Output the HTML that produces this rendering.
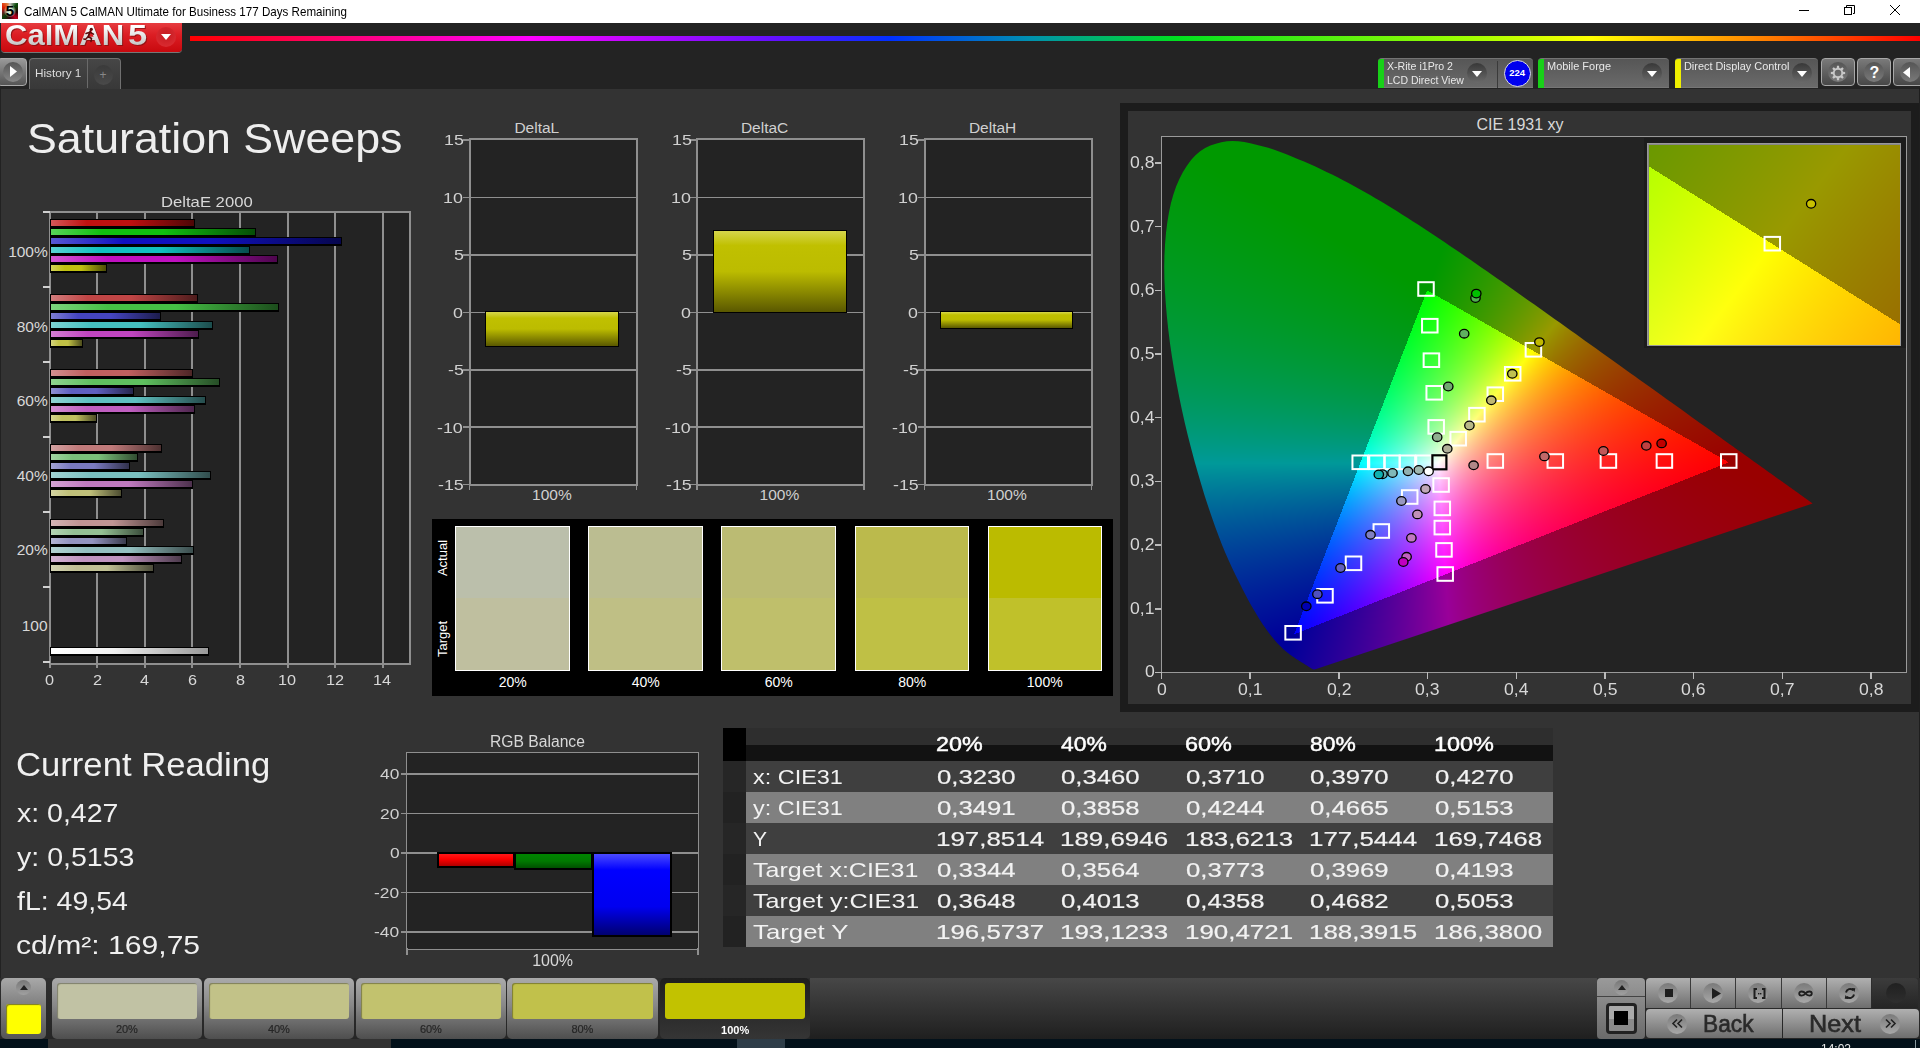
<!DOCTYPE html>
<html><head><meta charset="utf-8">
<style>
html,body{margin:0;padding:0;}
body{width:1920px;height:1048px;overflow:hidden;position:relative;background:#333333;font-family:"Liberation Sans", sans-serif;}
.a{position:absolute;}
.t{position:absolute;white-space:nowrap;line-height:1;}
svg{position:absolute;overflow:visible;}
</style></head><body>

<div class="a" style="left:0;top:0;width:1920px;height:23px;background:#fff;"></div>
<div class="a" style="left:2px;top:3px;width:16px;height:16px;background:conic-gradient(from 0deg,#c8c0c0,#0a4a0a 45deg,#200 100deg,#c00020 140deg,#400010 180deg,#0a400a 225deg,#702020 260deg,#e02000 300deg,#e08040 340deg,#c8c0c0);"></div>
<div class="a" style="left:4px;top:5px;width:12px;height:12px;background:radial-gradient(#d8f0d0 30%,rgba(220,240,210,0) 75%);"></div>
<div class="t" style="left:5.50px;top:3.33px;font-size:15.5px;font-weight:bold;color:#000;">5</div>
<div class="t" style="left:24.00px;top:6.09px;font-size:12.6px;color:#000;transform:scaleX(0.9212);transform-origin:0 0;">CalMAN 5 CalMAN Ultimate for Business 177 Days Remaining</div>
<div class="a" style="left:1799px;top:10px;width:10px;height:1px;background:#000;"></div>
<div class="a" style="left:1844px;top:7px;width:6px;height:6px;border:1px solid #000;"></div>
<svg style="left:1846px;top:5px;" width="9" height="9"><path d="M0.5 2V0.5H8.5V8.5H7" fill="none" stroke="#000" stroke-width="1"/></svg>
<svg style="left:1890px;top:5px;" width="10" height="10"><path d="M0 0L10 10M10 0L0 10" stroke="#000" stroke-width="1"/></svg>

<div class="a" style="left:0;top:23px;width:1920px;height:65.5px;background:#232323;"></div>
<div class="a" style="left:190px;top:35.5px;width:1730px;height:5.2px;background:linear-gradient(to right,#ff0000 0%,#ff00ff 19.6%,#6010ff 34%,#0030ff 40.5%,#0090b0 48.5%,#00e020 57%,#a0ff00 74%,#ffff00 81%,#ff8000 91%,#ff0000 100%);"></div>

<div class="a" style="left:1px;top:23px;width:181px;height:29px;background:linear-gradient(#e63c40,#dc1e24 40%,#c8090e);border-radius:0 0 4px 4px;box-shadow:0 1px 0 #777;"></div>
<div class="a" style="left:0;top:25px;width:182px;height:26px;overflow:hidden;"><div class="a" style="left:0;top:-25px;">
<div class="t" style="left:5.93px;top:21.85px;font-size:29px;font-weight:bold;color:#7a1010;transform:scaleX(1.0718);transform-origin:0 0;opacity:.7;">CalMAN</div>
<div class="t" style="left:129.00px;top:21.85px;font-size:29px;font-weight:bold;color:#7a1010;transform:scaleX(1.1875);transform-origin:0 0;opacity:.7;">5</div>
<div class="t" style="left:4.93px;top:20.85px;font-size:29px;font-weight:bold;color:#e6e6e6;transform:scaleX(1.0718);transform-origin:0 0;background:linear-gradient(#ffffff 20%,#c4c4c4 85%);-webkit-background-clip:text;background-clip:text;-webkit-text-fill-color:transparent;">CalMAN</div>
<div class="t" style="left:128.00px;top:20.85px;font-size:29px;font-weight:bold;color:#e6e6e6;transform:scaleX(1.1875);transform-origin:0 0;background:linear-gradient(#ffffff 20%,#c4c4c4 85%);-webkit-background-clip:text;background-clip:text;-webkit-text-fill-color:transparent;">5</div>
</div></div>
<svg style="left:83px;top:27px;" width="14" height="16"><circle cx="8.3" cy="2.3" r="1.6" fill="#5a0a0a"/><path d="M7.3 4.5L5.2 9.5M6.8 5.2L3 6.5M6.8 5.2L10.5 7.2M5.2 9.5L8.5 11.5L8 14.5M5.2 9.5L2.5 12.5L0.8 12" fill="none" stroke="#5a0a0a" stroke-width="1.5" stroke-linecap="round"/></svg>
<div class="a" style="left:156px;top:27px;width:20px;height:20px;border-radius:50%;background:radial-gradient(circle at 50% 40%,#c51a20,#e03036);"></div>
<svg style="left:161px;top:34px;" width="10" height="6"><path d="M0 0H10L5 6Z" fill="#fff"/></svg>

<div class="a" style="left:-3px;top:58px;width:28px;height:26px;border:1px solid #aaa;border-radius:4px;background:linear-gradient(#999,#555);"></div>
<div class="a" style="left:3px;top:62px;width:20px;height:20px;border-radius:50%;background:linear-gradient(#555,#888);"></div>
<svg style="left:10px;top:66px;" width="7" height="11"><path d="M0 0L7 5.5L0 11Z" fill="#fff"/></svg>
<div class="a" style="left:29px;top:58px;width:90px;height:29.5px;border:1px solid #707070;border-bottom:none;border-radius:4px 4px 0 0;background:linear-gradient(#464646,#383838);"></div>
<div class="a" style="left:87px;top:59px;width:1px;height:29px;background:#6a6a6a;"></div>
<div class="a" style="left:94px;top:65px;width:19px;height:20px;border-radius:50%;background:linear-gradient(#3a3a3a,#4a4a4a);"></div>
<div class="t" style="left:35.00px;top:68.22px;font-size:11.5px;color:#ddd;transform:scaleX(1.0228);transform-origin:0 0;">History 1</div>
<div class="t" style="left:99.50px;top:68.80px;font-size:12px;color:#888;">+</div>
<div class="a" style="left:1378px;top:58px;width:155px;height:28px;border-top:1px solid #747474;border-bottom:1px solid #767676;border-radius:4px 4px 0 0;background:linear-gradient(#565656,#6a6a6a);"></div><div class="a" style="left:1378px;top:59px;width:6px;height:29px;background:#18d018;border-radius:3px 0 0 0;"></div>
<div class="t" style="left:1387.00px;top:60.82px;font-size:10.8px;color:#e8e8e8;transform:scaleX(0.9821);transform-origin:0 0;">X-Rite i1Pro 2</div>
<div class="t" style="left:1387.00px;top:74.82px;font-size:10.8px;color:#e8e8e8;transform:scaleX(0.9722);transform-origin:0 0;">LCD Direct View</div>
<div class="a" style="left:1467px;top:63px;width:20px;height:20px;border-radius:50%;background:linear-gradient(#383838,#6a6a6a);"></div><svg style="left:1472px;top:71px;" width="10" height="6"><path d="M0 0H10L5 6Z" fill="#fff"/></svg>
<div class="a" style="left:1497px;top:61px;width:1px;height:27px;background:#3a3a3a;"></div>
<div class="a" style="left:1504px;top:60px;width:25px;height:25px;border-radius:50%;background:#0000ee;border:1px solid #ddd;"></div>
<div class="t" style="left:1509.22px;top:68.42px;font-size:9.5px;font-weight:bold;color:#fff;">224</div>
<div class="a" style="left:1538px;top:58px;width:131px;height:28px;border-top:1px solid #747474;border-bottom:1px solid #767676;border-radius:4px 4px 0 0;background:linear-gradient(#565656,#6a6a6a);"></div><div class="a" style="left:1538px;top:59px;width:6px;height:29px;background:#18d018;border-radius:3px 0 0 0;"></div>
<div class="t" style="left:1547.00px;top:60.82px;font-size:10.8px;color:#e8e8e8;transform:scaleX(1.0158);transform-origin:0 0;">Mobile Forge</div>
<div class="a" style="left:1642px;top:63px;width:20px;height:20px;border-radius:50%;background:linear-gradient(#383838,#6a6a6a);"></div><svg style="left:1647px;top:71px;" width="10" height="6"><path d="M0 0H10L5 6Z" fill="#fff"/></svg>
<div class="a" style="left:1675px;top:58px;width:143px;height:28px;border-top:1px solid #747474;border-bottom:1px solid #767676;border-radius:4px 4px 0 0;background:linear-gradient(#565656,#6a6a6a);"></div><div class="a" style="left:1675px;top:59px;width:6px;height:29px;background:#f0f000;border-radius:3px 0 0 0;"></div>
<div class="t" style="left:1684.00px;top:60.82px;font-size:10.8px;color:#e8e8e8;transform:scaleX(1.0096);transform-origin:0 0;">Direct Display Control</div>
<div class="a" style="left:1792px;top:63px;width:20px;height:20px;border-radius:50%;background:linear-gradient(#383838,#6a6a6a);"></div><svg style="left:1797px;top:71px;" width="10" height="6"><path d="M0 0H10L5 6Z" fill="#fff"/></svg>
<div class="a" style="left:1821px;top:58px;width:32px;height:26px;border:1px solid #a8a8a8;border-radius:4px;background:linear-gradient(#7a7a7a,#474747);"></div><div class="a" style="left:1828px;top:62px;width:20px;height:20px;border-radius:50%;background:linear-gradient(#555,#7a7a7a);"></div>
<svg style="left:1829px;top:63.5px;" width="18" height="18"><path d="M16.13 7.99L16.13 10.01L14.04 10.29L13.48 11.65L14.76 13.32L13.32 14.76L11.65 13.48L10.29 14.04L10.01 16.13L7.99 16.13L7.71 14.04L6.35 13.48L4.68 14.76L3.24 13.32L4.52 11.65L3.96 10.29L1.87 10.01L1.87 7.99L3.96 7.71L4.52 6.35L3.24 4.68L4.68 3.24L6.35 4.52L7.71 3.96L7.99 1.87L10.01 1.87L10.29 3.96L11.65 4.52L13.32 3.24L14.76 4.68L13.48 6.35L14.04 7.71ZM12.3 9A3.3 3.3 0 1 0 5.7 9A3.3 3.3 0 1 0 12.3 9Z" fill="#c8c8c8" fill-rule="evenodd"/></svg>
<div class="a" style="left:1857px;top:58px;width:32px;height:26px;border:1px solid #a8a8a8;border-radius:4px;background:linear-gradient(#7a7a7a,#474747);"></div><div class="a" style="left:1864px;top:62px;width:20px;height:20px;border-radius:50%;background:linear-gradient(#555,#7a7a7a);"></div>
<div class="t" style="left:1869.50px;top:65.40px;font-size:16px;font-weight:bold;color:#fff;">?</div>
<div class="a" style="left:1893px;top:58px;width:32px;height:26px;border:1px solid #a8a8a8;border-radius:4px;background:linear-gradient(#7a7a7a,#474747);"></div><div class="a" style="left:1900px;top:62px;width:20px;height:20px;border-radius:50%;background:linear-gradient(#555,#7a7a7a);"></div>
<svg style="left:1903px;top:67px;" width="7" height="11"><path d="M7 0L0 5.5L7 11Z" fill="#fff"/></svg>
<div class="a" style="left:0;top:88px;width:1px;height:890px;background:#222;"></div>
<div class="a" style="left:1919px;top:88px;width:1px;height:890px;background:#1e1e1e;"></div>
<div class="t" style="left:27.45px;top:116.79px;font-size:42.6px;color:#eeeeee;transform:scaleX(1.0500);transform-origin:0 0;">Saturation Sweeps</div>
<div class="a" style="left:49px;top:211px;width:358px;height:450px;background:#232323;border:2px solid #8f8f8f;border-right-width:2px;"></div>
<div class="a" style="left:96.2px;top:213px;width:2px;height:449px;background:#8f8f8f;"></div>
<div class="a" style="left:96.2px;top:661px;width:2px;height:7px;background:#8f8f8f;"></div>
<div class="a" style="left:143.8px;top:213px;width:2px;height:449px;background:#8f8f8f;"></div>
<div class="a" style="left:143.8px;top:661px;width:2px;height:7px;background:#8f8f8f;"></div>
<div class="a" style="left:191.4px;top:213px;width:2px;height:449px;background:#8f8f8f;"></div>
<div class="a" style="left:191.4px;top:661px;width:2px;height:7px;background:#8f8f8f;"></div>
<div class="a" style="left:239.0px;top:213px;width:2px;height:449px;background:#8f8f8f;"></div>
<div class="a" style="left:239.0px;top:661px;width:2px;height:7px;background:#8f8f8f;"></div>
<div class="a" style="left:286.6px;top:213px;width:2px;height:449px;background:#8f8f8f;"></div>
<div class="a" style="left:286.6px;top:661px;width:2px;height:7px;background:#8f8f8f;"></div>
<div class="a" style="left:334.2px;top:213px;width:2px;height:449px;background:#8f8f8f;"></div>
<div class="a" style="left:334.2px;top:661px;width:2px;height:7px;background:#8f8f8f;"></div>
<div class="a" style="left:381.8px;top:213px;width:2px;height:449px;background:#8f8f8f;"></div>
<div class="a" style="left:381.8px;top:661px;width:2px;height:7px;background:#8f8f8f;"></div>
<div class="a" style="left:49px;top:661px;width:2px;height:7px;background:#8f8f8f;"></div>
<div class="a" style="left:43px;top:211px;width:7px;height:2px;background:#d0d0d0;"></div>
<div class="a" style="left:43px;top:286px;width:7px;height:2px;background:#d0d0d0;"></div>
<div class="a" style="left:43px;top:361px;width:7px;height:2px;background:#d0d0d0;"></div>
<div class="a" style="left:43px;top:436px;width:7px;height:2px;background:#d0d0d0;"></div>
<div class="a" style="left:43px;top:511px;width:7px;height:2px;background:#d0d0d0;"></div>
<div class="a" style="left:43px;top:586px;width:7px;height:2px;background:#d0d0d0;"></div>
<div class="a" style="left:43px;top:661px;width:7px;height:2px;background:#d0d0d0;"></div>
<div class="t" style="left:45.12px;top:673.17px;font-size:14.5px;color:#d8d8d8;transform:scaleX(1.1200);transform-origin:0 0;">0</div>
<div class="t" style="left:92.72px;top:673.17px;font-size:14.5px;color:#d8d8d8;transform:scaleX(1.1200);transform-origin:0 0;">2</div>
<div class="t" style="left:140.32px;top:673.17px;font-size:14.5px;color:#d8d8d8;transform:scaleX(1.1200);transform-origin:0 0;">4</div>
<div class="t" style="left:187.92px;top:673.17px;font-size:14.5px;color:#d8d8d8;transform:scaleX(1.1200);transform-origin:0 0;">6</div>
<div class="t" style="left:235.52px;top:673.17px;font-size:14.5px;color:#d8d8d8;transform:scaleX(1.1200);transform-origin:0 0;">8</div>
<div class="t" style="left:278.04px;top:673.17px;font-size:14.5px;color:#d8d8d8;transform:scaleX(1.1200);transform-origin:0 0;">10</div>
<div class="t" style="left:325.64px;top:673.17px;font-size:14.5px;color:#d8d8d8;transform:scaleX(1.1200);transform-origin:0 0;">12</div>
<div class="t" style="left:373.24px;top:673.17px;font-size:14.5px;color:#d8d8d8;transform:scaleX(1.1200);transform-origin:0 0;">14</div>
<div class="t" style="left:161.43px;top:193.82px;font-size:15.5px;color:#d8d8d8;transform:scaleX(1.0745);transform-origin:0 0;">DeltaE 2000</div>
<div class="t" style="left:8.14px;top:244.32px;font-size:15.5px;color:#d8d8d8;">100%</div>
<div class="t" style="left:16.76px;top:318.82px;font-size:15.5px;color:#d8d8d8;">80%</div>
<div class="t" style="left:16.76px;top:393.32px;font-size:15.5px;color:#d8d8d8;">60%</div>
<div class="t" style="left:16.76px;top:467.82px;font-size:15.5px;color:#d8d8d8;">40%</div>
<div class="t" style="left:16.76px;top:542.33px;font-size:15.5px;color:#d8d8d8;">20%</div>
<div class="t" style="left:21.76px;top:617.83px;font-size:15.5px;color:#d8d8d8;">100</div>
<div class="a" style="left:50px;top:219px;width:144.5px;height:9px;background:#000;"></div><div class="a" style="left:51px;top:220px;width:142.5px;height:6px;background:linear-gradient(to right,#d35858,#c01010 25%,#c01010 55%,#4d0606);"></div>
<div class="a" style="left:50px;top:228px;width:205.7px;height:9px;background:#000;"></div><div class="a" style="left:51px;top:229px;width:203.7px;height:6px;background:linear-gradient(to right,#58d358,#10c010 25%,#10c010 55%,#064d06);"></div>
<div class="a" style="left:50px;top:237px;width:291.7px;height:9px;background:#000;"></div><div class="a" style="left:51px;top:238px;width:289.7px;height:6px;background:linear-gradient(to right,#5858d3,#1010c0 25%,#1010c0 55%,#06064d);"></div>
<div class="a" style="left:50px;top:246px;width:199.5px;height:9px;background:#000;"></div><div class="a" style="left:51px;top:247px;width:197.5px;height:6px;background:linear-gradient(to right,#58d3d3,#10c0c0 25%,#10c0c0 55%,#064d4d);"></div>
<div class="a" style="left:50px;top:255px;width:228.0px;height:9px;background:#000;"></div><div class="a" style="left:51px;top:256px;width:226.0px;height:6px;background:linear-gradient(to right,#d358d3,#c010c0 25%,#c010c0 55%,#4d064d);"></div>
<div class="a" style="left:50px;top:264px;width:56.6px;height:9px;background:#000;"></div><div class="a" style="left:51px;top:265px;width:54.6px;height:6px;background:linear-gradient(to right,#d3d358,#c0c010 25%,#c0c010 55%,#4d4d06);"></div>
<div class="a" style="left:50px;top:294px;width:147.6px;height:9px;background:#000;"></div><div class="a" style="left:51px;top:295px;width:145.6px;height:6px;background:linear-gradient(to right,#d37d7d,#c04545 25%,#c04545 55%,#4d1c1c);"></div>
<div class="a" style="left:50px;top:303px;width:228.6px;height:9px;background:#000;"></div><div class="a" style="left:51px;top:304px;width:226.6px;height:6px;background:linear-gradient(to right,#7dd37d,#45c045 25%,#45c045 55%,#1c4d1c);"></div>
<div class="a" style="left:50px;top:312px;width:111.3px;height:9px;background:#000;"></div><div class="a" style="left:51px;top:313px;width:109.3px;height:6px;background:linear-gradient(to right,#7d7dd3,#4545c0 25%,#4545c0 55%,#1c1c4d);"></div>
<div class="a" style="left:50px;top:321px;width:163.3px;height:9px;background:#000;"></div><div class="a" style="left:51px;top:322px;width:161.3px;height:6px;background:linear-gradient(to right,#7dd3d3,#45c0c0 25%,#45c0c0 55%,#1c4d4d);"></div>
<div class="a" style="left:50px;top:330px;width:149.0px;height:9px;background:#000;"></div><div class="a" style="left:51px;top:331px;width:147.0px;height:6px;background:linear-gradient(to right,#d37dd3,#c045c0 25%,#c045c0 55%,#4d1c4d);"></div>
<div class="a" style="left:50px;top:339px;width:33.0px;height:9px;background:#000;"></div><div class="a" style="left:51px;top:340px;width:31.0px;height:6px;background:linear-gradient(to right,#d3d37d,#c0c045 25%,#c0c045 55%,#4d4d1c);"></div>
<div class="a" style="left:50px;top:369px;width:142.6px;height:9px;background:#000;"></div><div class="a" style="left:51px;top:370px;width:140.6px;height:6px;background:linear-gradient(to right,#d38f8f,#c05f5f 25%,#c05f5f 55%,#4d2626);"></div>
<div class="a" style="left:50px;top:378px;width:170.4px;height:9px;background:#000;"></div><div class="a" style="left:51px;top:379px;width:168.4px;height:6px;background:linear-gradient(to right,#8fd38f,#5fc05f 25%,#5fc05f 55%,#264d26);"></div>
<div class="a" style="left:50px;top:387px;width:84.0px;height:9px;background:#000;"></div><div class="a" style="left:51px;top:388px;width:82.0px;height:6px;background:linear-gradient(to right,#8f8fd3,#5f5fc0 25%,#5f5fc0 55%,#26264d);"></div>
<div class="a" style="left:50px;top:396px;width:156.0px;height:9px;background:#000;"></div><div class="a" style="left:51px;top:397px;width:154.0px;height:6px;background:linear-gradient(to right,#8fd3d3,#5fc0c0 25%,#5fc0c0 55%,#264d4d);"></div>
<div class="a" style="left:50px;top:405px;width:145.4px;height:9px;background:#000;"></div><div class="a" style="left:51px;top:406px;width:143.4px;height:6px;background:linear-gradient(to right,#d38fd3,#c05fc0 25%,#c05fc0 55%,#4d264d);"></div>
<div class="a" style="left:50px;top:414px;width:47.4px;height:9px;background:#000;"></div><div class="a" style="left:51px;top:415px;width:45.4px;height:6px;background:linear-gradient(to right,#d3d38f,#c0c05f 25%,#c0c05f 55%,#4d4d26);"></div>
<div class="a" style="left:50px;top:444px;width:111.5px;height:9px;background:#000;"></div><div class="a" style="left:51px;top:445px;width:109.5px;height:6px;background:linear-gradient(to right,#d3a2a2,#c07a7a 25%,#c07a7a 55%,#4d3131);"></div>
<div class="a" style="left:50px;top:453px;width:88.3px;height:9px;background:#000;"></div><div class="a" style="left:51px;top:454px;width:86.3px;height:6px;background:linear-gradient(to right,#a2d3a2,#7ac07a 25%,#7ac07a 55%,#314d31);"></div>
<div class="a" style="left:50px;top:462px;width:80.2px;height:9px;background:#000;"></div><div class="a" style="left:51px;top:463px;width:78.2px;height:6px;background:linear-gradient(to right,#a2a2d3,#7a7ac0 25%,#7a7ac0 55%,#31314d);"></div>
<div class="a" style="left:50px;top:471px;width:160.5px;height:9px;background:#000;"></div><div class="a" style="left:51px;top:472px;width:158.5px;height:6px;background:linear-gradient(to right,#a2d3d3,#7ac0c0 25%,#7ac0c0 55%,#314d4d);"></div>
<div class="a" style="left:50px;top:480px;width:142.6px;height:9px;background:#000;"></div><div class="a" style="left:51px;top:481px;width:140.6px;height:6px;background:linear-gradient(to right,#d3a2d3,#c07ac0 25%,#c07ac0 55%,#4d314d);"></div>
<div class="a" style="left:50px;top:489px;width:72.0px;height:9px;background:#000;"></div><div class="a" style="left:51px;top:490px;width:70.0px;height:6px;background:linear-gradient(to right,#d3d3a2,#c0c07a 25%,#c0c07a 55%,#4d4d31);"></div>
<div class="a" style="left:50px;top:519px;width:113.5px;height:9px;background:#000;"></div><div class="a" style="left:51px;top:520px;width:111.5px;height:6px;background:linear-gradient(to right,#d3b4b4,#c09494 25%,#c09494 55%,#4d3b3b);"></div>
<div class="a" style="left:50px;top:528px;width:94.0px;height:9px;background:#000;"></div><div class="a" style="left:51px;top:529px;width:92.0px;height:6px;background:linear-gradient(to right,#b4d3b4,#94c094 25%,#94c094 55%,#3b4d3b);"></div>
<div class="a" style="left:50px;top:537px;width:77.0px;height:9px;background:#000;"></div><div class="a" style="left:51px;top:538px;width:75.0px;height:6px;background:linear-gradient(to right,#b4b4d3,#9494c0 25%,#9494c0 55%,#3b3b4d);"></div>
<div class="a" style="left:50px;top:546px;width:144.3px;height:9px;background:#000;"></div><div class="a" style="left:51px;top:547px;width:142.3px;height:6px;background:linear-gradient(to right,#b4d3d3,#94c0c0 25%,#94c0c0 55%,#3b4d4d);"></div>
<div class="a" style="left:50px;top:555px;width:131.6px;height:9px;background:#000;"></div><div class="a" style="left:51px;top:556px;width:129.6px;height:6px;background:linear-gradient(to right,#d3b4d3,#c094c0 25%,#c094c0 55%,#4d3b4d);"></div>
<div class="a" style="left:50px;top:564px;width:103.8px;height:9px;background:#000;"></div><div class="a" style="left:51px;top:565px;width:101.8px;height:6px;background:linear-gradient(to right,#d3d3b4,#c0c094 25%,#c0c094 55%,#4d4d3b);"></div>
<div class="a" style="left:50px;top:647px;width:158.5px;height:9px;background:#000;"></div><div class="a" style="left:51px;top:648px;width:156.5px;height:6px;background:linear-gradient(to right,#fff,#f0f0f0 40%,#999);"></div>
<div class="a" style="left:468.5px;top:137.5px;width:165.0px;height:344px;background:#232323;border:2px solid #8f8f8f;"></div>
<div class="a" style="left:469.5px;top:196.65px;width:166.0px;height:1.5px;background:#8f8f8f;"></div>
<div class="a" style="left:469.5px;top:254.10px;width:166.0px;height:1.5px;background:#8f8f8f;"></div>
<div class="a" style="left:469.5px;top:311.55px;width:166.0px;height:1.5px;background:#8f8f8f;"></div>
<div class="a" style="left:469.5px;top:369.00px;width:166.0px;height:1.5px;background:#8f8f8f;"></div>
<div class="a" style="left:469.5px;top:426.45px;width:166.0px;height:1.5px;background:#8f8f8f;"></div>
<div class="a" style="left:462.5px;top:139.20px;width:7px;height:1.5px;background:#8f8f8f;"></div>
<div class="t" style="left:444.39px;top:132.28px;font-size:15.5px;color:#d0d0d0;transform:scaleX(1.1500);transform-origin:0 0;">15</div>
<div class="a" style="left:462.5px;top:196.65px;width:7px;height:1.5px;background:#8f8f8f;"></div>
<div class="t" style="left:443.24px;top:189.72px;font-size:15.5px;color:#d0d0d0;transform:scaleX(1.1500);transform-origin:0 0;">10</div>
<div class="a" style="left:462.5px;top:254.10px;width:7px;height:1.5px;background:#8f8f8f;"></div>
<div class="t" style="left:454.30px;top:247.18px;font-size:15.5px;color:#d0d0d0;transform:scaleX(1.1500);transform-origin:0 0;">5</div>
<div class="a" style="left:462.5px;top:311.55px;width:7px;height:1.5px;background:#8f8f8f;"></div>
<div class="t" style="left:453.15px;top:304.62px;font-size:15.5px;color:#d0d0d0;transform:scaleX(1.1500);transform-origin:0 0;">0</div>
<div class="a" style="left:462.5px;top:369.00px;width:7px;height:1.5px;background:#8f8f8f;"></div>
<div class="t" style="left:448.36px;top:362.07px;font-size:15.5px;color:#d0d0d0;transform:scaleX(1.1500);transform-origin:0 0;">-5</div>
<div class="a" style="left:462.5px;top:426.45px;width:7px;height:1.5px;background:#8f8f8f;"></div>
<div class="t" style="left:437.30px;top:419.53px;font-size:15.5px;color:#d0d0d0;transform:scaleX(1.1500);transform-origin:0 0;">-10</div>
<div class="a" style="left:462.5px;top:483.90px;width:7px;height:1.5px;background:#8f8f8f;"></div>
<div class="t" style="left:438.45px;top:476.97px;font-size:15.5px;color:#d0d0d0;transform:scaleX(1.1500);transform-origin:0 0;">-15</div>
<div class="a" style="left:468.5px;top:483px;width:1.5px;height:7px;background:#8f8f8f;"></div>
<div class="a" style="left:635.5px;top:483px;width:1.5px;height:7px;background:#8f8f8f;"></div>
<div class="t" style="left:514.41px;top:119.83px;font-size:15.5px;color:#d0d0d0;">DeltaL</div>
<div class="t" style="left:532.07px;top:487.32px;font-size:15.5px;color:#d0d0d0;">100%</div>
<div class="a" style="left:485px;top:311.3px;width:134px;height:35.3px;background:#000;"></div><div class="a" style="left:486px;top:312.3px;width:132px;height:33.3px;background:linear-gradient(#d6d64c,#c0c000 18%,#bcbc00 50%,#5a5800);"></div>
<div class="a" style="left:696px;top:137.5px;width:165px;height:344px;background:#232323;border:2px solid #8f8f8f;"></div>
<div class="a" style="left:697px;top:196.65px;width:166px;height:1.5px;background:#8f8f8f;"></div>
<div class="a" style="left:697px;top:254.10px;width:166px;height:1.5px;background:#8f8f8f;"></div>
<div class="a" style="left:697px;top:311.55px;width:166px;height:1.5px;background:#8f8f8f;"></div>
<div class="a" style="left:697px;top:369.00px;width:166px;height:1.5px;background:#8f8f8f;"></div>
<div class="a" style="left:697px;top:426.45px;width:166px;height:1.5px;background:#8f8f8f;"></div>
<div class="a" style="left:690px;top:139.20px;width:7px;height:1.5px;background:#8f8f8f;"></div>
<div class="t" style="left:671.89px;top:132.28px;font-size:15.5px;color:#d0d0d0;transform:scaleX(1.1500);transform-origin:0 0;">15</div>
<div class="a" style="left:690px;top:196.65px;width:7px;height:1.5px;background:#8f8f8f;"></div>
<div class="t" style="left:670.74px;top:189.72px;font-size:15.5px;color:#d0d0d0;transform:scaleX(1.1500);transform-origin:0 0;">10</div>
<div class="a" style="left:690px;top:254.10px;width:7px;height:1.5px;background:#8f8f8f;"></div>
<div class="t" style="left:681.80px;top:247.18px;font-size:15.5px;color:#d0d0d0;transform:scaleX(1.1500);transform-origin:0 0;">5</div>
<div class="a" style="left:690px;top:311.55px;width:7px;height:1.5px;background:#8f8f8f;"></div>
<div class="t" style="left:680.65px;top:304.62px;font-size:15.5px;color:#d0d0d0;transform:scaleX(1.1500);transform-origin:0 0;">0</div>
<div class="a" style="left:690px;top:369.00px;width:7px;height:1.5px;background:#8f8f8f;"></div>
<div class="t" style="left:675.86px;top:362.07px;font-size:15.5px;color:#d0d0d0;transform:scaleX(1.1500);transform-origin:0 0;">-5</div>
<div class="a" style="left:690px;top:426.45px;width:7px;height:1.5px;background:#8f8f8f;"></div>
<div class="t" style="left:664.80px;top:419.53px;font-size:15.5px;color:#d0d0d0;transform:scaleX(1.1500);transform-origin:0 0;">-10</div>
<div class="a" style="left:690px;top:483.90px;width:7px;height:1.5px;background:#8f8f8f;"></div>
<div class="t" style="left:665.95px;top:476.97px;font-size:15.5px;color:#d0d0d0;transform:scaleX(1.1500);transform-origin:0 0;">-15</div>
<div class="a" style="left:696px;top:483px;width:1.5px;height:7px;background:#8f8f8f;"></div>
<div class="a" style="left:863px;top:483px;width:1.5px;height:7px;background:#8f8f8f;"></div>
<div class="t" style="left:740.91px;top:119.83px;font-size:15.5px;color:#d0d0d0;">DeltaC</div>
<div class="t" style="left:759.57px;top:487.32px;font-size:15.5px;color:#d0d0d0;">100%</div>
<div class="a" style="left:712.5px;top:229.7px;width:134.0px;height:83.6px;background:#000;"></div><div class="a" style="left:713.5px;top:230.7px;width:132.0px;height:81.6px;background:linear-gradient(#d6d64c,#c0c000 18%,#bcbc00 50%,#5a5800);"></div>
<div class="a" style="left:923.5px;top:137.5px;width:165.0px;height:344px;background:#232323;border:2px solid #8f8f8f;"></div>
<div class="a" style="left:924.5px;top:196.65px;width:166.0px;height:1.5px;background:#8f8f8f;"></div>
<div class="a" style="left:924.5px;top:254.10px;width:166.0px;height:1.5px;background:#8f8f8f;"></div>
<div class="a" style="left:924.5px;top:311.55px;width:166.0px;height:1.5px;background:#8f8f8f;"></div>
<div class="a" style="left:924.5px;top:369.00px;width:166.0px;height:1.5px;background:#8f8f8f;"></div>
<div class="a" style="left:924.5px;top:426.45px;width:166.0px;height:1.5px;background:#8f8f8f;"></div>
<div class="a" style="left:917.5px;top:139.20px;width:7px;height:1.5px;background:#8f8f8f;"></div>
<div class="t" style="left:899.39px;top:132.28px;font-size:15.5px;color:#d0d0d0;transform:scaleX(1.1500);transform-origin:0 0;">15</div>
<div class="a" style="left:917.5px;top:196.65px;width:7px;height:1.5px;background:#8f8f8f;"></div>
<div class="t" style="left:898.24px;top:189.72px;font-size:15.5px;color:#d0d0d0;transform:scaleX(1.1500);transform-origin:0 0;">10</div>
<div class="a" style="left:917.5px;top:254.10px;width:7px;height:1.5px;background:#8f8f8f;"></div>
<div class="t" style="left:909.30px;top:247.18px;font-size:15.5px;color:#d0d0d0;transform:scaleX(1.1500);transform-origin:0 0;">5</div>
<div class="a" style="left:917.5px;top:311.55px;width:7px;height:1.5px;background:#8f8f8f;"></div>
<div class="t" style="left:908.15px;top:304.62px;font-size:15.5px;color:#d0d0d0;transform:scaleX(1.1500);transform-origin:0 0;">0</div>
<div class="a" style="left:917.5px;top:369.00px;width:7px;height:1.5px;background:#8f8f8f;"></div>
<div class="t" style="left:903.36px;top:362.07px;font-size:15.5px;color:#d0d0d0;transform:scaleX(1.1500);transform-origin:0 0;">-5</div>
<div class="a" style="left:917.5px;top:426.45px;width:7px;height:1.5px;background:#8f8f8f;"></div>
<div class="t" style="left:892.30px;top:419.53px;font-size:15.5px;color:#d0d0d0;transform:scaleX(1.1500);transform-origin:0 0;">-10</div>
<div class="a" style="left:917.5px;top:483.90px;width:7px;height:1.5px;background:#8f8f8f;"></div>
<div class="t" style="left:893.45px;top:476.97px;font-size:15.5px;color:#d0d0d0;transform:scaleX(1.1500);transform-origin:0 0;">-15</div>
<div class="a" style="left:923.5px;top:483px;width:1.5px;height:7px;background:#8f8f8f;"></div>
<div class="a" style="left:1090.5px;top:483px;width:1.5px;height:7px;background:#8f8f8f;"></div>
<div class="t" style="left:968.91px;top:119.83px;font-size:15.5px;color:#d0d0d0;">DeltaH</div>
<div class="t" style="left:987.07px;top:487.32px;font-size:15.5px;color:#d0d0d0;">100%</div>
<div class="a" style="left:939.5px;top:311.3px;width:133.5px;height:17.5px;background:#000;"></div><div class="a" style="left:940.5px;top:312.3px;width:131.5px;height:15.5px;background:linear-gradient(#d6d64c,#c0c000 18%,#bcbc00 50%,#5a5800);"></div>
<div class="a" style="left:432px;top:519px;width:681px;height:177px;background:#000;"></div>
<div class="a" style="left:455px;top:526px;width:113px;height:143px;border:1px solid #fff;background:linear-gradient(#bbbfab 50%,#bfbf9f 50%);"></div>
<div class="t" style="left:498.71px;top:675.10px;font-size:14px;color:#fff;">20%</div>
<div class="a" style="left:588px;top:526px;width:113px;height:143px;border:1px solid #fff;background:linear-gradient(#bbbd91 50%,#bfbf85 50%);"></div>
<div class="t" style="left:631.71px;top:675.10px;font-size:14px;color:#fff;">40%</div>
<div class="a" style="left:721px;top:526px;width:113px;height:143px;border:1px solid #fff;background:linear-gradient(#bbbb73 50%,#bfbf6b 50%);"></div>
<div class="t" style="left:764.71px;top:675.10px;font-size:14px;color:#fff;">60%</div>
<div class="a" style="left:855px;top:526px;width:112px;height:143px;border:1px solid #fff;background:linear-gradient(#bbba4c 50%,#bfc045 50%);"></div>
<div class="t" style="left:898.21px;top:675.10px;font-size:14px;color:#fff;">80%</div>
<div class="a" style="left:988px;top:526px;width:112px;height:143px;border:1px solid #fff;background:linear-gradient(#bbbb00 50%,#c0c12a 50%);"></div>
<div class="t" style="left:1026.82px;top:675.10px;font-size:14px;color:#fff;">100%</div>
<div class="t" style="left:442px;top:558px;font-size:13px;color:#fff;transform:translate(-50%,-50%) rotate(-90deg);">Actual</div>
<div class="t" style="left:442px;top:639px;font-size:13px;color:#fff;transform:translate(-50%,-50%) rotate(-90deg);">Target</div>
<div class="a" style="left:1120px;top:103px;width:799px;height:609px;background:#1c1c1c;"></div>
<div class="a" style="left:1128px;top:111px;width:783px;height:593px;background:#333;"></div>
<div class="t" style="left:1476.42px;top:117.40px;font-size:16px;color:#d8d8d8;">CIE 1931 xy</div>
<div class="a" style="left:1161px;top:136px;width:744px;height:535px;background:#232323;border:1.5px solid #9a9a9a;"></div>
<svg id="fbsvg" style="left:1161px;top:136px;" width="746" height="536"><defs><clipPath id="clo"><polygon points="154.4,533.3 154.4,533.3 154.4,533.3 154.4,533.3 154.4,533.3 154.4,533.3 154.3,533.3 154.3,533.3 154.3,533.3 154.3,533.3 154.2,533.4 154.2,533.4 154.2,533.4 154.1,533.4 154.1,533.4 154.1,533.4 154.0,533.4 154.0,533.4 153.9,533.4 153.9,533.4 153.9,533.4 153.9,533.4 153.8,533.4 153.8,533.4 153.8,533.4 153.7,533.4 153.7,533.5 153.6,533.5 153.6,533.5 153.5,533.5 153.5,533.5 153.4,533.5 153.3,533.5 153.3,533.4 153.2,533.4 153.1,533.4 153.1,533.4 153.0,533.4 152.9,533.4 152.9,533.4 152.8,533.4 152.7,533.4 152.6,533.4 152.6,533.4 152.5,533.4 152.4,533.4 152.3,533.3 152.2,533.3 152.0,533.3 151.9,533.2 151.7,533.1 151.6,533.1 151.4,533.0 151.2,532.9 151.1,532.8 150.9,532.7 150.7,532.6 150.5,532.5 150.3,532.4 150.0,532.2 149.8,532.1 149.5,532.0 149.3,531.8 149.0,531.6 148.7,531.4 148.4,531.3 148.0,531.0 147.7,530.8 147.4,530.6 147.0,530.4 146.6,530.1 146.2,529.9 145.8,529.6 145.4,529.3 144.9,529.0 144.5,528.7 144.0,528.4 143.5,528.1 142.9,527.7 142.3,527.3 141.7,527.0 141.1,526.6 140.4,526.1 139.7,525.7 138.9,525.2 138.2,524.7 137.4,524.3 136.6,523.7 135.7,523.2 134.9,522.6 133.9,522.0 133.0,521.4 132.0,520.7 131.0,520.0 129.9,519.3 128.8,518.5 127.7,517.6 126.5,516.7 125.4,515.8 124.2,514.8 122.9,513.7 121.6,512.5 120.2,511.1 118.7,509.6 117.1,507.9 115.5,506.1 113.8,504.2 112.0,502.1 110.1,499.7 108.1,497.1 106.1,494.4 104.0,491.5 101.9,488.4 99.6,485.0 97.2,481.2 94.7,477.1 92.2,472.8 89.5,468.1 86.8,463.1 83.9,457.8 81.0,452.0 77.9,445.8 74.6,439.2 71.2,432.2 67.8,424.8 64.4,417.0 60.9,408.6 57.5,399.8 54.1,390.4 50.6,380.6 47.1,370.3 43.6,359.7 40.3,348.6 36.9,337.0 33.5,324.9 30.1,312.4 26.8,299.5 23.7,286.6 20.8,273.6 18.1,260.5 15.5,247.1 13.0,233.5 10.8,220.0 8.9,206.6 7.2,193.5 5.9,180.7 4.8,167.9 3.9,155.2 3.4,142.9 3.2,130.9 3.4,119.4 4.0,108.2 4.9,97.3 6.2,86.8 7.9,76.8 9.9,67.4 12.3,58.6 15.1,50.5 18.4,43.0 22.0,36.0 25.9,29.7 30.1,24.1 34.5,19.2 39.1,15.2 44.1,12.0 49.4,9.5 54.8,7.7 60.3,6.3 65.9,5.4 71.6,5.0 77.4,5.3 83.3,6.1 89.3,7.3 95.3,8.7 101.3,10.2 107.2,11.9 113.3,13.8 119.3,16.0 125.4,18.4 131.4,20.8 137.2,23.2 143.0,25.6 148.7,28.1 154.4,30.6 160.0,33.2 165.5,35.9 171.1,38.6 176.6,41.4 182.1,44.2 187.5,47.1 192.9,50.0 198.3,53.0 203.7,56.0 209.0,59.1 214.4,62.2 219.8,65.4 225.1,68.6 230.4,71.8 235.7,75.1 241.1,78.4 246.4,81.8 251.7,85.2 256.9,88.6 262.2,92.0 267.5,95.5 272.8,99.0 278.1,102.5 283.4,106.1 288.7,109.6 294.0,113.2 299.2,116.8 304.5,120.4 309.8,124.1 315.1,127.7 320.4,131.4 325.7,135.0 330.9,138.7 336.2,142.4 341.5,146.1 346.8,149.8 352.0,153.5 357.3,157.2 362.6,160.9 367.8,164.6 373.0,168.3 378.3,172.0 383.5,175.8 388.7,179.5 393.9,183.1 399.1,186.8 404.2,190.5 409.4,194.2 414.5,197.9 419.6,201.5 424.7,205.1 429.7,208.7 434.8,212.3 439.8,215.9 444.7,219.5 449.7,223.0 454.6,226.5 459.4,230.0 464.3,233.5 469.1,236.9 473.9,240.3 478.6,243.7 483.2,247.0 487.8,250.3 492.4,253.6 496.9,256.8 501.4,260.0 505.8,263.2 510.2,266.3 514.4,269.3 518.7,272.4 522.8,275.3 526.9,278.3 530.9,281.1 534.8,283.9 538.6,286.6 542.3,289.3 545.9,291.8 549.4,294.4 552.8,296.8 556.2,299.2 559.5,301.6 562.8,303.9 566.0,306.2 569.1,308.4 572.1,310.6 575.0,312.7 577.8,314.7 580.5,316.6 583.1,318.5 585.7,320.3 588.1,322.0 590.5,323.7 592.8,325.4 595.1,327.0 597.2,328.5 599.3,330.0 601.3,331.4 603.2,332.8 605.1,334.2 606.9,335.4 608.6,336.7 610.2,337.8 611.8,339.0 613.4,340.1 614.8,341.1 616.3,342.2 617.6,343.1 618.9,344.1 620.2,345.0 621.4,345.8 622.6,346.7 623.8,347.5 624.8,348.3 625.9,349.0 626.9,349.8 627.9,350.5 628.9,351.2 629.8,351.9 630.8,352.5 631.7,353.1 632.5,353.8 633.3,354.4 634.2,354.9 634.9,355.5 635.7,356.0 636.4,356.6 637.1,357.1 637.8,357.5 638.4,358.0 639.1,358.5 639.7,358.9 640.2,359.3 640.8,359.7 641.3,360.1 641.8,360.4 642.3,360.8 642.7,361.1 643.2,361.4 643.6,361.7 644.0,362.0 644.3,362.2 644.7,362.5 645.0,362.7 645.4,363.0 645.7,363.2 646.0,363.4 646.3,363.6 646.5,363.8 646.8,364.0 647.0,364.2 647.3,364.3 647.5,364.5 647.7,364.6 647.9,364.8 648.0,364.9 648.2,365.0 648.3,365.1 648.5,365.2 648.6,365.3 648.7,365.4 648.9,365.5 649.0,365.6 649.1,365.7 649.3,365.8 649.5,365.9 649.7,366.1 649.9,366.2 650.1,366.4 650.3,366.5 650.5,366.7 650.8,366.8 651.0,367.0 651.2,367.1 651.4,367.3 651.5,367.4 651.7,367.5"/></clipPath><clipPath id="ctr"><polygon points="567.7,326.3 266.1,154.3 133.0,498.3"/></clipPath><filter id="fbl" x="-2%" y="-2%" width="104%" height="104%"><feGaussianBlur stdDeviation="5"/></filter><filter id="fbt" x="-2%" y="-2%" width="104%" height="104%"><feGaussianBlur stdDeviation="4"/></filter></defs><style>.fo rect{width:10px;height:10px}.fi rect{width:8px;height:8px}</style><g clip-path="url(#clo)"><g filter="url(#fbl)" class="fo"><rect x="50" y="-10" fill="#009900"/><rect x="60" y="-10" fill="#009900"/><rect x="70" y="-10" fill="#009900"/><rect x="80" y="-10" fill="#009900"/><rect x="30" y="0" fill="#009900"/><rect x="40" y="0" fill="#009900"/><rect x="50" y="0" fill="#009900"/><rect x="60" y="0" fill="#009900"/><rect x="70" y="0" fill="#009900"/><rect x="80" y="0" fill="#009900"/><rect x="90" y="0" fill="#009900"/><rect x="100" y="0" fill="#009900"/><rect x="110" y="0" fill="#009900"/><rect x="120" y="0" fill="#009900"/><rect x="20" y="10" fill="#009900"/><rect x="30" y="10" fill="#009900"/><rect x="40" y="10" fill="#009900"/><rect x="50" y="10" fill="#009900"/><rect x="60" y="10" fill="#009900"/><rect x="70" y="10" fill="#009900"/><rect x="80" y="10" fill="#009900"/><rect x="90" y="10" fill="#009900"/><rect x="100" y="10" fill="#009900"/><rect x="110" y="10" fill="#009900"/><rect x="120" y="10" fill="#009900"/><rect x="130" y="10" fill="#009900"/><rect x="140" y="10" fill="#009900"/><rect x="10" y="20" fill="#009902"/><rect x="20" y="20" fill="#009901"/><rect x="30" y="20" fill="#009900"/><rect x="40" y="20" fill="#009900"/><rect x="50" y="20" fill="#009900"/><rect x="60" y="20" fill="#009900"/><rect x="70" y="20" fill="#009900"/><rect x="80" y="20" fill="#009900"/><rect x="90" y="20" fill="#009900"/><rect x="100" y="20" fill="#009900"/><rect x="110" y="20" fill="#009900"/><rect x="120" y="20" fill="#009900"/><rect x="130" y="20" fill="#009900"/><rect x="140" y="20" fill="#009900"/><rect x="150" y="20" fill="#009900"/><rect x="160" y="20" fill="#009900"/><rect x="10" y="30" fill="#009904"/><rect x="20" y="30" fill="#009903"/><rect x="30" y="30" fill="#009902"/><rect x="40" y="30" fill="#009901"/><rect x="50" y="30" fill="#009900"/><rect x="60" y="30" fill="#009900"/><rect x="70" y="30" fill="#009900"/><rect x="80" y="30" fill="#009900"/><rect x="90" y="30" fill="#009900"/><rect x="100" y="30" fill="#009900"/><rect x="110" y="30" fill="#009900"/><rect x="120" y="30" fill="#009900"/><rect x="130" y="30" fill="#009900"/><rect x="140" y="30" fill="#009900"/><rect x="150" y="30" fill="#009900"/><rect x="160" y="30" fill="#009900"/><rect x="170" y="30" fill="#009900"/><rect x="180" y="30" fill="#009900"/><rect x="0" y="40" fill="#009908"/><rect x="10" y="40" fill="#009907"/><rect x="20" y="40" fill="#009905"/><rect x="30" y="40" fill="#009904"/><rect x="40" y="40" fill="#009903"/><rect x="50" y="40" fill="#009902"/><rect x="60" y="40" fill="#009901"/><rect x="70" y="40" fill="#009900"/><rect x="80" y="40" fill="#009900"/><rect x="90" y="40" fill="#009900"/><rect x="100" y="40" fill="#009900"/><rect x="110" y="40" fill="#009900"/><rect x="120" y="40" fill="#009900"/><rect x="130" y="40" fill="#009900"/><rect x="140" y="40" fill="#009900"/><rect x="150" y="40" fill="#009900"/><rect x="160" y="40" fill="#009900"/><rect x="170" y="40" fill="#009900"/><rect x="180" y="40" fill="#009900"/><rect x="190" y="40" fill="#009900"/><rect x="200" y="40" fill="#009900"/><rect x="0" y="50" fill="#00990a"/><rect x="10" y="50" fill="#009909"/><rect x="20" y="50" fill="#009908"/><rect x="30" y="50" fill="#009907"/><rect x="40" y="50" fill="#009905"/><rect x="50" y="50" fill="#009904"/><rect x="60" y="50" fill="#009903"/><rect x="70" y="50" fill="#009902"/><rect x="80" y="50" fill="#009900"/><rect x="90" y="50" fill="#009900"/><rect x="100" y="50" fill="#009900"/><rect x="110" y="50" fill="#009900"/><rect x="120" y="50" fill="#009900"/><rect x="130" y="50" fill="#009900"/><rect x="140" y="50" fill="#009900"/><rect x="150" y="50" fill="#009900"/><rect x="160" y="50" fill="#009900"/><rect x="170" y="50" fill="#009900"/><rect x="180" y="50" fill="#009900"/><rect x="190" y="50" fill="#009900"/><rect x="200" y="50" fill="#009900"/><rect x="210" y="50" fill="#009900"/><rect x="220" y="50" fill="#009900"/><rect x="0" y="60" fill="#00990c"/><rect x="10" y="60" fill="#00990b"/><rect x="20" y="60" fill="#00990a"/><rect x="30" y="60" fill="#009909"/><rect x="40" y="60" fill="#009908"/><rect x="50" y="60" fill="#009907"/><rect x="60" y="60" fill="#009905"/><rect x="70" y="60" fill="#009904"/><rect x="80" y="60" fill="#009903"/><rect x="90" y="60" fill="#009901"/><rect x="100" y="60" fill="#009900"/><rect x="110" y="60" fill="#009900"/><rect x="120" y="60" fill="#009900"/><rect x="130" y="60" fill="#009900"/><rect x="140" y="60" fill="#009900"/><rect x="150" y="60" fill="#009900"/><rect x="160" y="60" fill="#009900"/><rect x="170" y="60" fill="#009900"/><rect x="180" y="60" fill="#009900"/><rect x="190" y="60" fill="#009900"/><rect x="200" y="60" fill="#009900"/><rect x="210" y="60" fill="#009900"/><rect x="220" y="60" fill="#009900"/><rect x="230" y="60" fill="#009900"/><rect x="0" y="70" fill="#00990f"/><rect x="10" y="70" fill="#00990e"/><rect x="20" y="70" fill="#00990d"/><rect x="30" y="70" fill="#00990b"/><rect x="40" y="70" fill="#00990a"/><rect x="50" y="70" fill="#009909"/><rect x="60" y="70" fill="#009908"/><rect x="70" y="70" fill="#009906"/><rect x="80" y="70" fill="#009905"/><rect x="90" y="70" fill="#009904"/><rect x="100" y="70" fill="#009903"/><rect x="110" y="70" fill="#009901"/><rect x="120" y="70" fill="#009900"/><rect x="130" y="70" fill="#009900"/><rect x="140" y="70" fill="#009900"/><rect x="150" y="70" fill="#009900"/><rect x="160" y="70" fill="#009900"/><rect x="170" y="70" fill="#009900"/><rect x="180" y="70" fill="#009900"/><rect x="190" y="70" fill="#009900"/><rect x="200" y="70" fill="#009900"/><rect x="210" y="70" fill="#009900"/><rect x="220" y="70" fill="#009900"/><rect x="230" y="70" fill="#009900"/><rect x="240" y="70" fill="#009900"/><rect x="250" y="70" fill="#009900"/><rect x="-10" y="80" fill="#009912"/><rect x="0" y="80" fill="#009912"/><rect x="10" y="80" fill="#009910"/><rect x="20" y="80" fill="#00990f"/><rect x="30" y="80" fill="#00990e"/><rect x="40" y="80" fill="#00990d"/><rect x="50" y="80" fill="#00990c"/><rect x="60" y="80" fill="#00990a"/><rect x="70" y="80" fill="#009909"/><rect x="80" y="80" fill="#009908"/><rect x="90" y="80" fill="#009906"/><rect x="100" y="80" fill="#009905"/><rect x="110" y="80" fill="#009904"/><rect x="120" y="80" fill="#009902"/><rect x="130" y="80" fill="#009901"/><rect x="140" y="80" fill="#009900"/><rect x="150" y="80" fill="#009900"/><rect x="160" y="80" fill="#009900"/><rect x="170" y="80" fill="#009900"/><rect x="180" y="80" fill="#009900"/><rect x="190" y="80" fill="#009900"/><rect x="200" y="80" fill="#009900"/><rect x="210" y="80" fill="#009900"/><rect x="220" y="80" fill="#009900"/><rect x="230" y="80" fill="#009900"/><rect x="240" y="80" fill="#009900"/><rect x="250" y="80" fill="#009900"/><rect x="260" y="80" fill="#009900"/><rect x="-10" y="90" fill="#009915"/><rect x="0" y="90" fill="#009914"/><rect x="10" y="90" fill="#009913"/><rect x="20" y="90" fill="#009912"/><rect x="30" y="90" fill="#009911"/><rect x="40" y="90" fill="#009910"/><rect x="50" y="90" fill="#00990e"/><rect x="60" y="90" fill="#00990d"/><rect x="70" y="90" fill="#00990c"/><rect x="80" y="90" fill="#00990a"/><rect x="90" y="90" fill="#009909"/><rect x="100" y="90" fill="#009908"/><rect x="110" y="90" fill="#009906"/><rect x="120" y="90" fill="#009905"/><rect x="130" y="90" fill="#009904"/><rect x="140" y="90" fill="#009902"/><rect x="150" y="90" fill="#009901"/><rect x="160" y="90" fill="#009900"/><rect x="170" y="90" fill="#009900"/><rect x="180" y="90" fill="#009900"/><rect x="190" y="90" fill="#009900"/><rect x="200" y="90" fill="#009900"/><rect x="210" y="90" fill="#009900"/><rect x="220" y="90" fill="#009900"/><rect x="230" y="90" fill="#009900"/><rect x="240" y="90" fill="#009900"/><rect x="250" y="90" fill="#009900"/><rect x="260" y="90" fill="#009900"/><rect x="270" y="90" fill="#009900"/><rect x="280" y="90" fill="#009900"/><rect x="-10" y="100" fill="#009918"/><rect x="0" y="100" fill="#009917"/><rect x="10" y="100" fill="#009916"/><rect x="20" y="100" fill="#009915"/><rect x="30" y="100" fill="#009914"/><rect x="40" y="100" fill="#009912"/><rect x="50" y="100" fill="#009911"/><rect x="60" y="100" fill="#009910"/><rect x="70" y="100" fill="#00990f"/><rect x="80" y="100" fill="#00990d"/><rect x="90" y="100" fill="#00990c"/><rect x="100" y="100" fill="#00990b"/><rect x="110" y="100" fill="#009909"/><rect x="120" y="100" fill="#009908"/><rect x="130" y="100" fill="#009906"/><rect x="140" y="100" fill="#009905"/><rect x="150" y="100" fill="#009903"/><rect x="160" y="100" fill="#009902"/><rect x="170" y="100" fill="#009900"/><rect x="180" y="100" fill="#009900"/><rect x="190" y="100" fill="#009900"/><rect x="200" y="100" fill="#009900"/><rect x="210" y="100" fill="#009900"/><rect x="220" y="100" fill="#009900"/><rect x="230" y="100" fill="#009900"/><rect x="240" y="100" fill="#009900"/><rect x="250" y="100" fill="#009900"/><rect x="260" y="100" fill="#009900"/><rect x="270" y="100" fill="#009900"/><rect x="280" y="100" fill="#009900"/><rect x="290" y="100" fill="#069900"/><rect x="-10" y="110" fill="#00991b"/><rect x="0" y="110" fill="#00991a"/><rect x="10" y="110" fill="#009919"/><rect x="20" y="110" fill="#009918"/><rect x="30" y="110" fill="#009917"/><rect x="40" y="110" fill="#009915"/><rect x="50" y="110" fill="#009914"/><rect x="60" y="110" fill="#009913"/><rect x="70" y="110" fill="#009912"/><rect x="80" y="110" fill="#009910"/><rect x="90" y="110" fill="#00990f"/><rect x="100" y="110" fill="#00990e"/><rect x="110" y="110" fill="#00990c"/><rect x="120" y="110" fill="#00990b"/><rect x="130" y="110" fill="#009909"/><rect x="140" y="110" fill="#009908"/><rect x="150" y="110" fill="#009906"/><rect x="160" y="110" fill="#009905"/><rect x="170" y="110" fill="#009903"/><rect x="180" y="110" fill="#009902"/><rect x="190" y="110" fill="#009900"/><rect x="200" y="110" fill="#009900"/><rect x="210" y="110" fill="#009900"/><rect x="220" y="110" fill="#009900"/><rect x="230" y="110" fill="#009900"/><rect x="240" y="110" fill="#009900"/><rect x="250" y="110" fill="#009900"/><rect x="260" y="110" fill="#009900"/><rect x="270" y="110" fill="#009900"/><rect x="280" y="110" fill="#029900"/><rect x="290" y="110" fill="#099900"/><rect x="300" y="110" fill="#109900"/><rect x="310" y="110" fill="#189900"/><rect x="-10" y="120" fill="#00991e"/><rect x="0" y="120" fill="#00991d"/><rect x="10" y="120" fill="#00991c"/><rect x="20" y="120" fill="#00991b"/><rect x="30" y="120" fill="#00991a"/><rect x="40" y="120" fill="#009918"/><rect x="50" y="120" fill="#009917"/><rect x="60" y="120" fill="#009916"/><rect x="70" y="120" fill="#009915"/><rect x="80" y="120" fill="#009913"/><rect x="90" y="120" fill="#009912"/><rect x="100" y="120" fill="#009911"/><rect x="110" y="120" fill="#00990f"/><rect x="120" y="120" fill="#00990e"/><rect x="130" y="120" fill="#00990c"/><rect x="140" y="120" fill="#00990b"/><rect x="150" y="120" fill="#009909"/><rect x="160" y="120" fill="#009908"/><rect x="170" y="120" fill="#009906"/><rect x="180" y="120" fill="#009905"/><rect x="190" y="120" fill="#009903"/><rect x="200" y="120" fill="#009901"/><rect x="210" y="120" fill="#009900"/><rect x="220" y="120" fill="#009900"/><rect x="230" y="120" fill="#009900"/><rect x="240" y="120" fill="#009900"/><rect x="250" y="120" fill="#009900"/><rect x="260" y="120" fill="#009900"/><rect x="270" y="120" fill="#009900"/><rect x="280" y="120" fill="#059900"/><rect x="290" y="120" fill="#0c9900"/><rect x="300" y="120" fill="#149900"/><rect x="310" y="120" fill="#1b9900"/><rect x="320" y="120" fill="#239900"/><rect x="-10" y="130" fill="#009921"/><rect x="0" y="130" fill="#009920"/><rect x="10" y="130" fill="#00991f"/><rect x="20" y="130" fill="#00991e"/><rect x="30" y="130" fill="#00991d"/><rect x="40" y="130" fill="#00991c"/><rect x="50" y="130" fill="#00991a"/><rect x="60" y="130" fill="#009919"/><rect x="70" y="130" fill="#009918"/><rect x="80" y="130" fill="#009917"/><rect x="90" y="130" fill="#009915"/><rect x="100" y="130" fill="#009914"/><rect x="110" y="130" fill="#009912"/><rect x="120" y="130" fill="#009911"/><rect x="130" y="130" fill="#009910"/><rect x="140" y="130" fill="#00990e"/><rect x="150" y="130" fill="#00990d"/><rect x="160" y="130" fill="#00990b"/><rect x="170" y="130" fill="#009909"/><rect x="180" y="130" fill="#009908"/><rect x="190" y="130" fill="#009906"/><rect x="200" y="130" fill="#009904"/><rect x="210" y="130" fill="#009903"/><rect x="220" y="130" fill="#009901"/><rect x="230" y="130" fill="#009900"/><rect x="240" y="130" fill="#009900"/><rect x="250" y="130" fill="#009900"/><rect x="260" y="130" fill="#009900"/><rect x="270" y="130" fill="#019900"/><rect x="280" y="130" fill="#089900"/><rect x="290" y="130" fill="#109900"/><rect x="300" y="130" fill="#179900"/><rect x="310" y="130" fill="#1f9900"/><rect x="320" y="130" fill="#289900"/><rect x="330" y="130" fill="#309900"/><rect x="340" y="130" fill="#399900"/><rect x="-10" y="140" fill="#009924"/><rect x="0" y="140" fill="#009924"/><rect x="10" y="140" fill="#009923"/><rect x="20" y="140" fill="#009922"/><rect x="30" y="140" fill="#009920"/><rect x="40" y="140" fill="#00991f"/><rect x="50" y="140" fill="#00991e"/><rect x="60" y="140" fill="#00991d"/><rect x="70" y="140" fill="#00991b"/><rect x="80" y="140" fill="#00991a"/><rect x="90" y="140" fill="#009919"/><rect x="100" y="140" fill="#009917"/><rect x="110" y="140" fill="#009916"/><rect x="120" y="140" fill="#009914"/><rect x="130" y="140" fill="#009913"/><rect x="140" y="140" fill="#009912"/><rect x="150" y="140" fill="#009910"/><rect x="160" y="140" fill="#00990e"/><rect x="170" y="140" fill="#00990d"/><rect x="180" y="140" fill="#00990b"/><rect x="190" y="140" fill="#009909"/><rect x="200" y="140" fill="#009908"/><rect x="210" y="140" fill="#009906"/><rect x="220" y="140" fill="#009904"/><rect x="230" y="140" fill="#009902"/><rect x="240" y="140" fill="#009900"/><rect x="250" y="140" fill="#009900"/><rect x="260" y="140" fill="#009900"/><rect x="270" y="140" fill="#039900"/><rect x="280" y="140" fill="#0b9900"/><rect x="290" y="140" fill="#139900"/><rect x="300" y="140" fill="#1b9900"/><rect x="310" y="140" fill="#249900"/><rect x="320" y="140" fill="#2c9900"/><rect x="330" y="140" fill="#359900"/><rect x="340" y="140" fill="#3e9900"/><rect x="350" y="140" fill="#479900"/><rect x="-10" y="150" fill="#009928"/><rect x="0" y="150" fill="#009927"/><rect x="10" y="150" fill="#009926"/><rect x="20" y="150" fill="#009925"/><rect x="30" y="150" fill="#009924"/><rect x="40" y="150" fill="#009923"/><rect x="50" y="150" fill="#009922"/><rect x="60" y="150" fill="#009920"/><rect x="70" y="150" fill="#00991f"/><rect x="80" y="150" fill="#00991e"/><rect x="90" y="150" fill="#00991c"/><rect x="100" y="150" fill="#00991b"/><rect x="110" y="150" fill="#00991a"/><rect x="120" y="150" fill="#009918"/><rect x="130" y="150" fill="#009917"/><rect x="140" y="150" fill="#009915"/><rect x="150" y="150" fill="#009914"/><rect x="160" y="150" fill="#009912"/><rect x="170" y="150" fill="#009910"/><rect x="180" y="150" fill="#00990f"/><rect x="190" y="150" fill="#00990d"/><rect x="200" y="150" fill="#00990b"/><rect x="210" y="150" fill="#00990a"/><rect x="220" y="150" fill="#009908"/><rect x="230" y="150" fill="#009906"/><rect x="240" y="150" fill="#009904"/><rect x="250" y="150" fill="#009902"/><rect x="260" y="150" fill="#009900"/><rect x="270" y="150" fill="#079900"/><rect x="280" y="150" fill="#0f9900"/><rect x="290" y="150" fill="#179900"/><rect x="300" y="150" fill="#1f9900"/><rect x="310" y="150" fill="#289900"/><rect x="320" y="150" fill="#319900"/><rect x="330" y="150" fill="#3a9900"/><rect x="340" y="150" fill="#449900"/><rect x="350" y="150" fill="#4e9900"/><rect x="360" y="150" fill="#589900"/><rect x="370" y="150" fill="#629900"/><rect x="-10" y="160" fill="#00992c"/><rect x="0" y="160" fill="#00992b"/><rect x="10" y="160" fill="#00992a"/><rect x="20" y="160" fill="#009929"/><rect x="30" y="160" fill="#009928"/><rect x="40" y="160" fill="#009927"/><rect x="50" y="160" fill="#009925"/><rect x="60" y="160" fill="#009924"/><rect x="70" y="160" fill="#009923"/><rect x="80" y="160" fill="#009922"/><rect x="90" y="160" fill="#009920"/><rect x="100" y="160" fill="#00991f"/><rect x="110" y="160" fill="#00991d"/><rect x="120" y="160" fill="#00991c"/><rect x="130" y="160" fill="#00991b"/><rect x="140" y="160" fill="#009919"/><rect x="150" y="160" fill="#009917"/><rect x="160" y="160" fill="#009916"/><rect x="170" y="160" fill="#009914"/><rect x="180" y="160" fill="#009913"/><rect x="190" y="160" fill="#009911"/><rect x="200" y="160" fill="#00990f"/><rect x="210" y="160" fill="#00990d"/><rect x="220" y="160" fill="#00990c"/><rect x="230" y="160" fill="#00990a"/><rect x="240" y="160" fill="#009908"/><rect x="250" y="160" fill="#009906"/><rect x="260" y="160" fill="#029904"/><rect x="270" y="160" fill="#0a9902"/><rect x="280" y="160" fill="#129900"/><rect x="290" y="160" fill="#1b9900"/><rect x="300" y="160" fill="#249900"/><rect x="310" y="160" fill="#2d9900"/><rect x="320" y="160" fill="#369900"/><rect x="330" y="160" fill="#409900"/><rect x="340" y="160" fill="#4a9900"/><rect x="350" y="160" fill="#549900"/><rect x="360" y="160" fill="#5f9900"/><rect x="370" y="160" fill="#6a9900"/><rect x="380" y="160" fill="#759900"/><rect x="-10" y="170" fill="#009930"/><rect x="0" y="170" fill="#00992f"/><rect x="10" y="170" fill="#00992e"/><rect x="20" y="170" fill="#00992d"/><rect x="30" y="170" fill="#00992c"/><rect x="40" y="170" fill="#00992b"/><rect x="50" y="170" fill="#009929"/><rect x="60" y="170" fill="#009928"/><rect x="70" y="170" fill="#009927"/><rect x="80" y="170" fill="#009926"/><rect x="90" y="170" fill="#009924"/><rect x="100" y="170" fill="#009923"/><rect x="110" y="170" fill="#009922"/><rect x="120" y="170" fill="#009920"/><rect x="130" y="170" fill="#00991f"/><rect x="140" y="170" fill="#00991d"/><rect x="150" y="170" fill="#00991c"/><rect x="160" y="170" fill="#00991a"/><rect x="170" y="170" fill="#009918"/><rect x="180" y="170" fill="#009917"/><rect x="190" y="170" fill="#009915"/><rect x="200" y="170" fill="#009913"/><rect x="210" y="170" fill="#009912"/><rect x="220" y="170" fill="#009910"/><rect x="230" y="170" fill="#00990e"/><rect x="240" y="170" fill="#00990c"/><rect x="250" y="170" fill="#00990a"/><rect x="260" y="170" fill="#059908"/><rect x="270" y="170" fill="#0e9906"/><rect x="280" y="170" fill="#169903"/><rect x="290" y="170" fill="#1f9901"/><rect x="300" y="170" fill="#299900"/><rect x="310" y="170" fill="#329900"/><rect x="320" y="170" fill="#3c9900"/><rect x="330" y="170" fill="#469900"/><rect x="340" y="170" fill="#519900"/><rect x="350" y="170" fill="#5c9900"/><rect x="360" y="170" fill="#679900"/><rect x="370" y="170" fill="#739900"/><rect x="380" y="170" fill="#7f9900"/><rect x="390" y="170" fill="#8b9900"/><rect x="-10" y="180" fill="#009934"/><rect x="0" y="180" fill="#009933"/><rect x="10" y="180" fill="#009932"/><rect x="20" y="180" fill="#009931"/><rect x="30" y="180" fill="#009930"/><rect x="40" y="180" fill="#00992f"/><rect x="50" y="180" fill="#00992e"/><rect x="60" y="180" fill="#00992c"/><rect x="70" y="180" fill="#00992b"/><rect x="80" y="180" fill="#00992a"/><rect x="90" y="180" fill="#009929"/><rect x="100" y="180" fill="#009927"/><rect x="110" y="180" fill="#009926"/><rect x="120" y="180" fill="#009924"/><rect x="130" y="180" fill="#009923"/><rect x="140" y="180" fill="#009922"/><rect x="150" y="180" fill="#009920"/><rect x="160" y="180" fill="#00991e"/><rect x="170" y="180" fill="#00991d"/><rect x="180" y="180" fill="#00991b"/><rect x="190" y="180" fill="#009919"/><rect x="200" y="180" fill="#009918"/><rect x="210" y="180" fill="#009916"/><rect x="220" y="180" fill="#009914"/><rect x="230" y="180" fill="#009912"/><rect x="240" y="180" fill="#009910"/><rect x="250" y="180" fill="#00990e"/><rect x="260" y="180" fill="#09990c"/><rect x="270" y="180" fill="#12990a"/><rect x="280" y="180" fill="#1b9908"/><rect x="290" y="180" fill="#249906"/><rect x="300" y="180" fill="#2e9903"/><rect x="310" y="180" fill="#389901"/><rect x="320" y="180" fill="#429900"/><rect x="330" y="180" fill="#4d9900"/><rect x="340" y="180" fill="#589900"/><rect x="350" y="180" fill="#649900"/><rect x="360" y="180" fill="#709900"/><rect x="370" y="180" fill="#7c9900"/><rect x="380" y="180" fill="#899900"/><rect x="390" y="180" fill="#969900"/><rect x="400" y="180" fill="#998e00"/><rect x="410" y="180" fill="#998300"/><rect x="-10" y="190" fill="#009938"/><rect x="0" y="190" fill="#009938"/><rect x="10" y="190" fill="#009937"/><rect x="20" y="190" fill="#009936"/><rect x="30" y="190" fill="#009935"/><rect x="40" y="190" fill="#009933"/><rect x="50" y="190" fill="#009932"/><rect x="60" y="190" fill="#009931"/><rect x="70" y="190" fill="#009930"/><rect x="80" y="190" fill="#00992e"/><rect x="90" y="190" fill="#00992d"/><rect x="100" y="190" fill="#00992c"/><rect x="110" y="190" fill="#00992a"/><rect x="120" y="190" fill="#009929"/><rect x="130" y="190" fill="#009928"/><rect x="140" y="190" fill="#009926"/><rect x="150" y="190" fill="#009925"/><rect x="160" y="190" fill="#009923"/><rect x="170" y="190" fill="#009921"/><rect x="180" y="190" fill="#009920"/><rect x="190" y="190" fill="#00991e"/><rect x="200" y="190" fill="#00991c"/><rect x="210" y="190" fill="#00991b"/><rect x="220" y="190" fill="#009919"/><rect x="230" y="190" fill="#009917"/><rect x="240" y="190" fill="#009915"/><rect x="250" y="190" fill="#049913"/><rect x="260" y="190" fill="#0d9911"/><rect x="270" y="190" fill="#16990f"/><rect x="280" y="190" fill="#1f990c"/><rect x="290" y="190" fill="#29990a"/><rect x="300" y="190" fill="#349908"/><rect x="310" y="190" fill="#3e9905"/><rect x="320" y="190" fill="#499903"/><rect x="330" y="190" fill="#549900"/><rect x="340" y="190" fill="#609900"/><rect x="350" y="190" fill="#6c9900"/><rect x="360" y="190" fill="#799900"/><rect x="370" y="190" fill="#869900"/><rect x="380" y="190" fill="#949900"/><rect x="390" y="190" fill="#999000"/><rect x="400" y="190" fill="#998400"/><rect x="410" y="190" fill="#997900"/><rect x="420" y="190" fill="#997000"/><rect x="0" y="200" fill="#00993d"/><rect x="10" y="200" fill="#00993b"/><rect x="20" y="200" fill="#00993a"/><rect x="30" y="200" fill="#009939"/><rect x="40" y="200" fill="#009938"/><rect x="50" y="200" fill="#009937"/><rect x="60" y="200" fill="#009936"/><rect x="70" y="200" fill="#009935"/><rect x="80" y="200" fill="#009933"/><rect x="90" y="200" fill="#009932"/><rect x="100" y="200" fill="#009931"/><rect x="110" y="200" fill="#00992f"/><rect x="120" y="200" fill="#00992e"/><rect x="130" y="200" fill="#00992d"/><rect x="140" y="200" fill="#00992b"/><rect x="150" y="200" fill="#00992a"/><rect x="160" y="200" fill="#009928"/><rect x="170" y="200" fill="#009927"/><rect x="180" y="200" fill="#009925"/><rect x="190" y="200" fill="#009923"/><rect x="200" y="200" fill="#009921"/><rect x="210" y="200" fill="#009920"/><rect x="220" y="200" fill="#00991e"/><rect x="230" y="200" fill="#00991c"/><rect x="240" y="200" fill="#00991a"/><rect x="250" y="200" fill="#079918"/><rect x="260" y="200" fill="#119916"/><rect x="270" y="200" fill="#1a9914"/><rect x="280" y="200" fill="#249912"/><rect x="290" y="200" fill="#2f990f"/><rect x="300" y="200" fill="#3a990d"/><rect x="310" y="200" fill="#45990a"/><rect x="320" y="200" fill="#509908"/><rect x="330" y="200" fill="#5c9905"/><rect x="340" y="200" fill="#699902"/><rect x="350" y="200" fill="#769900"/><rect x="360" y="200" fill="#839900"/><rect x="370" y="200" fill="#919900"/><rect x="380" y="200" fill="#999200"/><rect x="390" y="200" fill="#998500"/><rect x="400" y="200" fill="#997a00"/><rect x="410" y="200" fill="#997000"/><rect x="420" y="200" fill="#996800"/><rect x="430" y="200" fill="#996000"/><rect x="440" y="200" fill="#995900"/><rect x="0" y="210" fill="#009942"/><rect x="10" y="210" fill="#009940"/><rect x="20" y="210" fill="#00993f"/><rect x="30" y="210" fill="#00993e"/><rect x="40" y="210" fill="#00993d"/><rect x="50" y="210" fill="#00993c"/><rect x="60" y="210" fill="#00993b"/><rect x="70" y="210" fill="#00993a"/><rect x="80" y="210" fill="#009939"/><rect x="90" y="210" fill="#009937"/><rect x="100" y="210" fill="#009936"/><rect x="110" y="210" fill="#009935"/><rect x="120" y="210" fill="#009933"/><rect x="130" y="210" fill="#009932"/><rect x="140" y="210" fill="#009930"/><rect x="150" y="210" fill="#00992f"/><rect x="160" y="210" fill="#00992d"/><rect x="170" y="210" fill="#00992c"/><rect x="180" y="210" fill="#00992a"/><rect x="190" y="210" fill="#009929"/><rect x="200" y="210" fill="#009927"/><rect x="210" y="210" fill="#009925"/><rect x="220" y="210" fill="#009923"/><rect x="230" y="210" fill="#009921"/><rect x="240" y="210" fill="#029920"/><rect x="250" y="210" fill="#0b991d"/><rect x="260" y="210" fill="#15991b"/><rect x="270" y="210" fill="#1f9919"/><rect x="280" y="210" fill="#2a9917"/><rect x="290" y="210" fill="#359915"/><rect x="300" y="210" fill="#409912"/><rect x="310" y="210" fill="#4c9910"/><rect x="320" y="210" fill="#58990d"/><rect x="330" y="210" fill="#65990b"/><rect x="340" y="210" fill="#729908"/><rect x="350" y="210" fill="#809905"/><rect x="360" y="210" fill="#8f9902"/><rect x="370" y="210" fill="#999400"/><rect x="380" y="210" fill="#998600"/><rect x="390" y="210" fill="#997b00"/><rect x="400" y="210" fill="#997100"/><rect x="410" y="210" fill="#996800"/><rect x="420" y="210" fill="#996000"/><rect x="430" y="210" fill="#995900"/><rect x="440" y="210" fill="#995200"/><rect x="450" y="210" fill="#994c00"/><rect x="0" y="220" fill="#009947"/><rect x="10" y="220" fill="#009946"/><rect x="20" y="220" fill="#009945"/><rect x="30" y="220" fill="#009944"/><rect x="40" y="220" fill="#009943"/><rect x="50" y="220" fill="#009942"/><rect x="60" y="220" fill="#009940"/><rect x="70" y="220" fill="#00993f"/><rect x="80" y="220" fill="#00993e"/><rect x="90" y="220" fill="#00993d"/><rect x="100" y="220" fill="#00993c"/><rect x="110" y="220" fill="#00993a"/><rect x="120" y="220" fill="#009939"/><rect x="130" y="220" fill="#009938"/><rect x="140" y="220" fill="#009936"/><rect x="150" y="220" fill="#009935"/><rect x="160" y="220" fill="#009933"/><rect x="170" y="220" fill="#009932"/><rect x="180" y="220" fill="#009930"/><rect x="190" y="220" fill="#00992f"/><rect x="200" y="220" fill="#00992d"/><rect x="210" y="220" fill="#00992b"/><rect x="220" y="220" fill="#009929"/><rect x="230" y="220" fill="#009927"/><rect x="240" y="220" fill="#069926"/><rect x="250" y="220" fill="#109924"/><rect x="260" y="220" fill="#1a9921"/><rect x="270" y="220" fill="#25991f"/><rect x="280" y="220" fill="#30991d"/><rect x="290" y="220" fill="#3c991b"/><rect x="300" y="220" fill="#489918"/><rect x="310" y="220" fill="#549916"/><rect x="320" y="220" fill="#619913"/><rect x="330" y="220" fill="#6f9911"/><rect x="340" y="220" fill="#7d990e"/><rect x="350" y="220" fill="#8c990b"/><rect x="360" y="220" fill="#999608"/><rect x="370" y="220" fill="#998804"/><rect x="380" y="220" fill="#997c01"/><rect x="390" y="220" fill="#997100"/><rect x="400" y="220" fill="#996800"/><rect x="410" y="220" fill="#995f00"/><rect x="420" y="220" fill="#995800"/><rect x="430" y="220" fill="#995100"/><rect x="440" y="220" fill="#994b00"/><rect x="450" y="220" fill="#994600"/><rect x="460" y="220" fill="#994100"/><rect x="0" y="230" fill="#00994c"/><rect x="10" y="230" fill="#00994b"/><rect x="20" y="230" fill="#00994a"/><rect x="30" y="230" fill="#009949"/><rect x="40" y="230" fill="#009948"/><rect x="50" y="230" fill="#009947"/><rect x="60" y="230" fill="#009946"/><rect x="70" y="230" fill="#009945"/><rect x="80" y="230" fill="#009944"/><rect x="90" y="230" fill="#009943"/><rect x="100" y="230" fill="#009942"/><rect x="110" y="230" fill="#009940"/><rect x="120" y="230" fill="#00993f"/><rect x="130" y="230" fill="#00993e"/><rect x="140" y="230" fill="#00993c"/><rect x="150" y="230" fill="#00993b"/><rect x="160" y="230" fill="#00993a"/><rect x="170" y="230" fill="#009938"/><rect x="180" y="230" fill="#009937"/><rect x="190" y="230" fill="#009935"/><rect x="200" y="230" fill="#009933"/><rect x="210" y="230" fill="#009932"/><rect x="220" y="230" fill="#009930"/><rect x="230" y="230" fill="#00992e"/><rect x="240" y="230" fill="#0a992c"/><rect x="250" y="230" fill="#14992a"/><rect x="260" y="230" fill="#1f9928"/><rect x="270" y="230" fill="#2b9926"/><rect x="280" y="230" fill="#379924"/><rect x="290" y="230" fill="#439921"/><rect x="300" y="230" fill="#50991f"/><rect x="310" y="230" fill="#5d991d"/><rect x="320" y="230" fill="#6b991a"/><rect x="330" y="230" fill="#7a9917"/><rect x="340" y="230" fill="#899914"/><rect x="350" y="230" fill="#999811"/><rect x="360" y="230" fill="#99890d"/><rect x="370" y="230" fill="#997c09"/><rect x="380" y="230" fill="#997106"/><rect x="390" y="230" fill="#996803"/><rect x="400" y="230" fill="#995f00"/><rect x="410" y="230" fill="#995800"/><rect x="420" y="230" fill="#995100"/><rect x="430" y="230" fill="#994b00"/><rect x="440" y="230" fill="#994500"/><rect x="450" y="230" fill="#994000"/><rect x="460" y="230" fill="#993b00"/><rect x="470" y="230" fill="#993700"/><rect x="480" y="230" fill="#993300"/><rect x="0" y="240" fill="#009952"/><rect x="10" y="240" fill="#009952"/><rect x="20" y="240" fill="#009951"/><rect x="30" y="240" fill="#009950"/><rect x="40" y="240" fill="#00994f"/><rect x="50" y="240" fill="#00994e"/><rect x="60" y="240" fill="#00994d"/><rect x="70" y="240" fill="#00994c"/><rect x="80" y="240" fill="#00994a"/><rect x="90" y="240" fill="#009949"/><rect x="100" y="240" fill="#009948"/><rect x="110" y="240" fill="#009947"/><rect x="120" y="240" fill="#009946"/><rect x="130" y="240" fill="#009944"/><rect x="140" y="240" fill="#009943"/><rect x="150" y="240" fill="#009942"/><rect x="160" y="240" fill="#009940"/><rect x="170" y="240" fill="#00993f"/><rect x="180" y="240" fill="#00993d"/><rect x="190" y="240" fill="#00993c"/><rect x="200" y="240" fill="#00993a"/><rect x="210" y="240" fill="#009939"/><rect x="220" y="240" fill="#009937"/><rect x="230" y="240" fill="#049935"/><rect x="240" y="240" fill="#0e9933"/><rect x="250" y="240" fill="#1a9931"/><rect x="260" y="240" fill="#25992f"/><rect x="270" y="240" fill="#31992d"/><rect x="280" y="240" fill="#3e992b"/><rect x="290" y="240" fill="#4b9929"/><rect x="300" y="240" fill="#599926"/><rect x="310" y="240" fill="#679924"/><rect x="320" y="240" fill="#769921"/><rect x="330" y="240" fill="#86991f"/><rect x="340" y="240" fill="#96991c"/><rect x="350" y="240" fill="#998b17"/><rect x="360" y="240" fill="#997d12"/><rect x="370" y="240" fill="#99720e"/><rect x="380" y="240" fill="#99680a"/><rect x="390" y="240" fill="#995f07"/><rect x="400" y="240" fill="#995704"/><rect x="410" y="240" fill="#995002"/><rect x="420" y="240" fill="#994a00"/><rect x="430" y="240" fill="#994400"/><rect x="440" y="240" fill="#993f00"/><rect x="450" y="240" fill="#993a00"/><rect x="460" y="240" fill="#993600"/><rect x="470" y="240" fill="#993200"/><rect x="480" y="240" fill="#992e00"/><rect x="490" y="240" fill="#992b00"/><rect x="0" y="250" fill="#009959"/><rect x="10" y="250" fill="#009958"/><rect x="20" y="250" fill="#009957"/><rect x="30" y="250" fill="#009956"/><rect x="40" y="250" fill="#009955"/><rect x="50" y="250" fill="#009954"/><rect x="60" y="250" fill="#009953"/><rect x="70" y="250" fill="#009952"/><rect x="80" y="250" fill="#009951"/><rect x="90" y="250" fill="#009950"/><rect x="100" y="250" fill="#00994f"/><rect x="110" y="250" fill="#00994e"/><rect x="120" y="250" fill="#00994d"/><rect x="130" y="250" fill="#00994c"/><rect x="140" y="250" fill="#00994a"/><rect x="150" y="250" fill="#009949"/><rect x="160" y="250" fill="#009948"/><rect x="170" y="250" fill="#009946"/><rect x="180" y="250" fill="#009945"/><rect x="190" y="250" fill="#009943"/><rect x="200" y="250" fill="#009942"/><rect x="210" y="250" fill="#009940"/><rect x="220" y="250" fill="#00993f"/><rect x="230" y="250" fill="#08993d"/><rect x="240" y="250" fill="#14993b"/><rect x="250" y="250" fill="#1f9939"/><rect x="260" y="250" fill="#2c9937"/><rect x="270" y="250" fill="#399935"/><rect x="280" y="250" fill="#469933"/><rect x="290" y="250" fill="#549931"/><rect x="300" y="250" fill="#63992f"/><rect x="310" y="250" fill="#72992c"/><rect x="320" y="250" fill="#82992a"/><rect x="330" y="250" fill="#939927"/><rect x="340" y="250" fill="#998d21"/><rect x="350" y="250" fill="#997f1c"/><rect x="360" y="250" fill="#997217"/><rect x="370" y="250" fill="#996812"/><rect x="380" y="250" fill="#995f0e"/><rect x="390" y="250" fill="#99560b"/><rect x="400" y="250" fill="#994f08"/><rect x="410" y="250" fill="#994906"/><rect x="420" y="250" fill="#994303"/><rect x="430" y="250" fill="#993e01"/><rect x="440" y="250" fill="#993900"/><rect x="450" y="250" fill="#993500"/><rect x="460" y="250" fill="#993100"/><rect x="470" y="250" fill="#992d00"/><rect x="480" y="250" fill="#992a00"/><rect x="490" y="250" fill="#992700"/><rect x="500" y="250" fill="#992400"/><rect x="510" y="250" fill="#992100"/><rect x="10" y="260" fill="#00995f"/><rect x="20" y="260" fill="#00995e"/><rect x="30" y="260" fill="#00995d"/><rect x="40" y="260" fill="#00995c"/><rect x="50" y="260" fill="#00995c"/><rect x="60" y="260" fill="#00995b"/><rect x="70" y="260" fill="#00995a"/><rect x="80" y="260" fill="#009959"/><rect x="90" y="260" fill="#009958"/><rect x="100" y="260" fill="#009957"/><rect x="110" y="260" fill="#009956"/><rect x="120" y="260" fill="#009955"/><rect x="130" y="260" fill="#009953"/><rect x="140" y="260" fill="#009952"/><rect x="150" y="260" fill="#009951"/><rect x="160" y="260" fill="#009950"/><rect x="170" y="260" fill="#00994e"/><rect x="180" y="260" fill="#00994d"/><rect x="190" y="260" fill="#00994c"/><rect x="200" y="260" fill="#00994a"/><rect x="210" y="260" fill="#009949"/><rect x="220" y="260" fill="#019947"/><rect x="230" y="260" fill="#0d9946"/><rect x="240" y="260" fill="#199944"/><rect x="250" y="260" fill="#269942"/><rect x="260" y="260" fill="#339940"/><rect x="270" y="260" fill="#41993e"/><rect x="280" y="260" fill="#4f993c"/><rect x="290" y="260" fill="#5e993a"/><rect x="300" y="260" fill="#6e9938"/><rect x="310" y="260" fill="#7f9936"/><rect x="320" y="260" fill="#909933"/><rect x="330" y="260" fill="#998f2d"/><rect x="340" y="260" fill="#998026"/><rect x="350" y="260" fill="#997320"/><rect x="360" y="260" fill="#99681b"/><rect x="370" y="260" fill="#995e17"/><rect x="380" y="260" fill="#995613"/><rect x="390" y="260" fill="#994e0f"/><rect x="400" y="260" fill="#99480c"/><rect x="410" y="260" fill="#994209"/><rect x="420" y="260" fill="#993d07"/><rect x="430" y="260" fill="#993804"/><rect x="440" y="260" fill="#993302"/><rect x="450" y="260" fill="#992f00"/><rect x="460" y="260" fill="#992c00"/><rect x="470" y="260" fill="#992800"/><rect x="480" y="260" fill="#992500"/><rect x="490" y="260" fill="#992200"/><rect x="500" y="260" fill="#991f00"/><rect x="510" y="260" fill="#991d00"/><rect x="520" y="260" fill="#991b00"/><rect x="10" y="270" fill="#009966"/><rect x="20" y="270" fill="#009966"/><rect x="30" y="270" fill="#009965"/><rect x="40" y="270" fill="#009964"/><rect x="50" y="270" fill="#009963"/><rect x="60" y="270" fill="#009962"/><rect x="70" y="270" fill="#009962"/><rect x="80" y="270" fill="#009961"/><rect x="90" y="270" fill="#009960"/><rect x="100" y="270" fill="#00995f"/><rect x="110" y="270" fill="#00995e"/><rect x="120" y="270" fill="#00995d"/><rect x="130" y="270" fill="#00995c"/><rect x="140" y="270" fill="#00995b"/><rect x="150" y="270" fill="#00995a"/><rect x="160" y="270" fill="#009959"/><rect x="170" y="270" fill="#009957"/><rect x="180" y="270" fill="#009956"/><rect x="190" y="270" fill="#009955"/><rect x="200" y="270" fill="#009953"/><rect x="210" y="270" fill="#009952"/><rect x="220" y="270" fill="#069951"/><rect x="230" y="270" fill="#13994f"/><rect x="240" y="270" fill="#20994d"/><rect x="250" y="270" fill="#2d994c"/><rect x="260" y="270" fill="#3b994a"/><rect x="270" y="270" fill="#4a9948"/><rect x="280" y="270" fill="#5a9946"/><rect x="290" y="270" fill="#6a9944"/><rect x="300" y="270" fill="#7b9942"/><rect x="310" y="270" fill="#8d9940"/><rect x="320" y="270" fill="#99913b"/><rect x="330" y="270" fill="#998132"/><rect x="340" y="270" fill="#99742b"/><rect x="350" y="270" fill="#996825"/><rect x="360" y="270" fill="#995e1f"/><rect x="370" y="270" fill="#99551b"/><rect x="380" y="270" fill="#994e16"/><rect x="390" y="270" fill="#994713"/><rect x="400" y="270" fill="#994110"/><rect x="410" y="270" fill="#993b0d"/><rect x="420" y="270" fill="#99360a"/><rect x="430" y="270" fill="#993208"/><rect x="440" y="270" fill="#992e05"/><rect x="450" y="270" fill="#992a03"/><rect x="460" y="270" fill="#992702"/><rect x="470" y="270" fill="#992300"/><rect x="480" y="270" fill="#992100"/><rect x="490" y="270" fill="#991e00"/><rect x="500" y="270" fill="#991b00"/><rect x="510" y="270" fill="#991900"/><rect x="520" y="270" fill="#991700"/><rect x="530" y="270" fill="#991500"/><rect x="10" y="280" fill="#00996e"/><rect x="20" y="280" fill="#00996e"/><rect x="30" y="280" fill="#00996d"/><rect x="40" y="280" fill="#00996c"/><rect x="50" y="280" fill="#00996c"/><rect x="60" y="280" fill="#00996b"/><rect x="70" y="280" fill="#00996a"/><rect x="80" y="280" fill="#009969"/><rect x="90" y="280" fill="#009969"/><rect x="100" y="280" fill="#009968"/><rect x="110" y="280" fill="#009967"/><rect x="120" y="280" fill="#009966"/><rect x="130" y="280" fill="#009965"/><rect x="140" y="280" fill="#009964"/><rect x="150" y="280" fill="#009963"/><rect x="160" y="280" fill="#009962"/><rect x="170" y="280" fill="#009961"/><rect x="180" y="280" fill="#009960"/><rect x="190" y="280" fill="#00995f"/><rect x="200" y="280" fill="#00995e"/><rect x="210" y="280" fill="#00995c"/><rect x="220" y="280" fill="#0b995b"/><rect x="230" y="280" fill="#19995a"/><rect x="240" y="280" fill="#279958"/><rect x="250" y="280" fill="#359957"/><rect x="260" y="280" fill="#449955"/><rect x="270" y="280" fill="#549954"/><rect x="280" y="280" fill="#659952"/><rect x="290" y="280" fill="#779950"/><rect x="300" y="280" fill="#89994e"/><rect x="310" y="280" fill="#99944a"/><rect x="320" y="280" fill="#99833f"/><rect x="330" y="280" fill="#997436"/><rect x="340" y="280" fill="#99682f"/><rect x="350" y="280" fill="#995e29"/><rect x="360" y="280" fill="#995423"/><rect x="370" y="280" fill="#994d1e"/><rect x="380" y="280" fill="#99461a"/><rect x="390" y="280" fill="#993f16"/><rect x="400" y="280" fill="#993a13"/><rect x="410" y="280" fill="#993510"/><rect x="420" y="280" fill="#99300d"/><rect x="430" y="280" fill="#992c0b"/><rect x="440" y="280" fill="#992808"/><rect x="450" y="280" fill="#992506"/><rect x="460" y="280" fill="#992204"/><rect x="470" y="280" fill="#991f03"/><rect x="480" y="280" fill="#991c01"/><rect x="490" y="280" fill="#991a00"/><rect x="500" y="280" fill="#991700"/><rect x="510" y="280" fill="#991500"/><rect x="520" y="280" fill="#991300"/><rect x="530" y="280" fill="#991100"/><rect x="540" y="280" fill="#990f00"/><rect x="550" y="280" fill="#990e00"/><rect x="10" y="290" fill="#009977"/><rect x="20" y="290" fill="#009976"/><rect x="30" y="290" fill="#009976"/><rect x="40" y="290" fill="#009975"/><rect x="50" y="290" fill="#009975"/><rect x="60" y="290" fill="#009974"/><rect x="70" y="290" fill="#009974"/><rect x="80" y="290" fill="#009973"/><rect x="90" y="290" fill="#009972"/><rect x="100" y="290" fill="#009972"/><rect x="110" y="290" fill="#009971"/><rect x="120" y="290" fill="#009970"/><rect x="130" y="290" fill="#00996f"/><rect x="140" y="290" fill="#00996f"/><rect x="150" y="290" fill="#00996e"/><rect x="160" y="290" fill="#00996d"/><rect x="170" y="290" fill="#00996c"/><rect x="180" y="290" fill="#00996b"/><rect x="190" y="290" fill="#00996a"/><rect x="200" y="290" fill="#009969"/><rect x="210" y="290" fill="#049968"/><rect x="220" y="290" fill="#119967"/><rect x="230" y="290" fill="#209966"/><rect x="240" y="290" fill="#2e9965"/><rect x="250" y="290" fill="#3e9963"/><rect x="260" y="290" fill="#4f9962"/><rect x="270" y="290" fill="#609960"/><rect x="280" y="290" fill="#72995f"/><rect x="290" y="290" fill="#86995d"/><rect x="300" y="290" fill="#99975b"/><rect x="310" y="290" fill="#99844e"/><rect x="320" y="290" fill="#997543"/><rect x="330" y="290" fill="#99683b"/><rect x="340" y="290" fill="#995d33"/><rect x="350" y="290" fill="#99542d"/><rect x="360" y="290" fill="#994c27"/><rect x="370" y="290" fill="#994422"/><rect x="380" y="290" fill="#993e1e"/><rect x="390" y="290" fill="#99381a"/><rect x="400" y="290" fill="#993316"/><rect x="410" y="290" fill="#992f13"/><rect x="420" y="290" fill="#992b10"/><rect x="430" y="290" fill="#99270e"/><rect x="440" y="290" fill="#99230b"/><rect x="450" y="290" fill="#992009"/><rect x="460" y="290" fill="#991d07"/><rect x="470" y="290" fill="#991a05"/><rect x="480" y="290" fill="#991804"/><rect x="490" y="290" fill="#991602"/><rect x="500" y="290" fill="#991401"/><rect x="510" y="290" fill="#991100"/><rect x="520" y="290" fill="#991000"/><rect x="530" y="290" fill="#990e00"/><rect x="540" y="290" fill="#990c00"/><rect x="550" y="290" fill="#990b00"/><rect x="560" y="290" fill="#990900"/><rect x="20" y="300" fill="#009980"/><rect x="30" y="300" fill="#009980"/><rect x="40" y="300" fill="#00997f"/><rect x="50" y="300" fill="#00997f"/><rect x="60" y="300" fill="#00997e"/><rect x="70" y="300" fill="#00997e"/><rect x="80" y="300" fill="#00997d"/><rect x="90" y="300" fill="#00997d"/><rect x="100" y="300" fill="#00997c"/><rect x="110" y="300" fill="#00997c"/><rect x="120" y="300" fill="#00997b"/><rect x="130" y="300" fill="#00997b"/><rect x="140" y="300" fill="#00997a"/><rect x="150" y="300" fill="#009979"/><rect x="160" y="300" fill="#009979"/><rect x="170" y="300" fill="#009978"/><rect x="180" y="300" fill="#009977"/><rect x="190" y="300" fill="#009977"/><rect x="200" y="300" fill="#009976"/><rect x="210" y="300" fill="#0a9975"/><rect x="220" y="300" fill="#189974"/><rect x="230" y="300" fill="#279973"/><rect x="240" y="300" fill="#379972"/><rect x="250" y="300" fill="#489971"/><rect x="260" y="300" fill="#5a9970"/><rect x="270" y="300" fill="#6d996f"/><rect x="280" y="300" fill="#81996e"/><rect x="290" y="300" fill="#97996d"/><rect x="300" y="300" fill="#99865f"/><rect x="310" y="300" fill="#997652"/><rect x="320" y="300" fill="#996847"/><rect x="330" y="300" fill="#995d3e"/><rect x="340" y="300" fill="#995337"/><rect x="350" y="300" fill="#994a30"/><rect x="360" y="300" fill="#99432b"/><rect x="370" y="300" fill="#993c26"/><rect x="380" y="300" fill="#993721"/><rect x="390" y="300" fill="#99321d"/><rect x="400" y="300" fill="#992d1a"/><rect x="410" y="300" fill="#992916"/><rect x="420" y="300" fill="#992513"/><rect x="430" y="300" fill="#992111"/><rect x="440" y="300" fill="#991e0e"/><rect x="450" y="300" fill="#991b0c"/><rect x="460" y="300" fill="#99190a"/><rect x="470" y="300" fill="#991608"/><rect x="480" y="300" fill="#991406"/><rect x="490" y="300" fill="#991205"/><rect x="500" y="300" fill="#991003"/><rect x="510" y="300" fill="#990e02"/><rect x="520" y="300" fill="#990c00"/><rect x="530" y="300" fill="#990a00"/><rect x="540" y="300" fill="#990900"/><rect x="550" y="300" fill="#990700"/><rect x="560" y="300" fill="#990600"/><rect x="570" y="300" fill="#990500"/><rect x="580" y="300" fill="#990400"/><rect x="20" y="310" fill="#00998a"/><rect x="30" y="310" fill="#00998a"/><rect x="40" y="310" fill="#00998a"/><rect x="50" y="310" fill="#00998a"/><rect x="60" y="310" fill="#009989"/><rect x="70" y="310" fill="#009989"/><rect x="80" y="310" fill="#009989"/><rect x="90" y="310" fill="#009988"/><rect x="100" y="310" fill="#009988"/><rect x="110" y="310" fill="#009988"/><rect x="120" y="310" fill="#009988"/><rect x="130" y="310" fill="#009987"/><rect x="140" y="310" fill="#009987"/><rect x="150" y="310" fill="#009986"/><rect x="160" y="310" fill="#009986"/><rect x="170" y="310" fill="#009986"/><rect x="180" y="310" fill="#009985"/><rect x="190" y="310" fill="#009985"/><rect x="200" y="310" fill="#019984"/><rect x="210" y="310" fill="#109984"/><rect x="220" y="310" fill="#209983"/><rect x="230" y="310" fill="#309983"/><rect x="240" y="310" fill="#429982"/><rect x="250" y="310" fill="#549982"/><rect x="260" y="310" fill="#689981"/><rect x="270" y="310" fill="#7d9980"/><rect x="280" y="310" fill="#939980"/><rect x="290" y="310" fill="#998871"/><rect x="300" y="310" fill="#997762"/><rect x="310" y="310" fill="#996855"/><rect x="320" y="310" fill="#995c4b"/><rect x="330" y="310" fill="#995242"/><rect x="340" y="310" fill="#99493a"/><rect x="350" y="310" fill="#994234"/><rect x="360" y="310" fill="#993b2e"/><rect x="370" y="310" fill="#993529"/><rect x="380" y="310" fill="#993024"/><rect x="390" y="310" fill="#992b20"/><rect x="400" y="310" fill="#99271d"/><rect x="410" y="310" fill="#992319"/><rect x="420" y="310" fill="#992016"/><rect x="430" y="310" fill="#991c14"/><rect x="440" y="310" fill="#991911"/><rect x="450" y="310" fill="#99170f"/><rect x="460" y="310" fill="#99140d"/><rect x="470" y="310" fill="#99120b"/><rect x="480" y="310" fill="#991009"/><rect x="490" y="310" fill="#990e07"/><rect x="500" y="310" fill="#990c05"/><rect x="510" y="310" fill="#990a04"/><rect x="520" y="310" fill="#990902"/><rect x="530" y="310" fill="#990701"/><rect x="540" y="310" fill="#990600"/><rect x="550" y="310" fill="#990400"/><rect x="560" y="310" fill="#990300"/><rect x="570" y="310" fill="#990200"/><rect x="580" y="310" fill="#990100"/><rect x="590" y="310" fill="#990000"/><rect x="20" y="320" fill="#009996"/><rect x="30" y="320" fill="#009996"/><rect x="40" y="320" fill="#009995"/><rect x="50" y="320" fill="#009995"/><rect x="60" y="320" fill="#009995"/><rect x="70" y="320" fill="#009995"/><rect x="80" y="320" fill="#009995"/><rect x="90" y="320" fill="#009995"/><rect x="100" y="320" fill="#009995"/><rect x="110" y="320" fill="#009995"/><rect x="120" y="320" fill="#009995"/><rect x="130" y="320" fill="#009995"/><rect x="140" y="320" fill="#009995"/><rect x="150" y="320" fill="#009995"/><rect x="160" y="320" fill="#009995"/><rect x="170" y="320" fill="#009995"/><rect x="180" y="320" fill="#009995"/><rect x="190" y="320" fill="#009995"/><rect x="200" y="320" fill="#079995"/><rect x="210" y="320" fill="#179995"/><rect x="220" y="320" fill="#289995"/><rect x="230" y="320" fill="#3a9995"/><rect x="240" y="320" fill="#4e9995"/><rect x="250" y="320" fill="#629994"/><rect x="260" y="320" fill="#789994"/><rect x="270" y="320" fill="#8f9994"/><rect x="280" y="320" fill="#998b87"/><rect x="290" y="320" fill="#997874"/><rect x="300" y="320" fill="#996865"/><rect x="310" y="320" fill="#995c59"/><rect x="320" y="320" fill="#99514e"/><rect x="330" y="320" fill="#994845"/><rect x="340" y="320" fill="#99403e"/><rect x="350" y="320" fill="#993937"/><rect x="360" y="320" fill="#993331"/><rect x="370" y="320" fill="#992e2c"/><rect x="380" y="320" fill="#992927"/><rect x="390" y="320" fill="#992523"/><rect x="400" y="320" fill="#992120"/><rect x="410" y="320" fill="#991e1c"/><rect x="420" y="320" fill="#991a19"/><rect x="430" y="320" fill="#991716"/><rect x="440" y="320" fill="#991514"/><rect x="450" y="320" fill="#991211"/><rect x="460" y="320" fill="#99100f"/><rect x="470" y="320" fill="#990e0d"/><rect x="480" y="320" fill="#990c0b"/><rect x="490" y="320" fill="#990a09"/><rect x="500" y="320" fill="#990808"/><rect x="510" y="320" fill="#990706"/><rect x="520" y="320" fill="#990505"/><rect x="530" y="320" fill="#990403"/><rect x="540" y="320" fill="#990302"/><rect x="550" y="320" fill="#990101"/><rect x="560" y="320" fill="#990000"/><rect x="570" y="320" fill="#990000"/><rect x="580" y="320" fill="#990000"/><rect x="590" y="320" fill="#990000"/><rect x="600" y="320" fill="#990000"/><rect x="20" y="330" fill="#009099"/><rect x="30" y="330" fill="#008f99"/><rect x="40" y="330" fill="#008f99"/><rect x="50" y="330" fill="#008f99"/><rect x="60" y="330" fill="#008f99"/><rect x="70" y="330" fill="#008f99"/><rect x="80" y="330" fill="#008e99"/><rect x="90" y="330" fill="#008e99"/><rect x="100" y="330" fill="#008e99"/><rect x="110" y="330" fill="#008e99"/><rect x="120" y="330" fill="#008d99"/><rect x="130" y="330" fill="#008d99"/><rect x="140" y="330" fill="#008d99"/><rect x="150" y="330" fill="#008c99"/><rect x="160" y="330" fill="#008c99"/><rect x="170" y="330" fill="#008c99"/><rect x="180" y="330" fill="#008b99"/><rect x="190" y="330" fill="#008b99"/><rect x="200" y="330" fill="#0d8b99"/><rect x="210" y="330" fill="#1d8a99"/><rect x="220" y="330" fill="#2d8a99"/><rect x="230" y="330" fill="#3f8999"/><rect x="240" y="330" fill="#528999"/><rect x="250" y="330" fill="#668899"/><rect x="260" y="330" fill="#7b8899"/><rect x="270" y="330" fill="#928799"/><rect x="280" y="330" fill="#997989"/><rect x="290" y="330" fill="#996877"/><rect x="300" y="330" fill="#995b68"/><rect x="310" y="330" fill="#99505c"/><rect x="320" y="330" fill="#994652"/><rect x="330" y="330" fill="#993e49"/><rect x="340" y="330" fill="#993741"/><rect x="350" y="330" fill="#99313a"/><rect x="360" y="330" fill="#992c34"/><rect x="370" y="330" fill="#99272f"/><rect x="380" y="330" fill="#99232a"/><rect x="390" y="330" fill="#991f26"/><rect x="400" y="330" fill="#991b22"/><rect x="410" y="330" fill="#99181f"/><rect x="420" y="330" fill="#99151c"/><rect x="430" y="330" fill="#991319"/><rect x="440" y="330" fill="#991016"/><rect x="450" y="330" fill="#990e14"/><rect x="460" y="330" fill="#990c11"/><rect x="470" y="330" fill="#990a0f"/><rect x="480" y="330" fill="#99080d"/><rect x="490" y="330" fill="#99070c"/><rect x="500" y="330" fill="#99050a"/><rect x="510" y="330" fill="#990308"/><rect x="520" y="330" fill="#990207"/><rect x="530" y="330" fill="#990105"/><rect x="540" y="330" fill="#990004"/><rect x="550" y="330" fill="#990003"/><rect x="560" y="330" fill="#990001"/><rect x="570" y="330" fill="#990000"/><rect x="580" y="330" fill="#990000"/><rect x="590" y="330" fill="#990000"/><rect x="600" y="330" fill="#990000"/><rect x="610" y="330" fill="#990000"/><rect x="620" y="330" fill="#990000"/><rect x="30" y="340" fill="#008499"/><rect x="40" y="340" fill="#008499"/><rect x="50" y="340" fill="#008399"/><rect x="60" y="340" fill="#008399"/><rect x="70" y="340" fill="#008299"/><rect x="80" y="340" fill="#008299"/><rect x="90" y="340" fill="#008199"/><rect x="100" y="340" fill="#008199"/><rect x="110" y="340" fill="#008099"/><rect x="120" y="340" fill="#008099"/><rect x="130" y="340" fill="#007f99"/><rect x="140" y="340" fill="#007f99"/><rect x="150" y="340" fill="#007e99"/><rect x="160" y="340" fill="#007e99"/><rect x="170" y="340" fill="#007d99"/><rect x="180" y="340" fill="#007c99"/><rect x="190" y="340" fill="#037b99"/><rect x="200" y="340" fill="#127b99"/><rect x="210" y="340" fill="#217a99"/><rect x="220" y="340" fill="#317999"/><rect x="230" y="340" fill="#427899"/><rect x="240" y="340" fill="#547799"/><rect x="250" y="340" fill="#677699"/><rect x="260" y="340" fill="#7b7599"/><rect x="270" y="340" fill="#917499"/><rect x="280" y="340" fill="#99698b"/><rect x="290" y="340" fill="#995a79"/><rect x="300" y="340" fill="#994f6b"/><rect x="310" y="340" fill="#99455f"/><rect x="320" y="340" fill="#993c55"/><rect x="330" y="340" fill="#99354c"/><rect x="340" y="340" fill="#992f44"/><rect x="350" y="340" fill="#992a3d"/><rect x="360" y="340" fill="#992537"/><rect x="370" y="340" fill="#992032"/><rect x="380" y="340" fill="#991d2d"/><rect x="390" y="340" fill="#991929"/><rect x="400" y="340" fill="#991625"/><rect x="410" y="340" fill="#991322"/><rect x="420" y="340" fill="#99101e"/><rect x="430" y="340" fill="#990e1b"/><rect x="440" y="340" fill="#990c19"/><rect x="450" y="340" fill="#990a16"/><rect x="460" y="340" fill="#990814"/><rect x="470" y="340" fill="#990612"/><rect x="480" y="340" fill="#990510"/><rect x="490" y="340" fill="#99030e"/><rect x="500" y="340" fill="#99020c"/><rect x="510" y="340" fill="#99000a"/><rect x="520" y="340" fill="#990009"/><rect x="530" y="340" fill="#990007"/><rect x="540" y="340" fill="#990006"/><rect x="550" y="340" fill="#990005"/><rect x="560" y="340" fill="#990003"/><rect x="570" y="340" fill="#990002"/><rect x="580" y="340" fill="#990001"/><rect x="590" y="340" fill="#990000"/><rect x="600" y="340" fill="#990000"/><rect x="610" y="340" fill="#990000"/><rect x="620" y="340" fill="#990000"/><rect x="630" y="340" fill="#990000"/><rect x="30" y="350" fill="#007999"/><rect x="40" y="350" fill="#007999"/><rect x="50" y="350" fill="#007899"/><rect x="60" y="350" fill="#007899"/><rect x="70" y="350" fill="#007799"/><rect x="80" y="350" fill="#007699"/><rect x="90" y="350" fill="#007699"/><rect x="100" y="350" fill="#007599"/><rect x="110" y="350" fill="#007499"/><rect x="120" y="350" fill="#007399"/><rect x="130" y="350" fill="#007399"/><rect x="140" y="350" fill="#007299"/><rect x="150" y="350" fill="#007199"/><rect x="160" y="350" fill="#007099"/><rect x="170" y="350" fill="#006f99"/><rect x="180" y="350" fill="#006e99"/><rect x="190" y="350" fill="#086d99"/><rect x="200" y="350" fill="#166c99"/><rect x="210" y="350" fill="#256b99"/><rect x="220" y="350" fill="#356a99"/><rect x="230" y="350" fill="#456899"/><rect x="240" y="350" fill="#566799"/><rect x="250" y="350" fill="#686699"/><rect x="260" y="350" fill="#7b6499"/><rect x="270" y="350" fill="#906399"/><rect x="280" y="350" fill="#995a8d"/><rect x="290" y="350" fill="#994d7c"/><rect x="300" y="350" fill="#99436e"/><rect x="310" y="350" fill="#993a62"/><rect x="320" y="350" fill="#993357"/><rect x="330" y="350" fill="#992d4f"/><rect x="340" y="350" fill="#992747"/><rect x="350" y="350" fill="#992240"/><rect x="360" y="350" fill="#991e3a"/><rect x="370" y="350" fill="#991a35"/><rect x="380" y="350" fill="#991730"/><rect x="390" y="350" fill="#99142c"/><rect x="400" y="350" fill="#991128"/><rect x="410" y="350" fill="#990e24"/><rect x="420" y="350" fill="#990c21"/><rect x="430" y="350" fill="#990a1e"/><rect x="440" y="350" fill="#99081b"/><rect x="450" y="350" fill="#990619"/><rect x="460" y="350" fill="#990416"/><rect x="470" y="350" fill="#990214"/><rect x="480" y="350" fill="#990112"/><rect x="490" y="350" fill="#990010"/><rect x="500" y="350" fill="#99000e"/><rect x="510" y="350" fill="#99000c"/><rect x="520" y="350" fill="#99000b"/><rect x="530" y="350" fill="#990009"/><rect x="540" y="350" fill="#990008"/><rect x="550" y="350" fill="#990007"/><rect x="560" y="350" fill="#990005"/><rect x="570" y="350" fill="#990004"/><rect x="580" y="350" fill="#990003"/><rect x="590" y="350" fill="#990002"/><rect x="600" y="350" fill="#990001"/><rect x="610" y="350" fill="#990000"/><rect x="620" y="350" fill="#990000"/><rect x="630" y="350" fill="#990000"/><rect x="640" y="350" fill="#990000"/><rect x="650" y="350" fill="#990000"/><rect x="30" y="360" fill="#006f99"/><rect x="40" y="360" fill="#006f99"/><rect x="50" y="360" fill="#006e99"/><rect x="60" y="360" fill="#006d99"/><rect x="70" y="360" fill="#006c99"/><rect x="80" y="360" fill="#006b99"/><rect x="90" y="360" fill="#006b99"/><rect x="100" y="360" fill="#006a99"/><rect x="110" y="360" fill="#006999"/><rect x="120" y="360" fill="#006899"/><rect x="130" y="360" fill="#006799"/><rect x="140" y="360" fill="#006699"/><rect x="150" y="360" fill="#006599"/><rect x="160" y="360" fill="#006499"/><rect x="170" y="360" fill="#006299"/><rect x="180" y="360" fill="#006199"/><rect x="190" y="360" fill="#0d6099"/><rect x="200" y="360" fill="#1b5f99"/><rect x="210" y="360" fill="#295d99"/><rect x="220" y="360" fill="#385c99"/><rect x="230" y="360" fill="#475a99"/><rect x="240" y="360" fill="#585899"/><rect x="250" y="360" fill="#695799"/><rect x="260" y="360" fill="#7b5599"/><rect x="270" y="360" fill="#8f5399"/><rect x="280" y="360" fill="#994c8f"/><rect x="290" y="360" fill="#99417e"/><rect x="300" y="360" fill="#993870"/><rect x="310" y="360" fill="#993164"/><rect x="320" y="360" fill="#992a5a"/><rect x="330" y="360" fill="#992551"/><rect x="340" y="360" fill="#99204a"/><rect x="350" y="360" fill="#991b43"/><rect x="360" y="360" fill="#99183d"/><rect x="370" y="360" fill="#991438"/><rect x="380" y="360" fill="#991133"/><rect x="390" y="360" fill="#990e2e"/><rect x="400" y="360" fill="#990c2a"/><rect x="410" y="360" fill="#990927"/><rect x="420" y="360" fill="#990723"/><rect x="430" y="360" fill="#990520"/><rect x="440" y="360" fill="#99031d"/><rect x="450" y="360" fill="#99021b"/><rect x="460" y="360" fill="#990018"/><rect x="470" y="360" fill="#990016"/><rect x="480" y="360" fill="#990014"/><rect x="490" y="360" fill="#990012"/><rect x="500" y="360" fill="#990010"/><rect x="510" y="360" fill="#99000e"/><rect x="520" y="360" fill="#99000d"/><rect x="530" y="360" fill="#99000b"/><rect x="540" y="360" fill="#99000a"/><rect x="550" y="360" fill="#990008"/><rect x="560" y="360" fill="#990007"/><rect x="570" y="360" fill="#990006"/><rect x="580" y="360" fill="#990005"/><rect x="590" y="360" fill="#990004"/><rect x="600" y="360" fill="#990002"/><rect x="610" y="360" fill="#990001"/><rect x="620" y="360" fill="#990000"/><rect x="630" y="360" fill="#990000"/><rect x="640" y="360" fill="#990000"/><rect x="650" y="360" fill="#990000"/><rect x="660" y="360" fill="#990000"/><rect x="40" y="370" fill="#006599"/><rect x="50" y="370" fill="#006499"/><rect x="60" y="370" fill="#006399"/><rect x="70" y="370" fill="#006299"/><rect x="80" y="370" fill="#006199"/><rect x="90" y="370" fill="#006099"/><rect x="100" y="370" fill="#005f99"/><rect x="110" y="370" fill="#005e99"/><rect x="120" y="370" fill="#005d99"/><rect x="130" y="370" fill="#005c99"/><rect x="140" y="370" fill="#005b99"/><rect x="150" y="370" fill="#005999"/><rect x="160" y="370" fill="#005899"/><rect x="170" y="370" fill="#005799"/><rect x="180" y="370" fill="#055599"/><rect x="190" y="370" fill="#115499"/><rect x="200" y="370" fill="#1e5299"/><rect x="210" y="370" fill="#2c5099"/><rect x="220" y="370" fill="#3b4f99"/><rect x="230" y="370" fill="#4a4d99"/><rect x="240" y="370" fill="#594b99"/><rect x="250" y="370" fill="#6a4999"/><rect x="260" y="370" fill="#7c4799"/><rect x="270" y="370" fill="#8e4599"/><rect x="280" y="370" fill="#993f90"/><rect x="290" y="370" fill="#993680"/><rect x="300" y="370" fill="#992e72"/><rect x="310" y="370" fill="#992767"/><rect x="320" y="370" fill="#99225d"/><rect x="330" y="370" fill="#991d54"/><rect x="340" y="370" fill="#99194c"/><rect x="350" y="370" fill="#991546"/><rect x="360" y="370" fill="#991140"/><rect x="370" y="370" fill="#990e3a"/><rect x="380" y="370" fill="#990c35"/><rect x="390" y="370" fill="#990931"/><rect x="400" y="370" fill="#99072d"/><rect x="410" y="370" fill="#990529"/><rect x="420" y="370" fill="#990326"/><rect x="430" y="370" fill="#990123"/><rect x="440" y="370" fill="#990020"/><rect x="450" y="370" fill="#99001d"/><rect x="460" y="370" fill="#99001b"/><rect x="470" y="370" fill="#990018"/><rect x="480" y="370" fill="#990016"/><rect x="490" y="370" fill="#990014"/><rect x="500" y="370" fill="#990012"/><rect x="510" y="370" fill="#990010"/><rect x="520" y="370" fill="#99000f"/><rect x="530" y="370" fill="#99000d"/><rect x="540" y="370" fill="#99000c"/><rect x="550" y="370" fill="#99000a"/><rect x="560" y="370" fill="#990009"/><rect x="570" y="370" fill="#990008"/><rect x="580" y="370" fill="#990006"/><rect x="590" y="370" fill="#990005"/><rect x="600" y="370" fill="#990004"/><rect x="610" y="370" fill="#990003"/><rect x="620" y="370" fill="#990002"/><rect x="630" y="370" fill="#990001"/><rect x="640" y="370" fill="#990000"/><rect x="650" y="370" fill="#990000"/><rect x="660" y="370" fill="#990000"/><rect x="40" y="380" fill="#005c99"/><rect x="50" y="380" fill="#005b99"/><rect x="60" y="380" fill="#005a99"/><rect x="70" y="380" fill="#005999"/><rect x="80" y="380" fill="#005899"/><rect x="90" y="380" fill="#005799"/><rect x="100" y="380" fill="#005599"/><rect x="110" y="380" fill="#005499"/><rect x="120" y="380" fill="#005399"/><rect x="130" y="380" fill="#005199"/><rect x="140" y="380" fill="#005099"/><rect x="150" y="380" fill="#004f99"/><rect x="160" y="380" fill="#004d99"/><rect x="170" y="380" fill="#004c99"/><rect x="180" y="380" fill="#094a99"/><rect x="190" y="380" fill="#154899"/><rect x="200" y="380" fill="#224799"/><rect x="210" y="380" fill="#2f4599"/><rect x="220" y="380" fill="#3d4399"/><rect x="230" y="380" fill="#4c4199"/><rect x="240" y="380" fill="#5b3f99"/><rect x="250" y="380" fill="#6b3d99"/><rect x="260" y="380" fill="#7c3a99"/><rect x="270" y="380" fill="#8d3899"/><rect x="280" y="380" fill="#993392"/><rect x="290" y="380" fill="#992b82"/><rect x="300" y="380" fill="#992474"/><rect x="310" y="380" fill="#991f69"/><rect x="320" y="380" fill="#991a5f"/><rect x="330" y="380" fill="#991656"/><rect x="340" y="380" fill="#99124f"/><rect x="350" y="380" fill="#990e48"/><rect x="360" y="380" fill="#990b42"/><rect x="370" y="380" fill="#99093d"/><rect x="380" y="380" fill="#990638"/><rect x="390" y="380" fill="#990433"/><rect x="400" y="380" fill="#99022f"/><rect x="410" y="380" fill="#99002b"/><rect x="420" y="380" fill="#990028"/><rect x="430" y="380" fill="#990025"/><rect x="440" y="380" fill="#990022"/><rect x="450" y="380" fill="#99001f"/><rect x="460" y="380" fill="#99001d"/><rect x="470" y="380" fill="#99001a"/><rect x="480" y="380" fill="#990018"/><rect x="490" y="380" fill="#990016"/><rect x="500" y="380" fill="#990014"/><rect x="510" y="380" fill="#990012"/><rect x="520" y="380" fill="#990011"/><rect x="530" y="380" fill="#99000f"/><rect x="540" y="380" fill="#99000d"/><rect x="550" y="380" fill="#99000c"/><rect x="560" y="380" fill="#99000b"/><rect x="570" y="380" fill="#990009"/><rect x="580" y="380" fill="#990008"/><rect x="590" y="380" fill="#990007"/><rect x="600" y="380" fill="#990006"/><rect x="610" y="380" fill="#990005"/><rect x="620" y="380" fill="#990004"/><rect x="630" y="380" fill="#990003"/><rect x="40" y="390" fill="#005399"/><rect x="50" y="390" fill="#005299"/><rect x="60" y="390" fill="#005199"/><rect x="70" y="390" fill="#005099"/><rect x="80" y="390" fill="#004f99"/><rect x="90" y="390" fill="#004d99"/><rect x="100" y="390" fill="#004c99"/><rect x="110" y="390" fill="#004b99"/><rect x="120" y="390" fill="#004999"/><rect x="130" y="390" fill="#004899"/><rect x="140" y="390" fill="#004699"/><rect x="150" y="390" fill="#004599"/><rect x="160" y="390" fill="#004399"/><rect x="170" y="390" fill="#024199"/><rect x="180" y="390" fill="#0d4099"/><rect x="190" y="390" fill="#193e99"/><rect x="200" y="390" fill="#253c99"/><rect x="210" y="390" fill="#323a99"/><rect x="220" y="390" fill="#403899"/><rect x="230" y="390" fill="#4e3699"/><rect x="240" y="390" fill="#5c3399"/><rect x="250" y="390" fill="#6c3199"/><rect x="260" y="390" fill="#7c2f99"/><rect x="270" y="390" fill="#8d2c99"/><rect x="280" y="390" fill="#992893"/><rect x="290" y="390" fill="#992184"/><rect x="300" y="390" fill="#991b76"/><rect x="310" y="390" fill="#99176b"/><rect x="320" y="390" fill="#991261"/><rect x="330" y="390" fill="#990f59"/><rect x="340" y="390" fill="#990b51"/><rect x="350" y="390" fill="#99084b"/><rect x="360" y="390" fill="#990644"/><rect x="370" y="390" fill="#99033f"/><rect x="380" y="390" fill="#99013a"/><rect x="390" y="390" fill="#990036"/><rect x="400" y="390" fill="#990032"/><rect x="410" y="390" fill="#99002e"/><rect x="420" y="390" fill="#99002a"/><rect x="430" y="390" fill="#990027"/><rect x="440" y="390" fill="#990024"/><rect x="450" y="390" fill="#990021"/><rect x="460" y="390" fill="#99001f"/><rect x="470" y="390" fill="#99001c"/><rect x="480" y="390" fill="#99001a"/><rect x="490" y="390" fill="#990018"/><rect x="500" y="390" fill="#990016"/><rect x="510" y="390" fill="#990014"/><rect x="520" y="390" fill="#990012"/><rect x="530" y="390" fill="#990011"/><rect x="540" y="390" fill="#99000f"/><rect x="550" y="390" fill="#99000e"/><rect x="560" y="390" fill="#99000c"/><rect x="570" y="390" fill="#99000b"/><rect x="580" y="390" fill="#99000a"/><rect x="590" y="390" fill="#990009"/><rect x="600" y="390" fill="#990007"/><rect x="50" y="400" fill="#004a99"/><rect x="60" y="400" fill="#004999"/><rect x="70" y="400" fill="#004799"/><rect x="80" y="400" fill="#004699"/><rect x="90" y="400" fill="#004599"/><rect x="100" y="400" fill="#004399"/><rect x="110" y="400" fill="#004299"/><rect x="120" y="400" fill="#004099"/><rect x="130" y="400" fill="#003f99"/><rect x="140" y="400" fill="#003d99"/><rect x="150" y="400" fill="#003b99"/><rect x="160" y="400" fill="#003a99"/><rect x="170" y="400" fill="#063899"/><rect x="180" y="400" fill="#113699"/><rect x="190" y="400" fill="#1c3499"/><rect x="200" y="400" fill="#283299"/><rect x="210" y="400" fill="#353099"/><rect x="220" y="400" fill="#422e99"/><rect x="230" y="400" fill="#4f2b99"/><rect x="240" y="400" fill="#5e2999"/><rect x="250" y="400" fill="#6c2699"/><rect x="260" y="400" fill="#7c2499"/><rect x="270" y="400" fill="#8c2199"/><rect x="280" y="400" fill="#991d94"/><rect x="290" y="400" fill="#991885"/><rect x="300" y="400" fill="#991378"/><rect x="310" y="400" fill="#990f6d"/><rect x="320" y="400" fill="#990b64"/><rect x="330" y="400" fill="#99085b"/><rect x="340" y="400" fill="#990554"/><rect x="350" y="400" fill="#99034d"/><rect x="360" y="400" fill="#990047"/><rect x="370" y="400" fill="#990041"/><rect x="380" y="400" fill="#99003c"/><rect x="390" y="400" fill="#990038"/><rect x="400" y="400" fill="#990034"/><rect x="410" y="400" fill="#990030"/><rect x="420" y="400" fill="#99002c"/><rect x="430" y="400" fill="#990029"/><rect x="440" y="400" fill="#990026"/><rect x="450" y="400" fill="#990023"/><rect x="460" y="400" fill="#990021"/><rect x="470" y="400" fill="#99001e"/><rect x="480" y="400" fill="#99001c"/><rect x="490" y="400" fill="#99001a"/><rect x="500" y="400" fill="#990018"/><rect x="510" y="400" fill="#990016"/><rect x="520" y="400" fill="#990014"/><rect x="530" y="400" fill="#990013"/><rect x="540" y="400" fill="#990011"/><rect x="550" y="400" fill="#990010"/><rect x="560" y="400" fill="#99000e"/><rect x="570" y="400" fill="#99000d"/><rect x="50" y="410" fill="#004299"/><rect x="60" y="410" fill="#004199"/><rect x="70" y="410" fill="#003f99"/><rect x="80" y="410" fill="#003e99"/><rect x="90" y="410" fill="#003d99"/><rect x="100" y="410" fill="#003b99"/><rect x="110" y="410" fill="#003a99"/><rect x="120" y="410" fill="#003899"/><rect x="130" y="410" fill="#003699"/><rect x="140" y="410" fill="#003599"/><rect x="150" y="410" fill="#003399"/><rect x="160" y="410" fill="#003199"/><rect x="170" y="410" fill="#0a2f99"/><rect x="180" y="410" fill="#142d99"/><rect x="190" y="410" fill="#202b99"/><rect x="200" y="410" fill="#2b2999"/><rect x="210" y="410" fill="#372799"/><rect x="220" y="410" fill="#442499"/><rect x="230" y="410" fill="#512299"/><rect x="240" y="410" fill="#5f1f99"/><rect x="250" y="410" fill="#6d1d99"/><rect x="260" y="410" fill="#7c1a99"/><rect x="270" y="410" fill="#8b1799"/><rect x="280" y="410" fill="#991495"/><rect x="290" y="410" fill="#990f87"/><rect x="300" y="410" fill="#990b7a"/><rect x="310" y="410" fill="#99076f"/><rect x="320" y="410" fill="#990466"/><rect x="330" y="410" fill="#99025d"/><rect x="340" y="410" fill="#990056"/><rect x="350" y="410" fill="#99004f"/><rect x="360" y="410" fill="#990049"/><rect x="370" y="410" fill="#990044"/><rect x="380" y="410" fill="#99003f"/><rect x="390" y="410" fill="#99003a"/><rect x="400" y="410" fill="#990036"/><rect x="410" y="410" fill="#990032"/><rect x="420" y="410" fill="#99002f"/><rect x="430" y="410" fill="#99002b"/><rect x="440" y="410" fill="#990028"/><rect x="450" y="410" fill="#990025"/><rect x="460" y="410" fill="#990023"/><rect x="470" y="410" fill="#990020"/><rect x="480" y="410" fill="#99001e"/><rect x="490" y="410" fill="#99001c"/><rect x="500" y="410" fill="#99001a"/><rect x="510" y="410" fill="#990018"/><rect x="520" y="410" fill="#990016"/><rect x="530" y="410" fill="#990014"/><rect x="540" y="410" fill="#990013"/><rect x="50" y="420" fill="#003b99"/><rect x="60" y="420" fill="#003999"/><rect x="70" y="420" fill="#003899"/><rect x="80" y="420" fill="#003699"/><rect x="90" y="420" fill="#003599"/><rect x="100" y="420" fill="#003399"/><rect x="110" y="420" fill="#003299"/><rect x="120" y="420" fill="#003099"/><rect x="130" y="420" fill="#002e99"/><rect x="140" y="420" fill="#002c99"/><rect x="150" y="420" fill="#002b99"/><rect x="160" y="420" fill="#032999"/><rect x="170" y="420" fill="#0d2799"/><rect x="180" y="420" fill="#182599"/><rect x="190" y="420" fill="#232299"/><rect x="200" y="420" fill="#2e2099"/><rect x="210" y="420" fill="#3a1e99"/><rect x="220" y="420" fill="#461b99"/><rect x="230" y="420" fill="#531999"/><rect x="240" y="420" fill="#601699"/><rect x="250" y="420" fill="#6e1499"/><rect x="260" y="420" fill="#7c1199"/><rect x="270" y="420" fill="#8b0e99"/><rect x="280" y="420" fill="#990b97"/><rect x="290" y="420" fill="#990788"/><rect x="300" y="420" fill="#99037c"/><rect x="310" y="420" fill="#990071"/><rect x="320" y="420" fill="#990068"/><rect x="330" y="420" fill="#99005f"/><rect x="340" y="420" fill="#990058"/><rect x="350" y="420" fill="#990051"/><rect x="360" y="420" fill="#99004b"/><rect x="370" y="420" fill="#990046"/><rect x="380" y="420" fill="#990041"/><rect x="390" y="420" fill="#99003c"/><rect x="400" y="420" fill="#990038"/><rect x="410" y="420" fill="#990034"/><rect x="420" y="420" fill="#990031"/><rect x="430" y="420" fill="#99002d"/><rect x="440" y="420" fill="#99002a"/><rect x="450" y="420" fill="#990027"/><rect x="460" y="420" fill="#990025"/><rect x="470" y="420" fill="#990022"/><rect x="480" y="420" fill="#990020"/><rect x="490" y="420" fill="#99001e"/><rect x="500" y="420" fill="#99001c"/><rect x="510" y="420" fill="#99001a"/><rect x="60" y="430" fill="#003299"/><rect x="70" y="430" fill="#003199"/><rect x="80" y="430" fill="#002f99"/><rect x="90" y="430" fill="#002e99"/><rect x="100" y="430" fill="#002c99"/><rect x="110" y="430" fill="#002a99"/><rect x="120" y="430" fill="#002899"/><rect x="130" y="430" fill="#002799"/><rect x="140" y="430" fill="#002599"/><rect x="150" y="430" fill="#002399"/><rect x="160" y="430" fill="#072199"/><rect x="170" y="430" fill="#111f99"/><rect x="180" y="430" fill="#1b1d99"/><rect x="190" y="430" fill="#251a99"/><rect x="200" y="430" fill="#311899"/><rect x="210" y="430" fill="#3c1699"/><rect x="220" y="430" fill="#481399"/><rect x="230" y="430" fill="#541199"/><rect x="240" y="430" fill="#610e99"/><rect x="250" y="430" fill="#6e0b99"/><rect x="260" y="430" fill="#7c0899"/><rect x="270" y="430" fill="#8a0599"/><rect x="280" y="430" fill="#990298"/><rect x="290" y="430" fill="#99008a"/><rect x="300" y="430" fill="#99007d"/><rect x="310" y="430" fill="#990073"/><rect x="320" y="430" fill="#99006a"/><rect x="330" y="430" fill="#990061"/><rect x="340" y="430" fill="#99005a"/><rect x="350" y="430" fill="#990053"/><rect x="360" y="430" fill="#99004d"/><rect x="370" y="430" fill="#990048"/><rect x="380" y="430" fill="#990043"/><rect x="390" y="430" fill="#99003e"/><rect x="400" y="430" fill="#99003a"/><rect x="410" y="430" fill="#990036"/><rect x="420" y="430" fill="#990033"/><rect x="430" y="430" fill="#99002f"/><rect x="440" y="430" fill="#99002c"/><rect x="450" y="430" fill="#990029"/><rect x="460" y="430" fill="#990027"/><rect x="470" y="430" fill="#990024"/><rect x="480" y="430" fill="#990022"/><rect x="60" y="440" fill="#002c99"/><rect x="70" y="440" fill="#002a99"/><rect x="80" y="440" fill="#002899"/><rect x="90" y="440" fill="#002799"/><rect x="100" y="440" fill="#002599"/><rect x="110" y="440" fill="#002399"/><rect x="120" y="440" fill="#002199"/><rect x="130" y="440" fill="#001f99"/><rect x="140" y="440" fill="#001e99"/><rect x="150" y="440" fill="#011c99"/><rect x="160" y="440" fill="#0a1999"/><rect x="170" y="440" fill="#141799"/><rect x="180" y="440" fill="#1e1599"/><rect x="190" y="440" fill="#281399"/><rect x="200" y="440" fill="#331099"/><rect x="210" y="440" fill="#3e0e99"/><rect x="220" y="440" fill="#490b99"/><rect x="230" y="440" fill="#550999"/><rect x="240" y="440" fill="#620699"/><rect x="250" y="440" fill="#6f0399"/><rect x="260" y="440" fill="#7c0099"/><rect x="270" y="440" fill="#8a0099"/><rect x="280" y="440" fill="#980099"/><rect x="290" y="440" fill="#99008b"/><rect x="300" y="440" fill="#99007f"/><rect x="310" y="440" fill="#990075"/><rect x="320" y="440" fill="#99006b"/><rect x="330" y="440" fill="#990063"/><rect x="340" y="440" fill="#99005c"/><rect x="350" y="440" fill="#990055"/><rect x="360" y="440" fill="#99004f"/><rect x="370" y="440" fill="#99004a"/><rect x="380" y="440" fill="#990045"/><rect x="390" y="440" fill="#990040"/><rect x="400" y="440" fill="#99003c"/><rect x="410" y="440" fill="#990038"/><rect x="420" y="440" fill="#990034"/><rect x="430" y="440" fill="#990031"/><rect x="440" y="440" fill="#99002e"/><rect x="450" y="440" fill="#99002b"/><rect x="70" y="450" fill="#002399"/><rect x="80" y="450" fill="#002299"/><rect x="90" y="450" fill="#002099"/><rect x="100" y="450" fill="#001e99"/><rect x="110" y="450" fill="#001d99"/><rect x="120" y="450" fill="#001b99"/><rect x="130" y="450" fill="#001999"/><rect x="140" y="450" fill="#001799"/><rect x="150" y="450" fill="#041599"/><rect x="160" y="450" fill="#0d1399"/><rect x="170" y="450" fill="#171099"/><rect x="180" y="450" fill="#210e99"/><rect x="190" y="450" fill="#2b0c99"/><rect x="200" y="450" fill="#350999"/><rect x="210" y="450" fill="#400799"/><rect x="220" y="450" fill="#4b0499"/><rect x="230" y="450" fill="#570299"/><rect x="240" y="450" fill="#630099"/><rect x="250" y="450" fill="#6f0099"/><rect x="260" y="450" fill="#7c0099"/><rect x="270" y="450" fill="#890099"/><rect x="280" y="450" fill="#970099"/><rect x="290" y="450" fill="#99008c"/><rect x="300" y="450" fill="#990080"/><rect x="310" y="450" fill="#990076"/><rect x="320" y="450" fill="#99006d"/><rect x="330" y="450" fill="#990065"/><rect x="340" y="450" fill="#99005e"/><rect x="350" y="450" fill="#990057"/><rect x="360" y="450" fill="#990051"/><rect x="370" y="450" fill="#99004c"/><rect x="380" y="450" fill="#990047"/><rect x="390" y="450" fill="#990042"/><rect x="400" y="450" fill="#99003e"/><rect x="410" y="450" fill="#99003a"/><rect x="420" y="450" fill="#990036"/><rect x="70" y="460" fill="#001d99"/><rect x="80" y="460" fill="#001c99"/><rect x="90" y="460" fill="#001a99"/><rect x="100" y="460" fill="#001899"/><rect x="110" y="460" fill="#001699"/><rect x="120" y="460" fill="#001499"/><rect x="130" y="460" fill="#001299"/><rect x="140" y="460" fill="#001099"/><rect x="150" y="460" fill="#070e99"/><rect x="160" y="460" fill="#100c99"/><rect x="170" y="460" fill="#1a0a99"/><rect x="180" y="460" fill="#230799"/><rect x="190" y="460" fill="#2d0599"/><rect x="200" y="460" fill="#370399"/><rect x="210" y="460" fill="#420099"/><rect x="220" y="460" fill="#4d0099"/><rect x="230" y="460" fill="#580099"/><rect x="240" y="460" fill="#640099"/><rect x="250" y="460" fill="#700099"/><rect x="260" y="460" fill="#7c0099"/><rect x="270" y="460" fill="#890099"/><rect x="280" y="460" fill="#970099"/><rect x="290" y="460" fill="#99008d"/><rect x="300" y="460" fill="#990082"/><rect x="310" y="460" fill="#990078"/><rect x="320" y="460" fill="#99006f"/><rect x="330" y="460" fill="#990067"/><rect x="340" y="460" fill="#99005f"/><rect x="350" y="460" fill="#990059"/><rect x="360" y="460" fill="#990053"/><rect x="370" y="460" fill="#99004d"/><rect x="380" y="460" fill="#990048"/><rect x="390" y="460" fill="#990044"/><rect x="80" y="470" fill="#001699"/><rect x="90" y="470" fill="#001499"/><rect x="100" y="470" fill="#001299"/><rect x="110" y="470" fill="#001099"/><rect x="120" y="470" fill="#000e99"/><rect x="130" y="470" fill="#000c99"/><rect x="140" y="470" fill="#020a99"/><rect x="150" y="470" fill="#0a0899"/><rect x="160" y="470" fill="#130699"/><rect x="170" y="470" fill="#1c0399"/><rect x="180" y="470" fill="#260199"/><rect x="190" y="470" fill="#2f0099"/><rect x="200" y="470" fill="#390099"/><rect x="210" y="470" fill="#430099"/><rect x="220" y="470" fill="#4e0099"/><rect x="230" y="470" fill="#590099"/><rect x="240" y="470" fill="#640099"/><rect x="250" y="470" fill="#700099"/><rect x="260" y="470" fill="#7c0099"/><rect x="270" y="470" fill="#890099"/><rect x="280" y="470" fill="#960099"/><rect x="290" y="470" fill="#99008e"/><rect x="300" y="470" fill="#990083"/><rect x="310" y="470" fill="#990079"/><rect x="320" y="470" fill="#990070"/><rect x="330" y="470" fill="#990068"/><rect x="340" y="470" fill="#990061"/><rect x="350" y="470" fill="#99005b"/><rect x="360" y="470" fill="#990055"/><rect x="80" y="480" fill="#001099"/><rect x="90" y="480" fill="#000e99"/><rect x="100" y="480" fill="#000c99"/><rect x="110" y="480" fill="#000a99"/><rect x="120" y="480" fill="#000899"/><rect x="130" y="480" fill="#000699"/><rect x="140" y="480" fill="#050499"/><rect x="150" y="480" fill="#0d0299"/><rect x="160" y="480" fill="#160099"/><rect x="170" y="480" fill="#1f0099"/><rect x="180" y="480" fill="#280099"/><rect x="190" y="480" fill="#310099"/><rect x="200" y="480" fill="#3b0099"/><rect x="210" y="480" fill="#450099"/><rect x="220" y="480" fill="#4f0099"/><rect x="230" y="480" fill="#5a0099"/><rect x="240" y="480" fill="#650099"/><rect x="250" y="480" fill="#700099"/><rect x="260" y="480" fill="#7c0099"/><rect x="270" y="480" fill="#880099"/><rect x="280" y="480" fill="#950099"/><rect x="290" y="480" fill="#99008f"/><rect x="300" y="480" fill="#990084"/><rect x="310" y="480" fill="#99007b"/><rect x="320" y="480" fill="#990072"/><rect x="330" y="480" fill="#99006a"/><rect x="90" y="490" fill="#000999"/><rect x="100" y="490" fill="#000799"/><rect x="110" y="490" fill="#000599"/><rect x="120" y="490" fill="#000399"/><rect x="130" y="490" fill="#000199"/><rect x="140" y="490" fill="#080099"/><rect x="150" y="490" fill="#100099"/><rect x="160" y="490" fill="#190099"/><rect x="170" y="490" fill="#210099"/><rect x="180" y="490" fill="#2a0099"/><rect x="190" y="490" fill="#330099"/><rect x="200" y="490" fill="#3d0099"/><rect x="210" y="490" fill="#470099"/><rect x="220" y="490" fill="#510099"/><rect x="230" y="490" fill="#5b0099"/><rect x="240" y="490" fill="#660099"/><rect x="250" y="490" fill="#710099"/><rect x="260" y="490" fill="#7c0099"/><rect x="270" y="490" fill="#880099"/><rect x="280" y="490" fill="#940099"/><rect x="290" y="490" fill="#990090"/><rect x="300" y="490" fill="#990086"/><rect x="100" y="500" fill="#000299"/><rect x="110" y="500" fill="#000099"/><rect x="120" y="500" fill="#000099"/><rect x="130" y="500" fill="#030099"/><rect x="140" y="500" fill="#0b0099"/><rect x="150" y="500" fill="#130099"/><rect x="160" y="500" fill="#1b0099"/><rect x="170" y="500" fill="#240099"/><rect x="180" y="500" fill="#2c0099"/><rect x="190" y="500" fill="#350099"/><rect x="200" y="500" fill="#3e0099"/><rect x="210" y="500" fill="#480099"/><rect x="220" y="500" fill="#520099"/><rect x="230" y="500" fill="#5c0099"/><rect x="240" y="500" fill="#660099"/><rect x="250" y="500" fill="#710099"/><rect x="260" y="500" fill="#7c0099"/><rect x="270" y="500" fill="#880099"/><rect x="110" y="510" fill="#000099"/><rect x="120" y="510" fill="#000099"/><rect x="130" y="510" fill="#060099"/><rect x="140" y="510" fill="#0d0099"/><rect x="150" y="510" fill="#150099"/><rect x="160" y="510" fill="#1d0099"/><rect x="170" y="510" fill="#260099"/><rect x="180" y="510" fill="#2e0099"/><rect x="190" y="510" fill="#370099"/><rect x="200" y="510" fill="#400099"/><rect x="210" y="510" fill="#490099"/><rect x="220" y="510" fill="#530099"/><rect x="230" y="510" fill="#5d0099"/><rect x="240" y="510" fill="#670099"/><rect x="120" y="520" fill="#010099"/><rect x="130" y="520" fill="#080099"/><rect x="140" y="520" fill="#100099"/><rect x="150" y="520" fill="#180099"/><rect x="160" y="520" fill="#200099"/><rect x="170" y="520" fill="#280099"/><rect x="180" y="520" fill="#300099"/><rect x="190" y="520" fill="#390099"/><rect x="200" y="520" fill="#420099"/><rect x="210" y="520" fill="#4b0099"/><rect x="130" y="530" fill="#0b0099"/><rect x="140" y="530" fill="#120099"/><rect x="150" y="530" fill="#1a0099"/><rect x="160" y="530" fill="#220099"/><rect x="170" y="530" fill="#2a0099"/><rect x="180" y="530" fill="#320099"/><rect x="150" y="540" fill="#1a0099"/></g></g><g clip-path="url(#ctr)"><g filter="url(#fbt)" class="fi"><rect x="256" y="144" fill="#00ff00"/><rect x="264" y="144" fill="#00ff00"/><rect x="256" y="152" fill="#00ff03"/><rect x="264" y="152" fill="#03ff00"/><rect x="272" y="152" fill="#0dff00"/><rect x="280" y="152" fill="#18ff00"/><rect x="248" y="160" fill="#00ff0a"/><rect x="256" y="160" fill="#00ff08"/><rect x="264" y="160" fill="#07ff05"/><rect x="272" y="160" fill="#12ff02"/><rect x="280" y="160" fill="#1dff00"/><rect x="288" y="160" fill="#28ff00"/><rect x="296" y="160" fill="#34ff00"/><rect x="248" y="168" fill="#00ff10"/><rect x="256" y="168" fill="#01ff0d"/><rect x="264" y="168" fill="#0bff0a"/><rect x="272" y="168" fill="#17ff07"/><rect x="280" y="168" fill="#22ff04"/><rect x="288" y="168" fill="#2eff01"/><rect x="296" y="168" fill="#3aff00"/><rect x="304" y="168" fill="#46ff00"/><rect x="312" y="168" fill="#53ff00"/><rect x="248" y="176" fill="#00ff15"/><rect x="256" y="176" fill="#05ff13"/><rect x="264" y="176" fill="#10ff10"/><rect x="272" y="176" fill="#1cff0d"/><rect x="280" y="176" fill="#28ff0a"/><rect x="288" y="176" fill="#34ff07"/><rect x="296" y="176" fill="#40ff04"/><rect x="304" y="176" fill="#4dff01"/><rect x="312" y="176" fill="#5aff00"/><rect x="320" y="176" fill="#68ff00"/><rect x="240" y="184" fill="#00ff1e"/><rect x="248" y="184" fill="#00ff1b"/><rect x="256" y="184" fill="#09ff19"/><rect x="264" y="184" fill="#15ff16"/><rect x="272" y="184" fill="#21ff13"/><rect x="280" y="184" fill="#2eff10"/><rect x="288" y="184" fill="#3aff0d"/><rect x="296" y="184" fill="#47ff0a"/><rect x="304" y="184" fill="#55ff07"/><rect x="312" y="184" fill="#62ff03"/><rect x="320" y="184" fill="#70ff00"/><rect x="328" y="184" fill="#7fff00"/><rect x="336" y="184" fill="#8eff00"/><rect x="240" y="192" fill="#00ff24"/><rect x="248" y="192" fill="#02ff22"/><rect x="256" y="192" fill="#0eff1f"/><rect x="264" y="192" fill="#1bff1c"/><rect x="272" y="192" fill="#27ff19"/><rect x="280" y="192" fill="#34ff16"/><rect x="288" y="192" fill="#41ff13"/><rect x="296" y="192" fill="#4fff10"/><rect x="304" y="192" fill="#5cff0d"/><rect x="312" y="192" fill="#6bff0a"/><rect x="320" y="192" fill="#79ff06"/><rect x="328" y="192" fill="#88ff03"/><rect x="336" y="192" fill="#98ff00"/><rect x="344" y="192" fill="#a8ff00"/><rect x="352" y="192" fill="#b8ff00"/><rect x="240" y="200" fill="#00ff2b"/><rect x="248" y="200" fill="#07ff28"/><rect x="256" y="200" fill="#14ff26"/><rect x="264" y="200" fill="#20ff23"/><rect x="272" y="200" fill="#2dff20"/><rect x="280" y="200" fill="#3bff1d"/><rect x="288" y="200" fill="#48ff1a"/><rect x="296" y="200" fill="#56ff17"/><rect x="304" y="200" fill="#65ff14"/><rect x="312" y="200" fill="#74ff10"/><rect x="320" y="200" fill="#83ff0d"/><rect x="328" y="200" fill="#93ff09"/><rect x="336" y="200" fill="#a3ff06"/><rect x="344" y="200" fill="#b4ff02"/><rect x="352" y="200" fill="#c5ff00"/><rect x="360" y="200" fill="#d7ff00"/><rect x="368" y="200" fill="#e9ff00"/><rect x="232" y="208" fill="#00ff35"/><rect x="240" y="208" fill="#00ff32"/><rect x="248" y="208" fill="#0cff30"/><rect x="256" y="208" fill="#19ff2d"/><rect x="264" y="208" fill="#26ff2a"/><rect x="272" y="208" fill="#34ff27"/><rect x="280" y="208" fill="#42ff24"/><rect x="288" y="208" fill="#50ff21"/><rect x="296" y="208" fill="#5fff1e"/><rect x="304" y="208" fill="#6eff1b"/><rect x="312" y="208" fill="#7eff17"/><rect x="320" y="208" fill="#8eff14"/><rect x="328" y="208" fill="#9eff10"/><rect x="336" y="208" fill="#afff0d"/><rect x="344" y="208" fill="#c1ff09"/><rect x="352" y="208" fill="#d3ff05"/><rect x="360" y="208" fill="#e6ff01"/><rect x="368" y="208" fill="#f9ff00"/><rect x="376" y="208" fill="#fff100"/><rect x="232" y="216" fill="#00ff3d"/><rect x="240" y="216" fill="#05ff3a"/><rect x="248" y="216" fill="#12ff37"/><rect x="256" y="216" fill="#1fff35"/><rect x="264" y="216" fill="#2dff32"/><rect x="272" y="216" fill="#3bff2f"/><rect x="280" y="216" fill="#49ff2c"/><rect x="288" y="216" fill="#58ff29"/><rect x="296" y="216" fill="#68ff26"/><rect x="304" y="216" fill="#78ff23"/><rect x="312" y="216" fill="#88ff1f"/><rect x="320" y="216" fill="#99ff1c"/><rect x="328" y="216" fill="#aaff18"/><rect x="336" y="216" fill="#bcff15"/><rect x="344" y="216" fill="#cfff11"/><rect x="352" y="216" fill="#e2ff0d"/><rect x="360" y="216" fill="#f6ff09"/><rect x="368" y="216" fill="#fff304"/><rect x="376" y="216" fill="#ffe100"/><rect x="384" y="216" fill="#ffd100"/><rect x="392" y="216" fill="#ffc300"/><rect x="224" y="224" fill="#00ff47"/><rect x="232" y="224" fill="#00ff45"/><rect x="240" y="224" fill="#0aff42"/><rect x="248" y="224" fill="#18ff40"/><rect x="256" y="224" fill="#26ff3d"/><rect x="264" y="224" fill="#34ff3a"/><rect x="272" y="224" fill="#43ff37"/><rect x="280" y="224" fill="#52ff34"/><rect x="288" y="224" fill="#61ff31"/><rect x="296" y="224" fill="#72ff2e"/><rect x="304" y="224" fill="#82ff2b"/><rect x="312" y="224" fill="#93ff28"/><rect x="320" y="224" fill="#a5ff24"/><rect x="328" y="224" fill="#b7ff21"/><rect x="336" y="224" fill="#caff1d"/><rect x="344" y="224" fill="#deff19"/><rect x="352" y="224" fill="#f2ff15"/><rect x="360" y="224" fill="#fff610"/><rect x="368" y="224" fill="#ffe30b"/><rect x="376" y="224" fill="#ffd307"/><rect x="384" y="224" fill="#ffc403"/><rect x="392" y="224" fill="#ffb600"/><rect x="400" y="224" fill="#ffaa00"/><rect x="408" y="224" fill="#ff9f00"/><rect x="224" y="232" fill="#00ff50"/><rect x="232" y="232" fill="#02ff4e"/><rect x="240" y="232" fill="#10ff4b"/><rect x="248" y="232" fill="#1eff49"/><rect x="256" y="232" fill="#2cff46"/><rect x="264" y="232" fill="#3bff43"/><rect x="272" y="232" fill="#4bff40"/><rect x="280" y="232" fill="#5bff3d"/><rect x="288" y="232" fill="#6bff3a"/><rect x="296" y="232" fill="#7cff37"/><rect x="304" y="232" fill="#8eff34"/><rect x="312" y="232" fill="#a0ff31"/><rect x="320" y="232" fill="#b2ff2d"/><rect x="328" y="232" fill="#c6ff2a"/><rect x="336" y="232" fill="#daff26"/><rect x="344" y="232" fill="#efff22"/><rect x="352" y="232" fill="#fff91e"/><rect x="360" y="232" fill="#ffe517"/><rect x="368" y="232" fill="#ffd412"/><rect x="376" y="232" fill="#ffc50d"/><rect x="384" y="232" fill="#ffb709"/><rect x="392" y="232" fill="#ffaa05"/><rect x="400" y="232" fill="#ff9f02"/><rect x="408" y="232" fill="#ff9500"/><rect x="416" y="232" fill="#ff8b00"/><rect x="424" y="232" fill="#ff8300"/><rect x="224" y="240" fill="#00ff5a"/><rect x="232" y="240" fill="#08ff57"/><rect x="240" y="240" fill="#16ff55"/><rect x="248" y="240" fill="#25ff52"/><rect x="256" y="240" fill="#34ff50"/><rect x="264" y="240" fill="#43ff4d"/><rect x="272" y="240" fill="#54ff4a"/><rect x="280" y="240" fill="#64ff47"/><rect x="288" y="240" fill="#76ff44"/><rect x="296" y="240" fill="#88ff41"/><rect x="304" y="240" fill="#9aff3e"/><rect x="312" y="240" fill="#adff3b"/><rect x="320" y="240" fill="#c1ff37"/><rect x="328" y="240" fill="#d5ff34"/><rect x="336" y="240" fill="#ebff30"/><rect x="344" y="240" fill="#fffc2c"/><rect x="352" y="240" fill="#ffe824"/><rect x="360" y="240" fill="#ffd61e"/><rect x="368" y="240" fill="#ffc518"/><rect x="376" y="240" fill="#ffb713"/><rect x="384" y="240" fill="#ffaa0f"/><rect x="392" y="240" fill="#ff9f0b"/><rect x="400" y="240" fill="#ff9407"/><rect x="408" y="240" fill="#ff8a04"/><rect x="416" y="240" fill="#ff8201"/><rect x="424" y="240" fill="#ff7900"/><rect x="432" y="240" fill="#ff7200"/><rect x="216" y="248" fill="#00ff66"/><rect x="224" y="248" fill="#00ff64"/><rect x="232" y="248" fill="#0dff61"/><rect x="240" y="248" fill="#1cff5f"/><rect x="248" y="248" fill="#2cff5d"/><rect x="256" y="248" fill="#3cff5a"/><rect x="264" y="248" fill="#4cff57"/><rect x="272" y="248" fill="#5dff55"/><rect x="280" y="248" fill="#6fff52"/><rect x="288" y="248" fill="#81ff4f"/><rect x="296" y="248" fill="#94ff4c"/><rect x="304" y="248" fill="#a7ff49"/><rect x="312" y="248" fill="#bcff45"/><rect x="320" y="248" fill="#d1ff42"/><rect x="328" y="248" fill="#e6ff3e"/><rect x="336" y="248" fill="#fdff3b"/><rect x="344" y="248" fill="#ffea33"/><rect x="352" y="248" fill="#ffd72b"/><rect x="360" y="248" fill="#ffc624"/><rect x="368" y="248" fill="#ffb71f"/><rect x="376" y="248" fill="#ffaa19"/><rect x="384" y="248" fill="#ff9e15"/><rect x="392" y="248" fill="#ff9310"/><rect x="400" y="248" fill="#ff890c"/><rect x="408" y="248" fill="#ff8009"/><rect x="416" y="248" fill="#ff7806"/><rect x="424" y="248" fill="#ff7103"/><rect x="432" y="248" fill="#ff6a00"/><rect x="440" y="248" fill="#ff6300"/><rect x="448" y="248" fill="#ff5d00"/><rect x="216" y="256" fill="#00ff71"/><rect x="224" y="256" fill="#05ff6f"/><rect x="232" y="256" fill="#14ff6d"/><rect x="240" y="256" fill="#24ff6a"/><rect x="248" y="256" fill="#34ff68"/><rect x="256" y="256" fill="#45ff65"/><rect x="264" y="256" fill="#56ff63"/><rect x="272" y="256" fill="#68ff60"/><rect x="280" y="256" fill="#7aff5d"/><rect x="288" y="256" fill="#8eff5a"/><rect x="296" y="256" fill="#a2ff57"/><rect x="304" y="256" fill="#b6ff54"/><rect x="312" y="256" fill="#ccff51"/><rect x="320" y="256" fill="#e2ff4e"/><rect x="328" y="256" fill="#f9ff4a"/><rect x="336" y="256" fill="#ffed42"/><rect x="344" y="256" fill="#ffd939"/><rect x="352" y="256" fill="#ffc731"/><rect x="360" y="256" fill="#ffb82b"/><rect x="368" y="256" fill="#ffaa24"/><rect x="376" y="256" fill="#ff9e1f"/><rect x="384" y="256" fill="#ff931a"/><rect x="392" y="256" fill="#ff8816"/><rect x="400" y="256" fill="#ff7f12"/><rect x="408" y="256" fill="#ff770e"/><rect x="416" y="256" fill="#ff6f0b"/><rect x="424" y="256" fill="#ff6807"/><rect x="432" y="256" fill="#ff6105"/><rect x="440" y="256" fill="#ff5b02"/><rect x="448" y="256" fill="#ff5600"/><rect x="456" y="256" fill="#ff5000"/><rect x="464" y="256" fill="#ff4b00"/><rect x="208" y="264" fill="#00ff7f"/><rect x="216" y="264" fill="#00ff7d"/><rect x="224" y="264" fill="#0bff7b"/><rect x="232" y="264" fill="#1bff79"/><rect x="240" y="264" fill="#2bff76"/><rect x="248" y="264" fill="#3cff74"/><rect x="256" y="264" fill="#4eff72"/><rect x="264" y="264" fill="#60ff6f"/><rect x="272" y="264" fill="#73ff6d"/><rect x="280" y="264" fill="#87ff6a"/><rect x="288" y="264" fill="#9bff67"/><rect x="296" y="264" fill="#b1ff64"/><rect x="304" y="264" fill="#c7ff61"/><rect x="312" y="264" fill="#ddff5e"/><rect x="320" y="264" fill="#f5ff5b"/><rect x="328" y="264" fill="#fff052"/><rect x="336" y="264" fill="#ffdb48"/><rect x="344" y="264" fill="#ffc83f"/><rect x="352" y="264" fill="#ffb837"/><rect x="360" y="264" fill="#ffaa30"/><rect x="368" y="264" fill="#ff9d2a"/><rect x="376" y="264" fill="#ff9224"/><rect x="384" y="264" fill="#ff871f"/><rect x="392" y="264" fill="#ff7e1b"/><rect x="400" y="264" fill="#ff7517"/><rect x="408" y="264" fill="#ff6e13"/><rect x="416" y="264" fill="#ff660f"/><rect x="424" y="264" fill="#ff600c"/><rect x="432" y="264" fill="#ff5909"/><rect x="440" y="264" fill="#ff5406"/><rect x="448" y="264" fill="#ff4e04"/><rect x="456" y="264" fill="#ff4901"/><rect x="464" y="264" fill="#ff4500"/><rect x="472" y="264" fill="#ff4000"/><rect x="480" y="264" fill="#ff3c00"/><rect x="208" y="272" fill="#00ff8b"/><rect x="216" y="272" fill="#01ff8a"/><rect x="224" y="272" fill="#12ff88"/><rect x="232" y="272" fill="#22ff86"/><rect x="240" y="272" fill="#34ff83"/><rect x="248" y="272" fill="#46ff81"/><rect x="256" y="272" fill="#58ff7f"/><rect x="264" y="272" fill="#6cff7d"/><rect x="272" y="272" fill="#80ff7a"/><rect x="280" y="272" fill="#95ff78"/><rect x="288" y="272" fill="#aaff75"/><rect x="296" y="272" fill="#c1ff72"/><rect x="304" y="272" fill="#d8ff70"/><rect x="312" y="272" fill="#f1ff6d"/><rect x="320" y="272" fill="#fff365"/><rect x="328" y="272" fill="#ffdd59"/><rect x="336" y="272" fill="#ffca4e"/><rect x="344" y="272" fill="#ffb945"/><rect x="352" y="272" fill="#ffaa3d"/><rect x="360" y="272" fill="#ff9d36"/><rect x="368" y="272" fill="#ff912f"/><rect x="376" y="272" fill="#ff862a"/><rect x="384" y="272" fill="#ff7d24"/><rect x="392" y="272" fill="#ff7420"/><rect x="400" y="272" fill="#ff6c1b"/><rect x="408" y="272" fill="#ff6517"/><rect x="416" y="272" fill="#ff5e14"/><rect x="424" y="272" fill="#ff5810"/><rect x="432" y="272" fill="#ff520d"/><rect x="440" y="272" fill="#ff4c0a"/><rect x="448" y="272" fill="#ff4708"/><rect x="456" y="272" fill="#ff4305"/><rect x="464" y="272" fill="#ff3e03"/><rect x="472" y="272" fill="#ff3a00"/><rect x="480" y="272" fill="#ff3600"/><rect x="488" y="272" fill="#ff3300"/><rect x="208" y="280" fill="#00ff99"/><rect x="216" y="280" fill="#08ff98"/><rect x="224" y="280" fill="#19ff96"/><rect x="232" y="280" fill="#2bff94"/><rect x="240" y="280" fill="#3dff92"/><rect x="248" y="280" fill="#50ff90"/><rect x="256" y="280" fill="#64ff8e"/><rect x="264" y="280" fill="#78ff8c"/><rect x="272" y="280" fill="#8eff89"/><rect x="280" y="280" fill="#a4ff87"/><rect x="288" y="280" fill="#bbff85"/><rect x="296" y="280" fill="#d3ff82"/><rect x="304" y="280" fill="#ecff7f"/><rect x="312" y="280" fill="#fff779"/><rect x="320" y="280" fill="#ffdf6b"/><rect x="328" y="280" fill="#ffcb5f"/><rect x="336" y="280" fill="#ffb954"/><rect x="344" y="280" fill="#ffaa4b"/><rect x="352" y="280" fill="#ff9c43"/><rect x="360" y="280" fill="#ff903b"/><rect x="368" y="280" fill="#ff8535"/><rect x="376" y="280" fill="#ff7b2f"/><rect x="384" y="280" fill="#ff7229"/><rect x="392" y="280" fill="#ff6a24"/><rect x="400" y="280" fill="#ff6320"/><rect x="408" y="280" fill="#ff5c1c"/><rect x="416" y="280" fill="#ff5618"/><rect x="424" y="280" fill="#ff5015"/><rect x="432" y="280" fill="#ff4a11"/><rect x="440" y="280" fill="#ff450e"/><rect x="448" y="280" fill="#ff410c"/><rect x="456" y="280" fill="#ff3c09"/><rect x="464" y="280" fill="#ff3806"/><rect x="472" y="280" fill="#ff3404"/><rect x="480" y="280" fill="#ff3102"/><rect x="488" y="280" fill="#ff2d00"/><rect x="496" y="280" fill="#ff2a00"/><rect x="504" y="280" fill="#ff2700"/><rect x="200" y="288" fill="#00ffaa"/><rect x="208" y="288" fill="#00ffa8"/><rect x="216" y="288" fill="#0fffa7"/><rect x="224" y="288" fill="#21ffa5"/><rect x="232" y="288" fill="#34ffa3"/><rect x="240" y="288" fill="#47ffa2"/><rect x="248" y="288" fill="#5bffa0"/><rect x="256" y="288" fill="#70ff9e"/><rect x="264" y="288" fill="#86ff9c"/><rect x="272" y="288" fill="#9dff9a"/><rect x="280" y="288" fill="#b5ff98"/><rect x="288" y="288" fill="#ceff96"/><rect x="296" y="288" fill="#e8ff93"/><rect x="304" y="288" fill="#fffa8f"/><rect x="312" y="288" fill="#ffe27e"/><rect x="320" y="288" fill="#ffcc70"/><rect x="328" y="288" fill="#ffba64"/><rect x="336" y="288" fill="#ffaa59"/><rect x="344" y="288" fill="#ff9c50"/><rect x="352" y="288" fill="#ff8f48"/><rect x="360" y="288" fill="#ff8440"/><rect x="368" y="288" fill="#ff7a3a"/><rect x="376" y="288" fill="#ff7134"/><rect x="384" y="288" fill="#ff682e"/><rect x="392" y="288" fill="#ff6129"/><rect x="400" y="288" fill="#ff5a25"/><rect x="408" y="288" fill="#ff5320"/><rect x="416" y="288" fill="#ff4e1c"/><rect x="424" y="288" fill="#ff4819"/><rect x="432" y="288" fill="#ff4315"/><rect x="440" y="288" fill="#ff3e12"/><rect x="448" y="288" fill="#ff3a0f"/><rect x="456" y="288" fill="#ff360d"/><rect x="464" y="288" fill="#ff320a"/><rect x="472" y="288" fill="#ff2e08"/><rect x="480" y="288" fill="#ff2b05"/><rect x="488" y="288" fill="#ff2803"/><rect x="496" y="288" fill="#ff2501"/><rect x="504" y="288" fill="#ff2200"/><rect x="512" y="288" fill="#ff1f00"/><rect x="520" y="288" fill="#ff1c00"/><rect x="200" y="296" fill="#00ffba"/><rect x="208" y="296" fill="#05ffb9"/><rect x="216" y="296" fill="#17ffb7"/><rect x="224" y="296" fill="#2affb6"/><rect x="232" y="296" fill="#3effb5"/><rect x="240" y="296" fill="#52ffb3"/><rect x="248" y="296" fill="#68ffb2"/><rect x="256" y="296" fill="#7effb0"/><rect x="264" y="296" fill="#96ffae"/><rect x="272" y="296" fill="#aeffad"/><rect x="280" y="296" fill="#c8ffab"/><rect x="288" y="296" fill="#e2ffa9"/><rect x="296" y="296" fill="#feffa7"/><rect x="304" y="296" fill="#ffe494"/><rect x="312" y="296" fill="#ffce84"/><rect x="320" y="296" fill="#ffbb76"/><rect x="328" y="296" fill="#ffaa69"/><rect x="336" y="296" fill="#ff9b5f"/><rect x="344" y="296" fill="#ff8e55"/><rect x="352" y="296" fill="#ff834d"/><rect x="360" y="296" fill="#ff7845"/><rect x="368" y="296" fill="#ff6f3e"/><rect x="376" y="296" fill="#ff6638"/><rect x="384" y="296" fill="#ff5f33"/><rect x="392" y="296" fill="#ff582e"/><rect x="400" y="296" fill="#ff5129"/><rect x="408" y="296" fill="#ff4b25"/><rect x="416" y="296" fill="#ff4621"/><rect x="424" y="296" fill="#ff411d"/><rect x="432" y="296" fill="#ff3c19"/><rect x="440" y="296" fill="#ff3716"/><rect x="448" y="296" fill="#ff3313"/><rect x="456" y="296" fill="#ff2f10"/><rect x="464" y="296" fill="#ff2c0e"/><rect x="472" y="296" fill="#ff280b"/><rect x="480" y="296" fill="#ff2509"/><rect x="488" y="296" fill="#ff2207"/><rect x="496" y="296" fill="#ff1f05"/><rect x="504" y="296" fill="#ff1d03"/><rect x="512" y="296" fill="#ff1a01"/><rect x="520" y="296" fill="#ff1800"/><rect x="528" y="296" fill="#ff1500"/><rect x="536" y="296" fill="#ff1300"/><rect x="192" y="304" fill="#00ffcd"/><rect x="200" y="304" fill="#00ffcc"/><rect x="208" y="304" fill="#0cffcb"/><rect x="216" y="304" fill="#1fffca"/><rect x="224" y="304" fill="#34ffc9"/><rect x="232" y="304" fill="#49ffc8"/><rect x="240" y="304" fill="#5fffc7"/><rect x="248" y="304" fill="#76ffc5"/><rect x="256" y="304" fill="#8effc4"/><rect x="264" y="304" fill="#a7ffc3"/><rect x="272" y="304" fill="#c1ffc2"/><rect x="280" y="304" fill="#ddffc0"/><rect x="288" y="304" fill="#faffbf"/><rect x="296" y="304" fill="#ffe7ac"/><rect x="304" y="304" fill="#ffd099"/><rect x="312" y="304" fill="#ffbb89"/><rect x="320" y="304" fill="#ffaa7b"/><rect x="328" y="304" fill="#ff9b6e"/><rect x="336" y="304" fill="#ff8d64"/><rect x="344" y="304" fill="#ff815a"/><rect x="352" y="304" fill="#ff7752"/><rect x="360" y="304" fill="#ff6d4a"/><rect x="368" y="304" fill="#ff6443"/><rect x="376" y="304" fill="#ff5d3d"/><rect x="384" y="304" fill="#ff5537"/><rect x="392" y="304" fill="#ff4f32"/><rect x="400" y="304" fill="#ff492d"/><rect x="408" y="304" fill="#ff4329"/><rect x="416" y="304" fill="#ff3e25"/><rect x="424" y="304" fill="#ff3921"/><rect x="432" y="304" fill="#ff351d"/><rect x="440" y="304" fill="#ff311a"/><rect x="448" y="304" fill="#ff2d17"/><rect x="456" y="304" fill="#ff2914"/><rect x="464" y="304" fill="#ff2611"/><rect x="472" y="304" fill="#ff230f"/><rect x="480" y="304" fill="#ff200c"/><rect x="488" y="304" fill="#ff1d0a"/><rect x="496" y="304" fill="#ff1a08"/><rect x="504" y="304" fill="#ff1806"/><rect x="512" y="304" fill="#ff1504"/><rect x="520" y="304" fill="#ff1302"/><rect x="528" y="304" fill="#ff1100"/><rect x="536" y="304" fill="#ff0f00"/><rect x="544" y="304" fill="#ff0d00"/><rect x="192" y="312" fill="#00ffe0"/><rect x="200" y="312" fill="#01ffe0"/><rect x="208" y="312" fill="#14ffdf"/><rect x="216" y="312" fill="#29ffde"/><rect x="224" y="312" fill="#3fffde"/><rect x="232" y="312" fill="#55ffdd"/><rect x="240" y="312" fill="#6dffdc"/><rect x="248" y="312" fill="#85ffdc"/><rect x="256" y="312" fill="#9fffdb"/><rect x="264" y="312" fill="#baffda"/><rect x="272" y="312" fill="#d7ffd9"/><rect x="280" y="312" fill="#f5ffd8"/><rect x="288" y="312" fill="#ffebc6"/><rect x="296" y="312" fill="#ffd1b0"/><rect x="304" y="312" fill="#ffbc9e"/><rect x="312" y="312" fill="#ffaa8d"/><rect x="320" y="312" fill="#ff9a7f"/><rect x="328" y="312" fill="#ff8c73"/><rect x="336" y="312" fill="#ff8068"/><rect x="344" y="312" fill="#ff755f"/><rect x="352" y="312" fill="#ff6b56"/><rect x="360" y="312" fill="#ff624f"/><rect x="368" y="312" fill="#ff5a48"/><rect x="376" y="312" fill="#ff5341"/><rect x="384" y="312" fill="#ff4c3b"/><rect x="392" y="312" fill="#ff4636"/><rect x="400" y="312" fill="#ff4131"/><rect x="408" y="312" fill="#ff3c2d"/><rect x="416" y="312" fill="#ff3728"/><rect x="424" y="312" fill="#ff3225"/><rect x="432" y="312" fill="#ff2e21"/><rect x="440" y="312" fill="#ff2a1e"/><rect x="448" y="312" fill="#ff271a"/><rect x="456" y="312" fill="#ff2317"/><rect x="464" y="312" fill="#ff2015"/><rect x="472" y="312" fill="#ff1d12"/><rect x="480" y="312" fill="#ff1a0f"/><rect x="488" y="312" fill="#ff180d"/><rect x="496" y="312" fill="#ff150b"/><rect x="504" y="312" fill="#ff1309"/><rect x="512" y="312" fill="#ff1107"/><rect x="520" y="312" fill="#ff0f05"/><rect x="528" y="312" fill="#ff0c03"/><rect x="536" y="312" fill="#ff0b01"/><rect x="544" y="312" fill="#ff0900"/><rect x="552" y="312" fill="#ff0700"/><rect x="560" y="312" fill="#ff0500"/><rect x="192" y="320" fill="#00fff6"/><rect x="200" y="320" fill="#09fff5"/><rect x="208" y="320" fill="#1efff5"/><rect x="216" y="320" fill="#34fff5"/><rect x="224" y="320" fill="#4bfff5"/><rect x="232" y="320" fill="#63fff5"/><rect x="240" y="320" fill="#7cfff5"/><rect x="248" y="320" fill="#97fff4"/><rect x="256" y="320" fill="#b3fff4"/><rect x="264" y="320" fill="#d0fff4"/><rect x="272" y="320" fill="#effff4"/><rect x="280" y="320" fill="#ffeee4"/><rect x="288" y="320" fill="#ffd3ca"/><rect x="296" y="320" fill="#ffbdb4"/><rect x="304" y="320" fill="#ffaaa2"/><rect x="312" y="320" fill="#ff9992"/><rect x="320" y="320" fill="#ff8b84"/><rect x="328" y="320" fill="#ff7e78"/><rect x="336" y="320" fill="#ff736d"/><rect x="344" y="320" fill="#ff6963"/><rect x="352" y="320" fill="#ff605b"/><rect x="360" y="320" fill="#ff5853"/><rect x="368" y="320" fill="#ff504c"/><rect x="376" y="320" fill="#ff4a45"/><rect x="384" y="320" fill="#ff443f"/><rect x="392" y="320" fill="#ff3e3a"/><rect x="400" y="320" fill="#ff3935"/><rect x="408" y="320" fill="#ff3430"/><rect x="416" y="320" fill="#ff302c"/><rect x="424" y="320" fill="#ff2c28"/><rect x="432" y="320" fill="#ff2825"/><rect x="440" y="320" fill="#ff2421"/><rect x="448" y="320" fill="#ff211e"/><rect x="456" y="320" fill="#ff1e1b"/><rect x="464" y="320" fill="#ff1b18"/><rect x="472" y="320" fill="#ff1815"/><rect x="480" y="320" fill="#ff1513"/><rect x="488" y="320" fill="#ff1310"/><rect x="496" y="320" fill="#ff100e"/><rect x="504" y="320" fill="#ff0e0c"/><rect x="512" y="320" fill="#ff0c0a"/><rect x="520" y="320" fill="#ff0a08"/><rect x="528" y="320" fill="#ff0806"/><rect x="536" y="320" fill="#ff0604"/><rect x="544" y="320" fill="#ff0503"/><rect x="552" y="320" fill="#ff0301"/><rect x="560" y="320" fill="#ff0100"/><rect x="568" y="320" fill="#ff0000"/><rect x="576" y="320" fill="#ff0000"/><rect x="184" y="328" fill="#00f1ff"/><rect x="192" y="328" fill="#00f0ff"/><rect x="200" y="328" fill="#10f0ff"/><rect x="208" y="328" fill="#26f0ff"/><rect x="216" y="328" fill="#3cefff"/><rect x="224" y="328" fill="#53efff"/><rect x="232" y="328" fill="#6beeff"/><rect x="240" y="328" fill="#85eeff"/><rect x="248" y="328" fill="#9feeff"/><rect x="256" y="328" fill="#bbedff"/><rect x="264" y="328" fill="#d9edff"/><rect x="272" y="328" fill="#f8ecff"/><rect x="280" y="328" fill="#ffd6e7"/><rect x="288" y="328" fill="#ffbece"/><rect x="296" y="328" fill="#ffaab8"/><rect x="304" y="328" fill="#ff98a6"/><rect x="312" y="328" fill="#ff8996"/><rect x="320" y="328" fill="#ff7c88"/><rect x="328" y="328" fill="#ff717c"/><rect x="336" y="328" fill="#ff6771"/><rect x="344" y="328" fill="#ff5d68"/><rect x="352" y="328" fill="#ff555f"/><rect x="360" y="328" fill="#ff4e57"/><rect x="368" y="328" fill="#ff4750"/><rect x="376" y="328" fill="#ff4149"/><rect x="384" y="328" fill="#ff3b43"/><rect x="392" y="328" fill="#ff363e"/><rect x="400" y="328" fill="#ff3139"/><rect x="408" y="328" fill="#ff2d34"/><rect x="416" y="328" fill="#ff2930"/><rect x="424" y="328" fill="#ff252c"/><rect x="432" y="328" fill="#ff2128"/><rect x="440" y="328" fill="#ff1e25"/><rect x="448" y="328" fill="#ff1b21"/><rect x="456" y="328" fill="#ff181e"/><rect x="464" y="328" fill="#ff151b"/><rect x="472" y="328" fill="#ff1318"/><rect x="480" y="328" fill="#ff1016"/><rect x="488" y="328" fill="#ff0e13"/><rect x="496" y="328" fill="#ff0c11"/><rect x="504" y="328" fill="#ff0a0f"/><rect x="512" y="328" fill="#ff080d"/><rect x="520" y="328" fill="#ff060b"/><rect x="528" y="328" fill="#ff0409"/><rect x="536" y="328" fill="#ff0207"/><rect x="544" y="328" fill="#ff0105"/><rect x="552" y="328" fill="#ff0004"/><rect x="560" y="328" fill="#ff0002"/><rect x="568" y="328" fill="#ff0001"/><rect x="576" y="328" fill="#ff0000"/><rect x="184" y="336" fill="#00dbff"/><rect x="192" y="336" fill="#04dbff"/><rect x="200" y="336" fill="#17daff"/><rect x="208" y="336" fill="#2cd9ff"/><rect x="216" y="336" fill="#41d8ff"/><rect x="224" y="336" fill="#58d7ff"/><rect x="232" y="336" fill="#6fd6ff"/><rect x="240" y="336" fill="#88d5ff"/><rect x="248" y="336" fill="#a1d4ff"/><rect x="256" y="336" fill="#bcd3ff"/><rect x="264" y="336" fill="#d8d2ff"/><rect x="272" y="336" fill="#f6d1ff"/><rect x="280" y="336" fill="#ffbfea"/><rect x="288" y="336" fill="#ffaad1"/><rect x="296" y="336" fill="#ff97bc"/><rect x="304" y="336" fill="#ff88aa"/><rect x="312" y="336" fill="#ff7a9a"/><rect x="320" y="336" fill="#ff6f8c"/><rect x="328" y="336" fill="#ff6480"/><rect x="336" y="336" fill="#ff5b75"/><rect x="344" y="336" fill="#ff526c"/><rect x="352" y="336" fill="#ff4b63"/><rect x="360" y="336" fill="#ff445b"/><rect x="368" y="336" fill="#ff3e54"/><rect x="376" y="336" fill="#ff384d"/><rect x="384" y="336" fill="#ff3347"/><rect x="392" y="336" fill="#ff2e42"/><rect x="400" y="336" fill="#ff2a3d"/><rect x="408" y="336" fill="#ff2638"/><rect x="416" y="336" fill="#ff2233"/><rect x="424" y="336" fill="#ff1f2f"/><rect x="432" y="336" fill="#ff1b2b"/><rect x="440" y="336" fill="#ff1828"/><rect x="448" y="336" fill="#ff1525"/><rect x="456" y="336" fill="#ff1221"/><rect x="464" y="336" fill="#ff101e"/><rect x="472" y="336" fill="#ff0d1c"/><rect x="480" y="336" fill="#ff0b19"/><rect x="488" y="336" fill="#ff0916"/><rect x="496" y="336" fill="#ff0714"/><rect x="504" y="336" fill="#ff0512"/><rect x="512" y="336" fill="#ff0310"/><rect x="520" y="336" fill="#ff010e"/><rect x="528" y="336" fill="#ff000c"/><rect x="536" y="336" fill="#ff000a"/><rect x="544" y="336" fill="#ff0008"/><rect x="552" y="336" fill="#ff0006"/><rect x="184" y="344" fill="#00c8ff"/><rect x="192" y="344" fill="#0bc7ff"/><rect x="200" y="344" fill="#1ec5ff"/><rect x="208" y="344" fill="#32c4ff"/><rect x="216" y="344" fill="#47c3ff"/><rect x="224" y="344" fill="#5cc2ff"/><rect x="232" y="344" fill="#73c0ff"/><rect x="240" y="344" fill="#8bbfff"/><rect x="248" y="344" fill="#a3bdff"/><rect x="256" y="344" fill="#bdbcff"/><rect x="264" y="344" fill="#d8baff"/><rect x="272" y="344" fill="#f4b8ff"/><rect x="280" y="344" fill="#ffa9ec"/><rect x="288" y="344" fill="#ff97d4"/><rect x="296" y="344" fill="#ff86bf"/><rect x="304" y="344" fill="#ff78ae"/><rect x="312" y="344" fill="#ff6c9e"/><rect x="320" y="344" fill="#ff6290"/><rect x="328" y="344" fill="#ff5884"/><rect x="336" y="344" fill="#ff5079"/><rect x="344" y="344" fill="#ff4870"/><rect x="352" y="344" fill="#ff4167"/><rect x="360" y="344" fill="#ff3b5f"/><rect x="368" y="344" fill="#ff3558"/><rect x="376" y="344" fill="#ff3051"/><rect x="384" y="344" fill="#ff2b4b"/><rect x="392" y="344" fill="#ff2745"/><rect x="400" y="344" fill="#ff2340"/><rect x="408" y="344" fill="#ff1f3b"/><rect x="416" y="344" fill="#ff1b37"/><rect x="424" y="344" fill="#ff1833"/><rect x="432" y="344" fill="#ff152f"/><rect x="440" y="344" fill="#ff122b"/><rect x="448" y="344" fill="#ff1028"/><rect x="456" y="344" fill="#ff0d25"/><rect x="464" y="344" fill="#ff0b21"/><rect x="472" y="344" fill="#ff081f"/><rect x="480" y="344" fill="#ff061c"/><rect x="488" y="344" fill="#ff0419"/><rect x="496" y="344" fill="#ff0217"/><rect x="504" y="344" fill="#ff0115"/><rect x="512" y="344" fill="#ff0012"/><rect x="520" y="344" fill="#ff0010"/><rect x="528" y="344" fill="#ff000e"/><rect x="176" y="352" fill="#00b6ff"/><rect x="184" y="352" fill="#00b5ff"/><rect x="192" y="352" fill="#11b4ff"/><rect x="200" y="352" fill="#24b2ff"/><rect x="208" y="352" fill="#37b1ff"/><rect x="216" y="352" fill="#4cafff"/><rect x="224" y="352" fill="#61adff"/><rect x="232" y="352" fill="#76acff"/><rect x="240" y="352" fill="#8daaff"/><rect x="248" y="352" fill="#a5a8ff"/><rect x="256" y="352" fill="#bea6ff"/><rect x="264" y="352" fill="#d8a4ff"/><rect x="272" y="352" fill="#f3a2ff"/><rect x="280" y="352" fill="#ff95ef"/><rect x="288" y="352" fill="#ff85d7"/><rect x="296" y="352" fill="#ff76c3"/><rect x="304" y="352" fill="#ff6ab1"/><rect x="312" y="352" fill="#ff5fa2"/><rect x="320" y="352" fill="#ff5594"/><rect x="328" y="352" fill="#ff4c88"/><rect x="336" y="352" fill="#ff457d"/><rect x="344" y="352" fill="#ff3e74"/><rect x="352" y="352" fill="#ff386b"/><rect x="360" y="352" fill="#ff3263"/><rect x="368" y="352" fill="#ff2d5c"/><rect x="376" y="352" fill="#ff2855"/><rect x="384" y="352" fill="#ff244f"/><rect x="392" y="352" fill="#ff2049"/><rect x="400" y="352" fill="#ff1c44"/><rect x="408" y="352" fill="#ff183f"/><rect x="416" y="352" fill="#ff153a"/><rect x="424" y="352" fill="#ff1236"/><rect x="432" y="352" fill="#ff0f32"/><rect x="440" y="352" fill="#ff0d2e"/><rect x="448" y="352" fill="#ff0a2b"/><rect x="456" y="352" fill="#ff0828"/><rect x="464" y="352" fill="#ff0625"/><rect x="472" y="352" fill="#ff0422"/><rect x="480" y="352" fill="#ff021f"/><rect x="488" y="352" fill="#ff001c"/><rect x="496" y="352" fill="#ff001a"/><rect x="504" y="352" fill="#ff0017"/><rect x="512" y="352" fill="#ff0015"/><rect x="176" y="360" fill="#00a5ff"/><rect x="184" y="360" fill="#06a4ff"/><rect x="192" y="360" fill="#17a2ff"/><rect x="200" y="360" fill="#2aa0ff"/><rect x="208" y="360" fill="#3c9eff"/><rect x="216" y="360" fill="#509cff"/><rect x="224" y="360" fill="#649bff"/><rect x="232" y="360" fill="#7a98ff"/><rect x="240" y="360" fill="#9096ff"/><rect x="248" y="360" fill="#a794ff"/><rect x="256" y="360" fill="#bf92ff"/><rect x="264" y="360" fill="#d88fff"/><rect x="272" y="360" fill="#f28dff"/><rect x="280" y="360" fill="#ff83f1"/><rect x="288" y="360" fill="#ff74da"/><rect x="296" y="360" fill="#ff67c6"/><rect x="304" y="360" fill="#ff5cb4"/><rect x="312" y="360" fill="#ff52a5"/><rect x="320" y="360" fill="#ff4998"/><rect x="328" y="360" fill="#ff418c"/><rect x="336" y="360" fill="#ff3a81"/><rect x="344" y="360" fill="#ff3477"/><rect x="352" y="360" fill="#ff2e6e"/><rect x="360" y="360" fill="#ff2966"/><rect x="368" y="360" fill="#ff255f"/><rect x="376" y="360" fill="#ff2058"/><rect x="384" y="360" fill="#ff1c52"/><rect x="392" y="360" fill="#ff184c"/><rect x="400" y="360" fill="#ff1547"/><rect x="408" y="360" fill="#ff1242"/><rect x="416" y="360" fill="#ff0f3e"/><rect x="424" y="360" fill="#ff0c39"/><rect x="432" y="360" fill="#ff0a35"/><rect x="440" y="360" fill="#ff0732"/><rect x="448" y="360" fill="#ff052e"/><rect x="456" y="360" fill="#ff032b"/><rect x="464" y="360" fill="#ff0128"/><rect x="472" y="360" fill="#ff0025"/><rect x="480" y="360" fill="#ff0022"/><rect x="488" y="360" fill="#ff001f"/><rect x="168" y="368" fill="#0097ff"/><rect x="176" y="368" fill="#0095ff"/><rect x="184" y="368" fill="#0c93ff"/><rect x="192" y="368" fill="#1d91ff"/><rect x="200" y="368" fill="#2f8fff"/><rect x="208" y="368" fill="#418dff"/><rect x="216" y="368" fill="#548bff"/><rect x="224" y="368" fill="#6889ff"/><rect x="232" y="368" fill="#7d87ff"/><rect x="240" y="368" fill="#9284ff"/><rect x="248" y="368" fill="#a882ff"/><rect x="256" y="368" fill="#bf7fff"/><rect x="264" y="368" fill="#d77cff"/><rect x="272" y="368" fill="#f079ff"/><rect x="280" y="368" fill="#ff71f3"/><rect x="288" y="368" fill="#ff64dc"/><rect x="296" y="368" fill="#ff58c9"/><rect x="304" y="368" fill="#ff4eb8"/><rect x="312" y="368" fill="#ff46a8"/><rect x="320" y="368" fill="#ff3e9b"/><rect x="328" y="368" fill="#ff378f"/><rect x="336" y="368" fill="#ff3084"/><rect x="344" y="368" fill="#ff2b7b"/><rect x="352" y="368" fill="#ff2672"/><rect x="360" y="368" fill="#ff216a"/><rect x="368" y="368" fill="#ff1d63"/><rect x="376" y="368" fill="#ff195c"/><rect x="384" y="368" fill="#ff1556"/><rect x="392" y="368" fill="#ff1250"/><rect x="400" y="368" fill="#ff0e4a"/><rect x="408" y="368" fill="#ff0c45"/><rect x="416" y="368" fill="#ff0941"/><rect x="424" y="368" fill="#ff063d"/><rect x="432" y="368" fill="#ff0438"/><rect x="440" y="368" fill="#ff0235"/><rect x="448" y="368" fill="#ff0031"/><rect x="456" y="368" fill="#ff002e"/><rect x="464" y="368" fill="#ff002a"/><rect x="472" y="368" fill="#ff0027"/><rect x="168" y="376" fill="#0088ff"/><rect x="176" y="376" fill="#0286ff"/><rect x="184" y="376" fill="#1284ff"/><rect x="192" y="376" fill="#2382ff"/><rect x="200" y="376" fill="#3480ff"/><rect x="208" y="376" fill="#467dff"/><rect x="216" y="376" fill="#587bff"/><rect x="224" y="376" fill="#6b79ff"/><rect x="232" y="376" fill="#7f76ff"/><rect x="240" y="376" fill="#9473ff"/><rect x="248" y="376" fill="#aa71ff"/><rect x="256" y="376" fill="#c06eff"/><rect x="264" y="376" fill="#d76bff"/><rect x="272" y="376" fill="#ef68ff"/><rect x="280" y="376" fill="#ff60f5"/><rect x="288" y="376" fill="#ff55df"/><rect x="296" y="376" fill="#ff4bcb"/><rect x="304" y="376" fill="#ff42bb"/><rect x="312" y="376" fill="#ff3aac"/><rect x="320" y="376" fill="#ff339e"/><rect x="328" y="376" fill="#ff2d93"/><rect x="336" y="376" fill="#ff2788"/><rect x="344" y="376" fill="#ff227e"/><rect x="352" y="376" fill="#ff1d75"/><rect x="360" y="376" fill="#ff196d"/><rect x="368" y="376" fill="#ff1566"/><rect x="376" y="376" fill="#ff115f"/><rect x="384" y="376" fill="#ff0e59"/><rect x="392" y="376" fill="#ff0b53"/><rect x="400" y="376" fill="#ff084e"/><rect x="408" y="376" fill="#ff0549"/><rect x="416" y="376" fill="#ff0344"/><rect x="424" y="376" fill="#ff0140"/><rect x="432" y="376" fill="#ff003b"/><rect x="440" y="376" fill="#ff0038"/><rect x="448" y="376" fill="#ff0034"/><rect x="168" y="384" fill="#007aff"/><rect x="176" y="384" fill="#0878ff"/><rect x="184" y="384" fill="#1776ff"/><rect x="192" y="384" fill="#2873ff"/><rect x="200" y="384" fill="#3971ff"/><rect x="208" y="384" fill="#4a6eff"/><rect x="216" y="384" fill="#5c6cff"/><rect x="224" y="384" fill="#6f69ff"/><rect x="232" y="384" fill="#8266ff"/><rect x="240" y="384" fill="#9663ff"/><rect x="248" y="384" fill="#ab61ff"/><rect x="256" y="384" fill="#c05dff"/><rect x="264" y="384" fill="#d75aff"/><rect x="272" y="384" fill="#ee57ff"/><rect x="280" y="384" fill="#ff51f7"/><rect x="288" y="384" fill="#ff47e1"/><rect x="296" y="384" fill="#ff3dce"/><rect x="304" y="384" fill="#ff36bd"/><rect x="312" y="384" fill="#ff2faf"/><rect x="320" y="384" fill="#ff28a2"/><rect x="328" y="384" fill="#ff2396"/><rect x="336" y="384" fill="#ff1e8b"/><rect x="344" y="384" fill="#ff1981"/><rect x="352" y="384" fill="#ff1579"/><rect x="360" y="384" fill="#ff1171"/><rect x="368" y="384" fill="#ff0d69"/><rect x="376" y="384" fill="#ff0a62"/><rect x="384" y="384" fill="#ff075c"/><rect x="392" y="384" fill="#ff0456"/><rect x="400" y="384" fill="#ff0251"/><rect x="408" y="384" fill="#ff004c"/><rect x="416" y="384" fill="#ff0047"/><rect x="424" y="384" fill="#ff0043"/><rect x="432" y="384" fill="#ff003e"/><rect x="160" y="392" fill="#006fff"/><rect x="168" y="392" fill="#006dff"/><rect x="176" y="392" fill="#0d6aff"/><rect x="184" y="392" fill="#1d68ff"/><rect x="192" y="392" fill="#2d65ff"/><rect x="200" y="392" fill="#3d63ff"/><rect x="208" y="392" fill="#4e60ff"/><rect x="216" y="392" fill="#605dff"/><rect x="224" y="392" fill="#725bff"/><rect x="232" y="392" fill="#8458ff"/><rect x="240" y="392" fill="#9855ff"/><rect x="248" y="392" fill="#ac52ff"/><rect x="256" y="392" fill="#c14eff"/><rect x="264" y="392" fill="#d74bff"/><rect x="272" y="392" fill="#ed47ff"/><rect x="280" y="392" fill="#ff42f8"/><rect x="288" y="392" fill="#ff39e3"/><rect x="296" y="392" fill="#ff31d1"/><rect x="304" y="392" fill="#ff2ac0"/><rect x="312" y="392" fill="#ff24b2"/><rect x="320" y="392" fill="#ff1ea5"/><rect x="328" y="392" fill="#ff1999"/><rect x="336" y="392" fill="#ff158e"/><rect x="344" y="392" fill="#ff1185"/><rect x="352" y="392" fill="#ff0d7c"/><rect x="360" y="392" fill="#ff0974"/><rect x="368" y="392" fill="#ff066c"/><rect x="376" y="392" fill="#ff0366"/><rect x="384" y="392" fill="#ff015f"/><rect x="392" y="392" fill="#ff0059"/><rect x="400" y="392" fill="#ff0054"/><rect x="408" y="392" fill="#ff004f"/><rect x="160" y="400" fill="#0062ff"/><rect x="168" y="400" fill="#0460ff"/><rect x="176" y="400" fill="#135dff"/><rect x="184" y="400" fill="#225bff"/><rect x="192" y="400" fill="#3158ff"/><rect x="200" y="400" fill="#4156ff"/><rect x="208" y="400" fill="#5253ff"/><rect x="216" y="400" fill="#6350ff"/><rect x="224" y="400" fill="#744dff"/><rect x="232" y="400" fill="#874aff"/><rect x="240" y="400" fill="#9a47ff"/><rect x="248" y="400" fill="#ad43ff"/><rect x="256" y="400" fill="#c240ff"/><rect x="264" y="400" fill="#d73dff"/><rect x="272" y="400" fill="#ec39ff"/><rect x="280" y="400" fill="#ff34fa"/><rect x="288" y="400" fill="#ff2ce5"/><rect x="296" y="400" fill="#ff25d3"/><rect x="304" y="400" fill="#ff1fc3"/><rect x="312" y="400" fill="#ff1ab4"/><rect x="320" y="400" fill="#ff15a7"/><rect x="328" y="400" fill="#ff109c"/><rect x="336" y="400" fill="#ff0c91"/><rect x="344" y="400" fill="#ff0988"/><rect x="352" y="400" fill="#ff057f"/><rect x="360" y="400" fill="#ff0277"/><rect x="368" y="400" fill="#ff006f"/><rect x="376" y="400" fill="#ff0069"/><rect x="384" y="400" fill="#ff0062"/><rect x="392" y="400" fill="#ff005c"/><rect x="152" y="408" fill="#0059ff"/><rect x="160" y="408" fill="#0056ff"/><rect x="168" y="408" fill="#0954ff"/><rect x="176" y="408" fill="#1851ff"/><rect x="184" y="408" fill="#264fff"/><rect x="192" y="408" fill="#354cff"/><rect x="200" y="408" fill="#4549ff"/><rect x="208" y="408" fill="#5546ff"/><rect x="216" y="408" fill="#6643ff"/><rect x="224" y="408" fill="#7740ff"/><rect x="232" y="408" fill="#893dff"/><rect x="240" y="408" fill="#9b3aff"/><rect x="248" y="408" fill="#ae36ff"/><rect x="256" y="408" fill="#c233ff"/><rect x="264" y="408" fill="#d62fff"/><rect x="272" y="408" fill="#ec2bff"/><rect x="280" y="408" fill="#ff27fc"/><rect x="288" y="408" fill="#ff20e7"/><rect x="296" y="408" fill="#ff1ad5"/><rect x="304" y="408" fill="#ff15c5"/><rect x="312" y="408" fill="#ff10b7"/><rect x="320" y="408" fill="#ff0baa"/><rect x="328" y="408" fill="#ff079f"/><rect x="336" y="408" fill="#ff0494"/><rect x="344" y="408" fill="#ff018b"/><rect x="352" y="408" fill="#ff0082"/><rect x="360" y="408" fill="#ff007a"/><rect x="368" y="408" fill="#ff0072"/><rect x="152" y="416" fill="#004eff"/><rect x="160" y="416" fill="#014bff"/><rect x="168" y="416" fill="#0e49ff"/><rect x="176" y="416" fill="#1c46ff"/><rect x="184" y="416" fill="#2b43ff"/><rect x="192" y="416" fill="#3a40ff"/><rect x="200" y="416" fill="#493dff"/><rect x="208" y="416" fill="#593aff"/><rect x="216" y="416" fill="#6937ff"/><rect x="224" y="416" fill="#7a34ff"/><rect x="232" y="416" fill="#8b31ff"/><rect x="240" y="416" fill="#9d2dff"/><rect x="248" y="416" fill="#af2aff"/><rect x="256" y="416" fill="#c326ff"/><rect x="264" y="416" fill="#d622ff"/><rect x="272" y="416" fill="#eb1eff"/><rect x="280" y="416" fill="#ff1afd"/><rect x="288" y="416" fill="#ff14e9"/><rect x="296" y="416" fill="#ff0fd7"/><rect x="304" y="416" fill="#ff0ac8"/><rect x="312" y="416" fill="#ff06ba"/><rect x="320" y="416" fill="#ff02ad"/><rect x="328" y="416" fill="#ff00a1"/><rect x="336" y="416" fill="#ff0097"/><rect x="344" y="416" fill="#ff008e"/><rect x="352" y="416" fill="#ff0085"/><rect x="152" y="424" fill="#0043ff"/><rect x="160" y="424" fill="#0640ff"/><rect x="168" y="424" fill="#133eff"/><rect x="176" y="424" fill="#213bff"/><rect x="184" y="424" fill="#2f38ff"/><rect x="192" y="424" fill="#3d35ff"/><rect x="200" y="424" fill="#4c32ff"/><rect x="208" y="424" fill="#5c2fff"/><rect x="216" y="424" fill="#6c2cff"/><rect x="224" y="424" fill="#7c29ff"/><rect x="232" y="424" fill="#8d25ff"/><rect x="240" y="424" fill="#9e22ff"/><rect x="248" y="424" fill="#b01eff"/><rect x="256" y="424" fill="#c31aff"/><rect x="264" y="424" fill="#d616ff"/><rect x="272" y="424" fill="#ea12ff"/><rect x="280" y="424" fill="#ff0efe"/><rect x="288" y="424" fill="#ff09eb"/><rect x="296" y="424" fill="#ff05d9"/><rect x="304" y="424" fill="#ff01ca"/><rect x="312" y="424" fill="#ff00bc"/><rect x="320" y="424" fill="#ff00af"/><rect x="328" y="424" fill="#ff00a4"/><rect x="144" y="432" fill="#003bff"/><rect x="152" y="432" fill="#0039ff"/><rect x="160" y="432" fill="#0a36ff"/><rect x="168" y="432" fill="#1833ff"/><rect x="176" y="432" fill="#2531ff"/><rect x="184" y="432" fill="#332eff"/><rect x="192" y="432" fill="#412bff"/><rect x="200" y="432" fill="#5028ff"/><rect x="208" y="432" fill="#5f24ff"/><rect x="216" y="432" fill="#6e21ff"/><rect x="224" y="432" fill="#7e1eff"/><rect x="232" y="432" fill="#8f1aff"/><rect x="240" y="432" fill="#a017ff"/><rect x="248" y="432" fill="#b113ff"/><rect x="256" y="432" fill="#c30fff"/><rect x="264" y="432" fill="#d60bff"/><rect x="272" y="432" fill="#e907ff"/><rect x="280" y="432" fill="#fd03ff"/><rect x="288" y="432" fill="#ff00ed"/><rect x="296" y="432" fill="#ff00db"/><rect x="304" y="432" fill="#ff00cc"/><rect x="312" y="432" fill="#ff00be"/><rect x="144" y="440" fill="#0032ff"/><rect x="152" y="440" fill="#032fff"/><rect x="160" y="440" fill="#0f2cff"/><rect x="168" y="440" fill="#1c29ff"/><rect x="176" y="440" fill="#2927ff"/><rect x="184" y="440" fill="#3724ff"/><rect x="192" y="440" fill="#4521ff"/><rect x="200" y="440" fill="#531dff"/><rect x="208" y="440" fill="#621aff"/><rect x="216" y="440" fill="#7117ff"/><rect x="224" y="440" fill="#8013ff"/><rect x="232" y="440" fill="#9110ff"/><rect x="240" y="440" fill="#a10cff"/><rect x="248" y="440" fill="#b209ff"/><rect x="256" y="440" fill="#c405ff"/><rect x="264" y="440" fill="#d601ff"/><rect x="272" y="440" fill="#e900ff"/><rect x="280" y="440" fill="#fc00ff"/><rect x="288" y="440" fill="#ff00ee"/><rect x="144" y="448" fill="#0029ff"/><rect x="152" y="448" fill="#0726ff"/><rect x="160" y="448" fill="#1323ff"/><rect x="168" y="448" fill="#2020ff"/><rect x="176" y="448" fill="#2d1dff"/><rect x="184" y="448" fill="#3a1aff"/><rect x="192" y="448" fill="#4817ff"/><rect x="200" y="448" fill="#5614ff"/><rect x="208" y="448" fill="#6410ff"/><rect x="216" y="448" fill="#730dff"/><rect x="224" y="448" fill="#820aff"/><rect x="232" y="448" fill="#9206ff"/><rect x="240" y="448" fill="#a202ff"/><rect x="248" y="448" fill="#b300ff"/><rect x="256" y="448" fill="#c400ff"/><rect x="264" y="448" fill="#d600ff"/><rect x="272" y="448" fill="#e800ff"/><rect x="136" y="456" fill="#0022ff"/><rect x="144" y="456" fill="#0020ff"/><rect x="152" y="456" fill="#0b1dff"/><rect x="160" y="456" fill="#181aff"/><rect x="168" y="456" fill="#2417ff"/><rect x="176" y="456" fill="#3114ff"/><rect x="184" y="456" fill="#3e11ff"/><rect x="192" y="456" fill="#4b0eff"/><rect x="200" y="456" fill="#590bff"/><rect x="208" y="456" fill="#6707ff"/><rect x="216" y="456" fill="#7504ff"/><rect x="224" y="456" fill="#8400ff"/><rect x="232" y="456" fill="#9400ff"/><rect x="240" y="456" fill="#a400ff"/><rect x="248" y="456" fill="#b400ff"/><rect x="136" y="464" fill="#001aff"/><rect x="144" y="464" fill="#0417ff"/><rect x="152" y="464" fill="#1014ff"/><rect x="160" y="464" fill="#1c11ff"/><rect x="168" y="464" fill="#280fff"/><rect x="176" y="464" fill="#340bff"/><rect x="184" y="464" fill="#4108ff"/><rect x="192" y="464" fill="#4e05ff"/><rect x="200" y="464" fill="#5c02ff"/><rect x="208" y="464" fill="#6900ff"/><rect x="216" y="464" fill="#7800ff"/><rect x="224" y="464" fill="#8600ff"/><rect x="232" y="464" fill="#9500ff"/><rect x="128" y="472" fill="#0015ff"/><rect x="136" y="472" fill="#0012ff"/><rect x="144" y="472" fill="#080fff"/><rect x="152" y="472" fill="#140cff"/><rect x="160" y="472" fill="#1f09ff"/><rect x="168" y="472" fill="#2b06ff"/><rect x="176" y="472" fill="#3803ff"/><rect x="184" y="472" fill="#4400ff"/><rect x="192" y="472" fill="#5100ff"/><rect x="200" y="472" fill="#5e00ff"/><rect x="208" y="472" fill="#6c00ff"/><rect x="128" y="480" fill="#000dff"/><rect x="136" y="480" fill="#010aff"/><rect x="144" y="480" fill="#0c07ff"/><rect x="152" y="480" fill="#1804ff"/><rect x="160" y="480" fill="#2301ff"/><rect x="168" y="480" fill="#2f00ff"/><rect x="176" y="480" fill="#3b00ff"/><rect x="184" y="480" fill="#4700ff"/><rect x="192" y="480" fill="#5400ff"/><rect x="128" y="488" fill="#0005ff"/><rect x="136" y="488" fill="#0503ff"/><rect x="144" y="488" fill="#1000ff"/><rect x="152" y="488" fill="#1b00ff"/><rect x="160" y="488" fill="#2700ff"/><rect x="168" y="488" fill="#3200ff"/><rect x="120" y="496" fill="#0001ff"/><rect x="128" y="496" fill="#0000ff"/><rect x="136" y="496" fill="#0900ff"/><rect x="144" y="496" fill="#1400ff"/><rect x="120" y="504" fill="#0000ff"/><rect x="128" y="504" fill="#0300ff"/></g></g></svg>
<canvas id="cie" class="a" style="left:1161px;top:136px;" width="746" height="536"></canvas>
<div class="a" style="left:1155px;top:671.75px;width:6px;height:1.5px;background:#bbb;"></div>
<div class="t" style="left:1144.60px;top:664.40px;font-size:16px;color:#d8d8d8;transform:scaleX(1.1000);transform-origin:0 0;">0</div>
<div class="a" style="left:1160.75px;top:672px;width:1.5px;height:7px;background:#bbb;"></div>
<div class="t" style="left:1156.55px;top:682.40px;font-size:16px;color:#d8d8d8;transform:scaleX(1.1000);transform-origin:0 0;">0</div>
<div class="a" style="left:1155px;top:608.05px;width:6px;height:1.5px;background:#bbb;"></div>
<div class="t" style="left:1129.92px;top:600.70px;font-size:16px;color:#d8d8d8;transform:scaleX(1.1000);transform-origin:0 0;">0,1</div>
<div class="a" style="left:1249.45px;top:672px;width:1.5px;height:7px;background:#bbb;"></div>
<div class="t" style="left:1237.91px;top:682.40px;font-size:16px;color:#d8d8d8;transform:scaleX(1.1000);transform-origin:0 0;">0,1</div>
<div class="a" style="left:1155px;top:544.35px;width:6px;height:1.5px;background:#bbb;"></div>
<div class="t" style="left:1129.92px;top:537.00px;font-size:16px;color:#d8d8d8;transform:scaleX(1.1000);transform-origin:0 0;">0,2</div>
<div class="a" style="left:1338.15px;top:672px;width:1.5px;height:7px;background:#bbb;"></div>
<div class="t" style="left:1326.61px;top:682.40px;font-size:16px;color:#d8d8d8;transform:scaleX(1.1000);transform-origin:0 0;">0,2</div>
<div class="a" style="left:1155px;top:480.65px;width:6px;height:1.5px;background:#bbb;"></div>
<div class="t" style="left:1129.92px;top:473.30px;font-size:16px;color:#d8d8d8;transform:scaleX(1.1000);transform-origin:0 0;">0,3</div>
<div class="a" style="left:1426.85px;top:672px;width:1.5px;height:7px;background:#bbb;"></div>
<div class="t" style="left:1415.31px;top:682.40px;font-size:16px;color:#d8d8d8;transform:scaleX(1.1000);transform-origin:0 0;">0,3</div>
<div class="a" style="left:1155px;top:416.95px;width:6px;height:1.5px;background:#bbb;"></div>
<div class="t" style="left:1129.92px;top:409.60px;font-size:16px;color:#d8d8d8;transform:scaleX(1.1000);transform-origin:0 0;">0,4</div>
<div class="a" style="left:1515.55px;top:672px;width:1.5px;height:7px;background:#bbb;"></div>
<div class="t" style="left:1504.01px;top:682.40px;font-size:16px;color:#d8d8d8;transform:scaleX(1.1000);transform-origin:0 0;">0,4</div>
<div class="a" style="left:1155px;top:353.25px;width:6px;height:1.5px;background:#bbb;"></div>
<div class="t" style="left:1129.92px;top:345.90px;font-size:16px;color:#d8d8d8;transform:scaleX(1.1000);transform-origin:0 0;">0,5</div>
<div class="a" style="left:1604.25px;top:672px;width:1.5px;height:7px;background:#bbb;"></div>
<div class="t" style="left:1592.71px;top:682.40px;font-size:16px;color:#d8d8d8;transform:scaleX(1.1000);transform-origin:0 0;">0,5</div>
<div class="a" style="left:1155px;top:289.55px;width:6px;height:1.5px;background:#bbb;"></div>
<div class="t" style="left:1129.92px;top:282.20px;font-size:16px;color:#d8d8d8;transform:scaleX(1.1000);transform-origin:0 0;">0,6</div>
<div class="a" style="left:1692.95px;top:672px;width:1.5px;height:7px;background:#bbb;"></div>
<div class="t" style="left:1681.41px;top:682.40px;font-size:16px;color:#d8d8d8;transform:scaleX(1.1000);transform-origin:0 0;">0,6</div>
<div class="a" style="left:1155px;top:225.85px;width:6px;height:1.5px;background:#bbb;"></div>
<div class="t" style="left:1129.92px;top:218.50px;font-size:16px;color:#d8d8d8;transform:scaleX(1.1000);transform-origin:0 0;">0,7</div>
<div class="a" style="left:1781.65px;top:672px;width:1.5px;height:7px;background:#bbb;"></div>
<div class="t" style="left:1770.11px;top:682.40px;font-size:16px;color:#d8d8d8;transform:scaleX(1.1000);transform-origin:0 0;">0,7</div>
<div class="a" style="left:1155px;top:162.15px;width:6px;height:1.5px;background:#bbb;"></div>
<div class="t" style="left:1129.92px;top:154.80px;font-size:16px;color:#d8d8d8;transform:scaleX(1.1000);transform-origin:0 0;">0,8</div>
<div class="a" style="left:1870.35px;top:672px;width:1.5px;height:7px;background:#bbb;"></div>
<div class="t" style="left:1858.81px;top:682.40px;font-size:16px;color:#d8d8d8;transform:scaleX(1.1000);transform-origin:0 0;">0,8</div>
<div class="a" style="left:1644px;top:138px;width:262px;height:210px;background:#1c1c1c;"></div>
<div class="a" style="left:1647px;top:143px;width:252px;height:201px;border:1.5px solid #999;background:#888;"></div>
<svg style="left:1648.5px;top:144.5px;" width="251" height="200"><defs><linearGradient id="ig1" x1="0" y1="0" x2="1" y2="1"><stop offset="0" stop-color="#b8ff00"/><stop offset=".5" stop-color="#ffff10"/><stop offset="1" stop-color="#ffb800"/></linearGradient><linearGradient id="ig2" x1="0" y1="0" x2="1" y2="1"><stop offset="0" stop-color="#689800"/><stop offset=".55" stop-color="#9a9a00"/><stop offset="1" stop-color="#9a7000"/></linearGradient></defs><rect width="251" height="200" fill="url(#ig1)"/><polygon points="0,0 251,0 251,178.5 0,21" fill="url(#ig2)"/></svg>
<canvas id="ins" class="a" style="left:1648.5px;top:144.5px;" width="251" height="200"></canvas>
<svg style="left:0;top:0;" width="1920" height="1048"><rect x="1418.25" y="282.20" width="15.5" height="13.6" fill="none" stroke="#fff" stroke-width="2"/><rect x="1422.05" y="318.90" width="15.5" height="13.6" fill="none" stroke="#fff" stroke-width="2"/><rect x="1423.65" y="353.40" width="15.5" height="13.6" fill="none" stroke="#fff" stroke-width="2"/><rect x="1426.45" y="386.00" width="15.5" height="13.6" fill="none" stroke="#fff" stroke-width="2"/><rect x="1428.45" y="420.10" width="15.5" height="13.6" fill="none" stroke="#fff" stroke-width="2"/><rect x="1525.65" y="343.00" width="15.5" height="13.6" fill="none" stroke="#fff" stroke-width="2"/><rect x="1504.95" y="367.00" width="15.5" height="13.6" fill="none" stroke="#fff" stroke-width="2"/><rect x="1487.55" y="387.40" width="15.5" height="13.6" fill="none" stroke="#fff" stroke-width="2"/><rect x="1469.15" y="407.90" width="15.5" height="13.6" fill="none" stroke="#fff" stroke-width="2"/><rect x="1450.45" y="431.90" width="15.5" height="13.6" fill="none" stroke="#fff" stroke-width="2"/><rect x="1352.45" y="455.50" width="15.5" height="13.6" fill="none" stroke="#fff" stroke-width="2"/><rect x="1369.25" y="455.50" width="15.5" height="13.6" fill="none" stroke="#fff" stroke-width="2"/><rect x="1384.25" y="455.50" width="15.5" height="13.6" fill="none" stroke="#fff" stroke-width="2"/><rect x="1399.65" y="455.50" width="15.5" height="13.6" fill="none" stroke="#fff" stroke-width="2"/><rect x="1416.25" y="455.50" width="15.5" height="13.6" fill="none" stroke="#fff" stroke-width="2"/><rect x="1487.55" y="454.20" width="15.5" height="13.6" fill="none" stroke="#fff" stroke-width="2"/><rect x="1547.55" y="454.20" width="15.5" height="13.6" fill="none" stroke="#fff" stroke-width="2"/><rect x="1600.65" y="454.20" width="15.5" height="13.6" fill="none" stroke="#fff" stroke-width="2"/><rect x="1656.65" y="454.20" width="15.5" height="13.6" fill="none" stroke="#fff" stroke-width="2"/><rect x="1721.00" y="454.20" width="15.5" height="13.6" fill="none" stroke="#fff" stroke-width="2"/><rect x="1285.35" y="626.00" width="15.5" height="13.6" fill="none" stroke="#fff" stroke-width="2"/><rect x="1317.25" y="589.00" width="15.5" height="13.6" fill="none" stroke="#fff" stroke-width="2"/><rect x="1345.75" y="556.50" width="15.5" height="13.6" fill="none" stroke="#fff" stroke-width="2"/><rect x="1373.55" y="524.20" width="15.5" height="13.6" fill="none" stroke="#fff" stroke-width="2"/><rect x="1401.95" y="490.20" width="15.5" height="13.6" fill="none" stroke="#fff" stroke-width="2"/><rect x="1433.35" y="478.20" width="15.5" height="13.6" fill="none" stroke="#fff" stroke-width="2"/><rect x="1434.55" y="501.60" width="15.5" height="13.6" fill="none" stroke="#fff" stroke-width="2"/><rect x="1434.55" y="520.80" width="15.5" height="13.6" fill="none" stroke="#fff" stroke-width="2"/><rect x="1436.25" y="543.10" width="15.5" height="13.6" fill="none" stroke="#fff" stroke-width="2"/><rect x="1437.45" y="567.20" width="15.5" height="13.6" fill="none" stroke="#fff" stroke-width="2"/><rect x="1432.4" y="455.3" width="14" height="14" fill="none" stroke="#000" stroke-width="2.2"/><ellipse cx="1475.5" cy="298" rx="4.7" ry="4.3" fill="#50b050" stroke="#000" stroke-width="1.3"/><ellipse cx="1476.3" cy="293.6" rx="4.7" ry="4.3" fill="#00c000" stroke="#000" stroke-width="1.3"/><ellipse cx="1464.2" cy="333.7" rx="4.7" ry="4.3" fill="#60b060" stroke="#000" stroke-width="1.3"/><ellipse cx="1448.3" cy="386.5" rx="4.7" ry="4.3" fill="#70a870" stroke="#000" stroke-width="1.3"/><ellipse cx="1437.2" cy="437.2" rx="4.7" ry="4.3" fill="#90b090" stroke="#000" stroke-width="1.3"/><ellipse cx="1539.4" cy="342.1" rx="4.7" ry="4.3" fill="#c0b800" stroke="#000" stroke-width="1.3"/><ellipse cx="1512.3" cy="373.8" rx="4.7" ry="4.3" fill="#c0c050" stroke="#000" stroke-width="1.3"/><ellipse cx="1491.3" cy="400.3" rx="4.7" ry="4.3" fill="#c0b870" stroke="#000" stroke-width="1.3"/><ellipse cx="1469.4" cy="425.5" rx="4.7" ry="4.3" fill="#b8b888" stroke="#000" stroke-width="1.3"/><ellipse cx="1447.3" cy="448.8" rx="4.7" ry="4.3" fill="#b0b098" stroke="#000" stroke-width="1.3"/><ellipse cx="1382.5" cy="474.2" rx="4.7" ry="4.3" fill="#60b0b0" stroke="#000" stroke-width="1.3"/><ellipse cx="1378.8" cy="474.4" rx="4.7" ry="4.3" fill="#10b0b0" stroke="#000" stroke-width="1.3"/><ellipse cx="1392.5" cy="473" rx="4.7" ry="4.3" fill="#80b8b8" stroke="#000" stroke-width="1.3"/><ellipse cx="1408" cy="471.3" rx="4.7" ry="4.3" fill="#90b0b0" stroke="#000" stroke-width="1.3"/><ellipse cx="1418.8" cy="470" rx="4.7" ry="4.3" fill="#a0b8b0" stroke="#000" stroke-width="1.3"/><ellipse cx="1428.6" cy="471.3" rx="4.7" ry="4.3" fill="#ffffff" stroke="#000" stroke-width="1.3"/><ellipse cx="1473.6" cy="465.3" rx="4.7" ry="4.3" fill="#b08888" stroke="#000" stroke-width="1.3"/><ellipse cx="1544.4" cy="456.4" rx="4.7" ry="4.3" fill="#c06868" stroke="#000" stroke-width="1.3"/><ellipse cx="1603.4" cy="451" rx="4.7" ry="4.3" fill="#c05858" stroke="#000" stroke-width="1.3"/><ellipse cx="1646.3" cy="445.8" rx="4.7" ry="4.3" fill="#c04040" stroke="#000" stroke-width="1.3"/><ellipse cx="1661.6" cy="443.4" rx="4.7" ry="4.3" fill="#c00000" stroke="#000" stroke-width="1.3"/><ellipse cx="1401.4" cy="501" rx="4.7" ry="4.3" fill="#9898c0" stroke="#000" stroke-width="1.3"/><ellipse cx="1370.5" cy="534.8" rx="4.7" ry="4.3" fill="#8080c0" stroke="#000" stroke-width="1.3"/><ellipse cx="1340.5" cy="568" rx="4.7" ry="4.3" fill="#6060c0" stroke="#000" stroke-width="1.3"/><ellipse cx="1317.4" cy="594.2" rx="4.7" ry="4.3" fill="#5050c0" stroke="#000" stroke-width="1.3"/><ellipse cx="1306.3" cy="606.3" rx="4.7" ry="4.3" fill="#0000b0" stroke="#000" stroke-width="1.3"/><ellipse cx="1425.5" cy="489" rx="4.7" ry="4.3" fill="#c0a8b8" stroke="#000" stroke-width="1.3"/><ellipse cx="1417.4" cy="514.4" rx="4.7" ry="4.3" fill="#c090b8" stroke="#000" stroke-width="1.3"/><ellipse cx="1411.4" cy="537.9" rx="4.7" ry="4.3" fill="#c078c0" stroke="#000" stroke-width="1.3"/><ellipse cx="1406.6" cy="556.8" rx="4.7" ry="4.3" fill="#c060c0" stroke="#000" stroke-width="1.3"/><ellipse cx="1403.3" cy="562" rx="4.7" ry="4.3" fill="#c000c0" stroke="#000" stroke-width="1.3"/><rect x="1764.55" y="236.9" width="15.5" height="13.6" fill="none" stroke="#fff" stroke-width="2"/><ellipse cx="1811.1" cy="203.8" rx="4.6" ry="4.3" fill="#c8c000" stroke="#000" stroke-width="1.3"/></svg>
<script>
(function(){
var L=[[0.17411,0.00496],[0.1741,0.00496],[0.17409,0.00497],[0.17407,0.00497],[0.17406,0.00498],[0.17403,0.00498],[0.17401,0.00498],[0.17398,0.00497],[0.17395,0.00496],[0.17391,0.00495],[0.17388,0.00494],[0.17384,0.00493],[0.1738,0.00492],[0.17376,0.00492],[0.17372,0.00492],[0.17368,0.00492],[0.17364,0.00493],[0.1736,0.00493],[0.17356,0.00492],[0.17352,0.00491],[0.17349,0.00489],[0.17345,0.00486],[0.17342,0.00484],[0.17338,0.00482],[0.17334,0.0048],[0.17329,0.00479],[0.17325,0.00478],[0.17319,0.00478],[0.17314,0.00478],[0.17308,0.00478],[0.17302,0.00478],[0.17295,0.00478],[0.17288,0.00478],[0.17281,0.00479],[0.17273,0.00479],[0.17266,0.0048],[0.17258,0.0048],[0.1725,0.0048],[0.17243,0.0048],[0.17235,0.0048],[0.17227,0.0048],[0.17218,0.00481],[0.17209,0.00483],[0.17199,0.00486],[0.17189,0.00489],[0.17179,0.00492],[0.17168,0.00497],[0.17155,0.00503],[0.17141,0.0051],[0.17125,0.00519],[0.17108,0.00528],[0.1709,0.00539],[0.17071,0.00551],[0.17051,0.00565],[0.1703,0.00579],[0.17009,0.00594],[0.16987,0.00611],[0.16964,0.00628],[0.16941,0.00647],[0.16915,0.00668],[0.16888,0.0069],[0.16859,0.00714],[0.16828,0.00739],[0.16796,0.00766],[0.16762,0.00794],[0.16727,0.00824],[0.1669,0.00856],[0.16652,0.0089],[0.16614,0.00926],[0.16574,0.00963],[0.16532,0.01002],[0.16488,0.01043],[0.16441,0.01086],[0.16392,0.0113],[0.16341,0.01175],[0.16288,0.01222],[0.16232,0.01272],[0.16173,0.01324],[0.1611,0.01379],[0.16044,0.01437],[0.15974,0.01498],[0.15902,0.01562],[0.15826,0.01628],[0.15747,0.01698],[0.15664,0.01771],[0.15578,0.01846],[0.1549,0.01923],[0.15398,0.02003],[0.15302,0.02088],[0.15203,0.02178],[0.15099,0.02274],[0.14991,0.02375],[0.1488,0.0248],[0.14765,0.0259],[0.14646,0.02707],[0.14523,0.02833],[0.14396,0.0297],[0.14267,0.03112],[0.14135,0.03257],[0.14,0.0341],[0.13859,0.03579],[0.1371,0.0377],[0.1355,0.03988],[0.13381,0.04229],[0.13204,0.04487],[0.13019,0.04766],[0.12825,0.05072],[0.12623,0.05408],[0.12412,0.0578],[0.12192,0.0618],[0.11965,0.06603],[0.11729,0.07057],[0.11483,0.0755],[0.11227,0.0809],[0.10959,0.08684],[0.10681,0.09325],[0.10393,0.10006],[0.10094,0.10733],[0.09785,0.11515],[0.09463,0.12358],[0.09129,0.1327],[0.08778,0.14245],[0.08411,0.15276],[0.08031,0.16368],[0.07645,0.17528],[0.07257,0.18761],[0.06871,0.20072],[0.06485,0.21464],[0.06094,0.22933],[0.05701,0.24474],[0.05309,0.26085],[0.0492,0.27761],[0.04539,0.29498],[0.04158,0.31315],[0.03773,0.33219],[0.03392,0.35187],[0.03023,0.372],[0.02671,0.39235],[0.02346,0.4127],[0.0204,0.4333],[0.01746,0.45436],[0.01471,0.47564],[0.01221,0.49691],[0.01001,0.51791],[0.00817,0.53842],[0.00665,0.5586],[0.00539,0.57869],[0.00443,0.59852],[0.00383,0.61792],[0.00362,0.63674],[0.00386,0.65482],[0.00453,0.67232],[0.00558,0.68941],[0.00703,0.70592],[0.00889,0.72166],[0.01117,0.73648],[0.01387,0.75019],[0.01705,0.7629],[0.0207,0.77477],[0.02477,0.7857],[0.02919,0.79562],[0.03391,0.80442],[0.03885,0.81202],[0.0441,0.81831],[0.04973,0.82333],[0.05565,0.82725],[0.06177,0.8302],[0.06802,0.83233],[0.0743,0.8338],[0.08068,0.83438],[0.08723,0.83392],[0.09391,0.83264],[0.10066,0.83077],[0.10743,0.82855],[0.11416,0.82621],[0.12091,0.8236],[0.12772,0.82052],[0.13455,0.81707],[0.14135,0.8134],[0.14809,0.80962],[0.15472,0.80586],[0.16124,0.80208],[0.16767,0.79818],[0.17404,0.79418],[0.18035,0.79008],[0.18663,0.78589],[0.19288,0.78163],[0.19909,0.77729],[0.20525,0.77286],[0.21137,0.76834],[0.21747,0.76374],[0.22355,0.75907],[0.22962,0.75433],[0.23568,0.74951],[0.24173,0.7446],[0.24776,0.73962],[0.25377,0.73457],[0.25978,0.72947],[0.26578,0.72432],[0.27177,0.71912],[0.27775,0.71385],[0.28371,0.70853],[0.28968,0.70316],[0.29564,0.69775],[0.3016,0.69231],[0.30756,0.68683],[0.31353,0.6813],[0.31949,0.67573],[0.32544,0.67013],[0.3314,0.6645],[0.33736,0.65885],[0.34332,0.65318],[0.34928,0.64747],[0.35524,0.64174],[0.36119,0.63598],[0.36715,0.63022],[0.3731,0.62445],[0.37905,0.61867],[0.385,0.61287],[0.39095,0.60706],[0.39689,0.60124],[0.40282,0.59543],[0.40874,0.58961],[0.41465,0.58379],[0.42056,0.57797],[0.42646,0.57214],[0.43234,0.56632],[0.43821,0.5605],[0.44406,0.55471],[0.44989,0.54893],[0.45571,0.54314],[0.46152,0.53737],[0.4673,0.53162],[0.47305,0.5259],[0.47877,0.5202],[0.48446,0.51453],[0.49014,0.50888],[0.49578,0.50325],[0.50139,0.49765],[0.50696,0.4921],[0.51249,0.48659],[0.51798,0.48112],[0.52343,0.47569],[0.52885,0.4703],[0.53422,0.46495],[0.53954,0.45966],[0.54479,0.45443],[0.54999,0.44925],[0.55515,0.44413],[0.56025,0.43905],[0.56529,0.43404],[0.57026,0.4291],[0.57515,0.42423],[0.57997,0.41942],[0.58474,0.41467],[0.58943,0.40998],[0.59404,0.40538],[0.59854,0.40088],[0.60293,0.3965],[0.60719,0.39225],[0.61135,0.38811],[0.6154,0.38408],[0.61936,0.38014],[0.62323,0.37628],[0.62704,0.37249],[0.63078,0.36876],[0.63446,0.3651],[0.63805,0.36153],[0.64155,0.35804],[0.64494,0.35466],[0.64823,0.35139],[0.6514,0.34824],[0.65446,0.34521],[0.65742,0.34227],[0.66029,0.33943],[0.66307,0.33668],[0.66576,0.33401],[0.66837,0.33142],[0.67088,0.32892],[0.6733,0.32651],[0.67564,0.32418],[0.6779,0.32193],[0.68008,0.31975],[0.68218,0.31766],[0.68419,0.31565],[0.68612,0.31372],[0.68797,0.31186],[0.68976,0.31007],[0.6915,0.30834],[0.69317,0.30668],[0.69477,0.30509],[0.69631,0.30356],[0.69779,0.30209],[0.69922,0.30068],[0.70061,0.2993],[0.70195,0.29797],[0.70322,0.2967],[0.70445,0.29548],[0.70564,0.2943],[0.70679,0.29315],[0.70792,0.29203],[0.70902,0.29093],[0.71009,0.28987],[0.71112,0.28884],[0.71212,0.28784],[0.71309,0.28687],[0.71403,0.28593],[0.71494,0.28502],[0.71582,0.28414],[0.71666,0.2833],[0.71748,0.28248],[0.71827,0.28169],[0.71903,0.28093],[0.71977,0.2802],[0.72048,0.27949],[0.72116,0.27881],[0.72181,0.27816],[0.72244,0.27754],[0.72303,0.27695],[0.72359,0.27639],[0.72412,0.27587],[0.72462,0.27537],[0.72509,0.2749],[0.72555,0.27445],[0.72599,0.27401],[0.72642,0.27359],[0.72682,0.27318],[0.72721,0.27279],[0.72758,0.27242],[0.72793,0.27207],[0.72827,0.27173],[0.72859,0.27141],[0.7289,0.2711],[0.72919,0.27081],[0.72947,0.27053],[0.72973,0.27027],[0.72997,0.27003],[0.73019,0.26981],[0.73039,0.26961],[0.73058,0.26942],[0.73075,0.26925],[0.73092,0.26908],[0.73109,0.26891],[0.73125,0.26875],[0.73139,0.26861],[0.73152,0.26848],[0.73166,0.26834],[0.73181,0.26819],[0.73199,0.26801],[0.7322,0.2678],[0.73243,0.26757],[0.73268,0.26732],[0.73294,0.26706],[0.73318,0.26682],[0.73342,0.26658],[0.73366,0.26634],[0.7339,0.2661],[0.73414,0.26586],[0.73437,0.26563],[0.73455,0.26545],[0.73469,0.26531]];
function col(x,y,out){
  var X=x/y, Z=(1-x-y)/y;
  var r= 3.2406*X-1.5372-0.4986*Z, g=-0.9689*X+1.8758+0.0415*Z, b=0.0557*X-0.2040+1.0570*Z;
  var ins=(r>=0&&g>=0&&b>=0);
  if(r<0)r=0; if(g<0)g=0; if(b<0)b=0;
  var m=Math.max(r,g,b)||1; r/=m; g/=m; b/=m;
  var gm=1/1.0;
  r=Math.pow(r,gm); g=Math.pow(g,gm); b=Math.pow(b,gm);
  if(!ins){ var k=0.6; r*=k; g*=k; b*=k; }
  out[0]=r*255; out[1]=g*255; out[2]=b*255;
}
function draw(id, W, H, fx, fy, clip){
  var cv=document.getElementById(id); if(!cv||!cv.getContext) return;
  var ctx=cv.getContext('2d');
  var off=document.createElement('canvas'); off.width=W; off.height=H;
  var oc=off.getContext('2d'); var im=oc.createImageData(W,H); var d=im.data; var o=[0,0,0];
  for(var j=0;j<H;j++){ var yy=fy(j+0.5); for(var i=0;i<W;i++){ var xx=fx(i+0.5); var p=(j*W+i)*4;
    if(yy<=0.001){d[p+3]=0;continue;} col(xx,yy,o); d[p]=o[0]; d[p+1]=o[1]; d[p+2]=o[2]; d[p+3]=255; } }
  oc.putImageData(im,0,0);
  ctx.clearRect(0,0,W,H);
  if(clip){ ctx.save(); ctx.beginPath(); for(var k=0;k<L.length;k++){ var px=(L[k][0]*887), py=(536.5-L[k][1]*637); if(k==0)ctx.moveTo(px,py); else ctx.lineTo(px,py);} ctx.closePath(); ctx.clip(); }
  ctx.drawImage(off,0,0);
  if(clip) ctx.restore();
}
draw('cie',746,536,function(i){return i/887;},function(j){return (536.5-j)/637;},true);
var fb=document.getElementById('fbsvg'); if(fb) fb.style.display='none';
draw('ins',251,200,function(i){return 0.4193+(i+1648.5-1772.3)/5039;},function(j){return 0.5053-(j+144.5-243.7)/3990;},false);
})();
</script>
<div class="t" style="left:15.93px;top:749.46px;font-size:32.4px;color:#f0f0f0;transform:scaleX(1.0697);transform-origin:0 0;">Current Reading</div>
<div class="t" style="left:17.00px;top:801.28px;font-size:25.9px;color:#f0f0f0;transform:scaleX(1.1011);transform-origin:0 0;">x: 0,427</div>
<div class="t" style="left:17.00px;top:844.78px;font-size:25.9px;color:#f0f0f0;transform:scaleX(1.1025);transform-origin:0 0;">y: 0,5153</div>
<div class="t" style="left:17.00px;top:889.28px;font-size:25.9px;color:#f0f0f0;transform:scaleX(1.1009);transform-origin:0 0;">fL: 49,54</div>
<div class="t" style="left:15.84px;top:933.28px;font-size:25.9px;color:#f0f0f0;transform:scaleX(1.1631);transform-origin:0 0;">cd/m²: 169,75</div>
<div class="a" style="left:406px;top:752px;width:291px;height:195.5px;background:#232323;border:1.5px solid #8f8f8f;"></div>
<div class="a" style="left:407px;top:773.05px;width:291px;height:1.5px;background:#8f8f8f;"></div>
<div class="a" style="left:401px;top:773.05px;width:6px;height:1.5px;background:#8f8f8f;"></div>
<div class="t" style="left:380.27px;top:766.12px;font-size:15.5px;color:#d0d0d0;transform:scaleX(1.1200);transform-origin:0 0;">40</div>
<div class="a" style="left:407px;top:812.55px;width:291px;height:1.5px;background:#8f8f8f;"></div>
<div class="a" style="left:401px;top:812.55px;width:6px;height:1.5px;background:#8f8f8f;"></div>
<div class="t" style="left:380.27px;top:805.62px;font-size:15.5px;color:#d0d0d0;transform:scaleX(1.1200);transform-origin:0 0;">20</div>
<div class="a" style="left:407px;top:852.05px;width:291px;height:1.5px;background:#8f8f8f;"></div>
<div class="a" style="left:401px;top:852.05px;width:6px;height:1.5px;background:#8f8f8f;"></div>
<div class="t" style="left:389.92px;top:845.12px;font-size:15.5px;color:#d0d0d0;transform:scaleX(1.1200);transform-origin:0 0;">0</div>
<div class="a" style="left:407px;top:891.55px;width:291px;height:1.5px;background:#8f8f8f;"></div>
<div class="a" style="left:401px;top:891.55px;width:6px;height:1.5px;background:#8f8f8f;"></div>
<div class="t" style="left:374.48px;top:884.62px;font-size:15.5px;color:#d0d0d0;transform:scaleX(1.1200);transform-origin:0 0;">-20</div>
<div class="a" style="left:407px;top:931.05px;width:291px;height:1.5px;background:#8f8f8f;"></div>
<div class="a" style="left:401px;top:931.05px;width:6px;height:1.5px;background:#8f8f8f;"></div>
<div class="t" style="left:374.48px;top:924.12px;font-size:15.5px;color:#d0d0d0;transform:scaleX(1.1200);transform-origin:0 0;">-40</div>
<div class="a" style="left:406px;top:948px;width:1.5px;height:7px;background:#8f8f8f;"></div>
<div class="a" style="left:697px;top:948px;width:1.5px;height:7px;background:#8f8f8f;"></div>
<div class="t" style="left:489.52px;top:734.40px;font-size:16px;color:#d8d8d8;transform:scaleX(0.9788);transform-origin:0 0;">RGB Balance</div>
<div class="t" style="left:532.15px;top:953.40px;font-size:16px;color:#d8d8d8;">100%</div>
<div class="a" style="left:436.5px;top:852px;width:78.0px;height:16px;background:#000;"></div><div class="a" style="left:438.5px;top:854px;width:74.0px;height:12px;background:linear-gradient(#ff1818,#ff0000 40%,#b00000);"></div>
<div class="a" style="left:513.5px;top:852px;width:79.5px;height:17.5px;background:#000;"></div><div class="a" style="left:515.5px;top:854px;width:75.5px;height:13.5px;background:linear-gradient(#008400,#007a00 50%,#005000);"></div>
<div class="a" style="left:592px;top:852px;width:79.5px;height:84.5px;background:#000;"></div><div class="a" style="left:594px;top:854px;width:75.5px;height:80.5px;background:linear-gradient(#4a4aff,#0000ff 20%,#0000f0 65%,#000070);"></div>
<div class="a" style="left:723px;top:728px;width:830px;height:17px;background:#2e2e2e;"></div>
<div class="a" style="left:723px;top:745px;width:830px;height:16px;background:#121212;"></div>
<div class="a" style="left:723px;top:728px;width:23px;height:33px;background:#000;"></div>
<div class="t" style="left:935.64px;top:734.00px;font-size:20px;color:#ffffff;transform:scaleX(1.1644);transform-origin:0 0;-webkit-text-stroke:0.45px #fff;">20%</div>
<div class="t" style="left:1061.30px;top:734.00px;font-size:20px;color:#ffffff;transform:scaleX(1.1430);transform-origin:0 0;-webkit-text-stroke:0.45px #fff;">40%</div>
<div class="t" style="left:1184.73px;top:734.00px;font-size:20px;color:#ffffff;transform:scaleX(1.1721);transform-origin:0 0;-webkit-text-stroke:0.45px #fff;">60%</div>
<div class="t" style="left:1310.30px;top:734.00px;font-size:20px;color:#ffffff;transform:scaleX(1.1430);transform-origin:0 0;-webkit-text-stroke:0.45px #fff;">80%</div>
<div class="t" style="left:1434.13px;top:734.00px;font-size:20px;color:#ffffff;transform:scaleX(1.1714);transform-origin:0 0;-webkit-text-stroke:0.45px #fff;">100%</div>
<div class="a" style="left:746px;top:760.80px;width:807px;height:31.2px;background:#3f3f3f;"></div>
<div class="a" style="left:723px;top:760.80px;width:23px;height:31.2px;background:#262626;"></div>
<div class="t" style="left:753.00px;top:766.94px;font-size:20.3px;color:#f2f2f2;transform:scaleX(1.1549);transform-origin:0 0;">x: CIE31</div>
<div class="t" style="left:936.80px;top:766.94px;font-size:20.3px;color:#f2f2f2;transform:scaleX(1.2680);transform-origin:0 0;-webkit-text-stroke:0.2px #f2f2f2;">0,3230</div>
<div class="t" style="left:1061.30px;top:766.94px;font-size:20.3px;color:#f2f2f2;transform:scaleX(1.2680);transform-origin:0 0;-webkit-text-stroke:0.2px #f2f2f2;">0,3460</div>
<div class="t" style="left:1185.90px;top:766.94px;font-size:20.3px;color:#f2f2f2;transform:scaleX(1.2680);transform-origin:0 0;-webkit-text-stroke:0.2px #f2f2f2;">0,3710</div>
<div class="t" style="left:1310.30px;top:766.94px;font-size:20.3px;color:#f2f2f2;transform:scaleX(1.2680);transform-origin:0 0;-webkit-text-stroke:0.2px #f2f2f2;">0,3970</div>
<div class="t" style="left:1435.30px;top:766.94px;font-size:20.3px;color:#f2f2f2;transform:scaleX(1.2680);transform-origin:0 0;-webkit-text-stroke:0.2px #f2f2f2;">0,4270</div>
<div class="a" style="left:746px;top:791.85px;width:807px;height:31.2px;background:#808080;"></div>
<div class="a" style="left:723px;top:791.85px;width:23px;height:31.2px;background:#222;"></div>
<div class="t" style="left:753.00px;top:797.99px;font-size:20.3px;color:#f2f2f2;transform:scaleX(1.1549);transform-origin:0 0;">y: CIE31</div>
<div class="t" style="left:936.80px;top:797.99px;font-size:20.3px;color:#f2f2f2;transform:scaleX(1.2680);transform-origin:0 0;-webkit-text-stroke:0.2px #f2f2f2;">0,3491</div>
<div class="t" style="left:1061.30px;top:797.99px;font-size:20.3px;color:#f2f2f2;transform:scaleX(1.2680);transform-origin:0 0;-webkit-text-stroke:0.2px #f2f2f2;">0,3858</div>
<div class="t" style="left:1185.90px;top:797.99px;font-size:20.3px;color:#f2f2f2;transform:scaleX(1.2680);transform-origin:0 0;-webkit-text-stroke:0.2px #f2f2f2;">0,4244</div>
<div class="t" style="left:1310.30px;top:797.99px;font-size:20.3px;color:#f2f2f2;transform:scaleX(1.2680);transform-origin:0 0;-webkit-text-stroke:0.2px #f2f2f2;">0,4665</div>
<div class="t" style="left:1435.30px;top:797.99px;font-size:20.3px;color:#f2f2f2;transform:scaleX(1.2680);transform-origin:0 0;-webkit-text-stroke:0.2px #f2f2f2;">0,5153</div>
<div class="a" style="left:746px;top:822.90px;width:807px;height:31.2px;background:#3f3f3f;"></div>
<div class="a" style="left:723px;top:822.90px;width:23px;height:31.2px;background:#262626;"></div>
<div class="t" style="left:753.00px;top:829.04px;font-size:20.3px;color:#f2f2f2;transform:scaleX(1.0357);transform-origin:0 0;">Y</div>
<div class="t" style="left:935.52px;top:829.04px;font-size:20.3px;color:#f2f2f2;transform:scaleX(1.2771);transform-origin:0 0;-webkit-text-stroke:0.2px #f2f2f2;">197,8514</div>
<div class="t" style="left:1060.02px;top:829.04px;font-size:20.3px;color:#f2f2f2;transform:scaleX(1.2771);transform-origin:0 0;-webkit-text-stroke:0.2px #f2f2f2;">189,6946</div>
<div class="t" style="left:1184.62px;top:829.04px;font-size:20.3px;color:#f2f2f2;transform:scaleX(1.2771);transform-origin:0 0;-webkit-text-stroke:0.2px #f2f2f2;">183,6213</div>
<div class="t" style="left:1309.02px;top:829.04px;font-size:20.3px;color:#f2f2f2;transform:scaleX(1.2771);transform-origin:0 0;-webkit-text-stroke:0.2px #f2f2f2;">177,5444</div>
<div class="t" style="left:1434.02px;top:829.04px;font-size:20.3px;color:#f2f2f2;transform:scaleX(1.2771);transform-origin:0 0;-webkit-text-stroke:0.2px #f2f2f2;">169,7468</div>
<div class="a" style="left:746px;top:853.95px;width:807px;height:31.2px;background:#808080;"></div>
<div class="a" style="left:723px;top:853.95px;width:23px;height:31.2px;background:#222;"></div>
<div class="t" style="left:753.00px;top:860.09px;font-size:20.3px;color:#f2f2f2;transform:scaleX(1.2326);transform-origin:0 0;">Target x:CIE31</div>
<div class="t" style="left:936.80px;top:860.09px;font-size:20.3px;color:#f2f2f2;transform:scaleX(1.2680);transform-origin:0 0;-webkit-text-stroke:0.2px #f2f2f2;">0,3344</div>
<div class="t" style="left:1061.30px;top:860.09px;font-size:20.3px;color:#f2f2f2;transform:scaleX(1.2680);transform-origin:0 0;-webkit-text-stroke:0.2px #f2f2f2;">0,3564</div>
<div class="t" style="left:1185.90px;top:860.09px;font-size:20.3px;color:#f2f2f2;transform:scaleX(1.2680);transform-origin:0 0;-webkit-text-stroke:0.2px #f2f2f2;">0,3773</div>
<div class="t" style="left:1310.30px;top:860.09px;font-size:20.3px;color:#f2f2f2;transform:scaleX(1.2680);transform-origin:0 0;-webkit-text-stroke:0.2px #f2f2f2;">0,3969</div>
<div class="t" style="left:1435.30px;top:860.09px;font-size:20.3px;color:#f2f2f2;transform:scaleX(1.2680);transform-origin:0 0;-webkit-text-stroke:0.2px #f2f2f2;">0,4193</div>
<div class="a" style="left:746px;top:885.00px;width:807px;height:31.2px;background:#3f3f3f;"></div>
<div class="a" style="left:723px;top:885.00px;width:23px;height:31.2px;background:#262626;"></div>
<div class="t" style="left:753.00px;top:891.14px;font-size:20.3px;color:#f2f2f2;transform:scaleX(1.2401);transform-origin:0 0;">Target y:CIE31</div>
<div class="t" style="left:936.80px;top:891.14px;font-size:20.3px;color:#f2f2f2;transform:scaleX(1.2680);transform-origin:0 0;-webkit-text-stroke:0.2px #f2f2f2;">0,3648</div>
<div class="t" style="left:1061.30px;top:891.14px;font-size:20.3px;color:#f2f2f2;transform:scaleX(1.2680);transform-origin:0 0;-webkit-text-stroke:0.2px #f2f2f2;">0,4013</div>
<div class="t" style="left:1185.90px;top:891.14px;font-size:20.3px;color:#f2f2f2;transform:scaleX(1.2680);transform-origin:0 0;-webkit-text-stroke:0.2px #f2f2f2;">0,4358</div>
<div class="t" style="left:1310.30px;top:891.14px;font-size:20.3px;color:#f2f2f2;transform:scaleX(1.2680);transform-origin:0 0;-webkit-text-stroke:0.2px #f2f2f2;">0,4682</div>
<div class="t" style="left:1435.30px;top:891.14px;font-size:20.3px;color:#f2f2f2;transform:scaleX(1.2680);transform-origin:0 0;-webkit-text-stroke:0.2px #f2f2f2;">0,5053</div>
<div class="a" style="left:746px;top:916.05px;width:807px;height:31.2px;background:#808080;"></div>
<div class="a" style="left:723px;top:916.05px;width:23px;height:31.2px;background:#222;"></div>
<div class="t" style="left:753.00px;top:922.19px;font-size:20.3px;color:#f2f2f2;transform:scaleX(1.2710);transform-origin:0 0;">Target Y</div>
<div class="t" style="left:935.52px;top:922.19px;font-size:20.3px;color:#f2f2f2;transform:scaleX(1.2771);transform-origin:0 0;-webkit-text-stroke:0.2px #f2f2f2;">196,5737</div>
<div class="t" style="left:1060.02px;top:922.19px;font-size:20.3px;color:#f2f2f2;transform:scaleX(1.2771);transform-origin:0 0;-webkit-text-stroke:0.2px #f2f2f2;">193,1233</div>
<div class="t" style="left:1184.62px;top:922.19px;font-size:20.3px;color:#f2f2f2;transform:scaleX(1.2771);transform-origin:0 0;-webkit-text-stroke:0.2px #f2f2f2;">190,4721</div>
<div class="t" style="left:1309.02px;top:922.19px;font-size:20.3px;color:#f2f2f2;transform:scaleX(1.2771);transform-origin:0 0;-webkit-text-stroke:0.2px #f2f2f2;">188,3915</div>
<div class="t" style="left:1434.02px;top:922.19px;font-size:20.3px;color:#f2f2f2;transform:scaleX(1.2771);transform-origin:0 0;-webkit-text-stroke:0.2px #f2f2f2;">186,3800</div>
<div class="a" style="left:0;top:978px;width:1920px;height:61px;background:linear-gradient(#2e2e2e,#262626);"></div>
<div class="a" style="left:810px;top:978px;width:787px;height:61px;background:linear-gradient(#474747,#1f1f1f);"></div>
<div class="a" style="left:1px;top:978px;width:45px;height:61px;border-radius:5px;background:linear-gradient(#a8a8a8,#7a7a7a 50%,#555);"></div>
<div class="a" style="left:16px;top:980px;width:15px;height:15px;border-radius:50%;background:linear-gradient(#777,#a0a0a0);"></div>
<svg style="left:19.5px;top:985px;" width="8" height="5"><path d="M0 5H8L4 0Z" fill="#222"/></svg>
<div class="a" style="left:6px;top:1004px;width:35px;height:30px;border-radius:3px;background:#ffff00;box-shadow:inset 1px 1px 1px #7a7a20;"></div>
<div class="a" style="left:52px;top:978px;width:150px;height:61px;border-radius:5px;background:linear-gradient(#aaaaaa,#888 45%,#4e4e4e);"></div>
<div class="a" style="left:57px;top:983px;width:140px;height:36px;border-radius:3px;background:#c1c2a4;box-shadow:inset 1px 1px 1px rgba(0,0,0,.35);"></div>
<div class="t" style="left:115.88px;top:1024.25px;font-size:11px;color:#262626;-webkit-text-stroke:0.2px #262626;">20%</div>
<div class="a" style="left:204px;top:978px;width:150px;height:61px;border-radius:5px;background:linear-gradient(#aaaaaa,#888 45%,#4e4e4e);"></div>
<div class="a" style="left:209px;top:983px;width:140px;height:36px;border-radius:3px;background:#c2c288;box-shadow:inset 1px 1px 1px rgba(0,0,0,.35);"></div>
<div class="t" style="left:267.88px;top:1024.25px;font-size:11px;color:#262626;-webkit-text-stroke:0.2px #262626;">40%</div>
<div class="a" style="left:356px;top:978px;width:150px;height:61px;border-radius:5px;background:linear-gradient(#aaaaaa,#888 45%,#4e4e4e);"></div>
<div class="a" style="left:361px;top:983px;width:140px;height:36px;border-radius:3px;background:#c2c26e;box-shadow:inset 1px 1px 1px rgba(0,0,0,.35);"></div>
<div class="t" style="left:419.88px;top:1024.25px;font-size:11px;color:#262626;-webkit-text-stroke:0.2px #262626;">60%</div>
<div class="a" style="left:507px;top:978px;width:151px;height:61px;border-radius:5px;background:linear-gradient(#aaaaaa,#888 45%,#4e4e4e);"></div>
<div class="a" style="left:512px;top:983px;width:141px;height:36px;border-radius:3px;background:#c1c14b;box-shadow:inset 1px 1px 1px rgba(0,0,0,.35);"></div>
<div class="t" style="left:571.38px;top:1024.25px;font-size:11px;color:#262626;-webkit-text-stroke:0.2px #262626;">80%</div>
<div class="a" style="left:660px;top:978px;width:150px;height:61px;border-radius:5px;background:linear-gradient(#1e1e1e,#353535);"></div>
<div class="a" style="left:665px;top:983px;width:140px;height:36px;border-radius:3px;background:#c2c200;"></div>
<div class="t" style="left:721.12px;top:1024.65px;font-size:11px;font-weight:bold;color:#fff;">100%</div>
<div class="a" style="left:1597px;top:978px;width:48px;height:61px;border-radius:4px;background:linear-gradient(#9a9a9a,#6a6a6a);"></div>
<div class="a" style="left:1597px;top:996px;width:48px;height:1px;background:#444;"></div>
<div class="a" style="left:1614px;top:980px;width:15px;height:15px;border-radius:50%;background:linear-gradient(#777,#a0a0a0);"></div>
<svg style="left:1617.5px;top:985px;" width="8" height="5"><path d="M0 5H8L4 0Z" fill="#222"/></svg>
<div class="a" style="left:1606px;top:1003px;width:25px;height:25px;border:3px solid #222;border-radius:4px;background:linear-gradient(#aaa 50%,#8a8a8a 50%);"></div>
<div class="a" style="left:1614px;top:1011px;width:14px;height:14px;background:#000;"></div>
<div class="a" style="left:1646.0px;top:978px;width:44.6px;height:30px;background:linear-gradient(#b0b0b0,#6e6e6e);border-radius:4px 0 0 0;"></div>
<div class="a" style="left:1658.0px;top:983px;width:20px;height:20px;border-radius:50%;background:linear-gradient(#7a7a7a,#a8a8a8);"></div>
<div class="a" style="left:1691.2px;top:978px;width:44.6px;height:30px;background:linear-gradient(#b0b0b0,#6e6e6e);border-radius:0;"></div>
<div class="a" style="left:1703.2px;top:983px;width:20px;height:20px;border-radius:50%;background:linear-gradient(#7a7a7a,#a8a8a8);"></div>
<div class="a" style="left:1736.4px;top:978px;width:44.6px;height:30px;background:linear-gradient(#b0b0b0,#6e6e6e);border-radius:0;"></div>
<div class="a" style="left:1748.4px;top:983px;width:20px;height:20px;border-radius:50%;background:linear-gradient(#7a7a7a,#a8a8a8);"></div>
<div class="a" style="left:1781.6px;top:978px;width:44.6px;height:30px;background:linear-gradient(#b0b0b0,#6e6e6e);border-radius:0;"></div>
<div class="a" style="left:1793.6px;top:983px;width:20px;height:20px;border-radius:50%;background:linear-gradient(#7a7a7a,#a8a8a8);"></div>
<div class="a" style="left:1826.8px;top:978px;width:44.6px;height:30px;background:linear-gradient(#b0b0b0,#6e6e6e);border-radius:0;"></div>
<div class="a" style="left:1838.8px;top:983px;width:20px;height:20px;border-radius:50%;background:linear-gradient(#7a7a7a,#a8a8a8);"></div>
<div class="a" style="left:1690.2px;top:978px;width:1px;height:30px;background:#3a3a3a;"></div>
<div class="a" style="left:1735.4px;top:978px;width:1px;height:30px;background:#3a3a3a;"></div>
<div class="a" style="left:1780.6px;top:978px;width:1px;height:30px;background:#3a3a3a;"></div>
<div class="a" style="left:1825.8px;top:978px;width:1px;height:30px;background:#3a3a3a;"></div>
<div class="a" style="left:1872px;top:978px;width:46px;height:30px;border-radius:0 4px 0 0;background:linear-gradient(#3c3c3c,#252525);"></div>
<div class="a" style="left:1886px;top:983px;width:20px;height:20px;border-radius:50%;background:linear-gradient(#202020,#2e2e2e);"></div>
<div class="a" style="left:1665px;top:988.5px;width:8px;height:8px;background:#1e1e1e;"></div>
<svg style="left:1712px;top:987.5px;" width="9" height="11"><path d="M0 0L9 5.5L0 11Z" fill="#1e1e1e"/></svg>
<svg style="left:1753px;top:987.5px;" width="13" height="11"><path d="M4 1H1.5V10H4M9 1H11.5V10H9" fill="none" stroke="#1e1e1e" stroke-width="2"/><rect x="5" y="5" width="1.4" height="1.4" fill="#1e1e1e"/><rect x="7" y="5" width="1.4" height="1.4" fill="#1e1e1e"/></svg>
<svg style="left:1797.5px;top:989.5px;" width="15" height="7"><path d="M7.5 3.5C5.5 0.8 1.2 0.8 1.2 3.5C1.2 6.2 5.5 6.2 7.5 3.5C9.5 0.8 13.8 0.8 13.8 3.5C13.8 6.2 9.5 6.2 7.5 3.5Z" fill="none" stroke="#1e1e1e" stroke-width="1.8"/></svg>
<svg style="left:1844px;top:986.5px;" width="12" height="13"><path d="M2 5.5A4.3 4.3 0 0 1 9.3 3.2M10 7.5A4.3 4.3 0 0 1 2.7 9.8" fill="none" stroke="#1e1e1e" stroke-width="2"/><path d="M7.3 1L11.3 1.3L10.5 5Z M4.7 12L0.7 11.7L1.5 8Z" fill="#1e1e1e"/></svg>
<div class="a" style="left:1646px;top:1009px;width:136px;height:29px;border-radius:4px 0 0 4px;background:linear-gradient(#b0b0b0,#6e6e6e);"></div>
<div class="a" style="left:1783px;top:1009px;width:135.5px;height:29px;border-radius:0 4px 4px 0;background:linear-gradient(#b0b0b0,#6e6e6e);"></div>
<div class="a" style="left:1667px;top:1014px;width:20px;height:20px;border-radius:50%;background:linear-gradient(#7a7a7a,#a8a8a8);"></div>
<div class="a" style="left:1880px;top:1014px;width:20px;height:20px;border-radius:50%;background:linear-gradient(#7a7a7a,#a8a8a8);"></div>
<svg style="left:1672px;top:1019px;" width="11" height="9"><path d="M5 0.5L1 4.5L5 8.5M10 0.5L6 4.5L10 8.5" fill="none" stroke="#222" stroke-width="1.6"/></svg>
<svg style="left:1885px;top:1019px;" width="11" height="9"><path d="M1 0.5L5 4.5L1 8.5M6 0.5L10 4.5L6 8.5" fill="none" stroke="#222" stroke-width="1.6"/></svg>
<div class="t" style="left:1703.01px;top:1013.25px;font-size:23px;color:#2a2a2a;transform:scaleX(0.9875);transform-origin:0 0;-webkit-text-stroke:0.6px #2a2a2a;">Back</div>
<div class="t" style="left:1809.15px;top:1013.25px;font-size:23px;color:#2a2a2a;transform:scaleX(1.0980);transform-origin:0 0;-webkit-text-stroke:0.6px #2a2a2a;">Next</div>
<div class="a" style="left:0;top:1039px;width:1920px;height:9px;background:#03111a;"></div>
<div class="a" style="left:48px;top:1039px;width:343px;height:9px;background:#323232;"></div>
<div class="a" style="left:737px;top:1039px;width:48px;height:9px;background:#2e3d48;"></div>
<div class="a" style="left:1914.5px;top:1040px;width:1px;height:8px;background:#8a9aa0;"></div>
<div class="a" style="left:1800px;top:1039px;width:60px;height:9px;overflow:hidden;"><div class="t" style="left:21px;top:4px;font-size:12px;color:#e8e8e8;">14:02</div></div>
</body></html>
